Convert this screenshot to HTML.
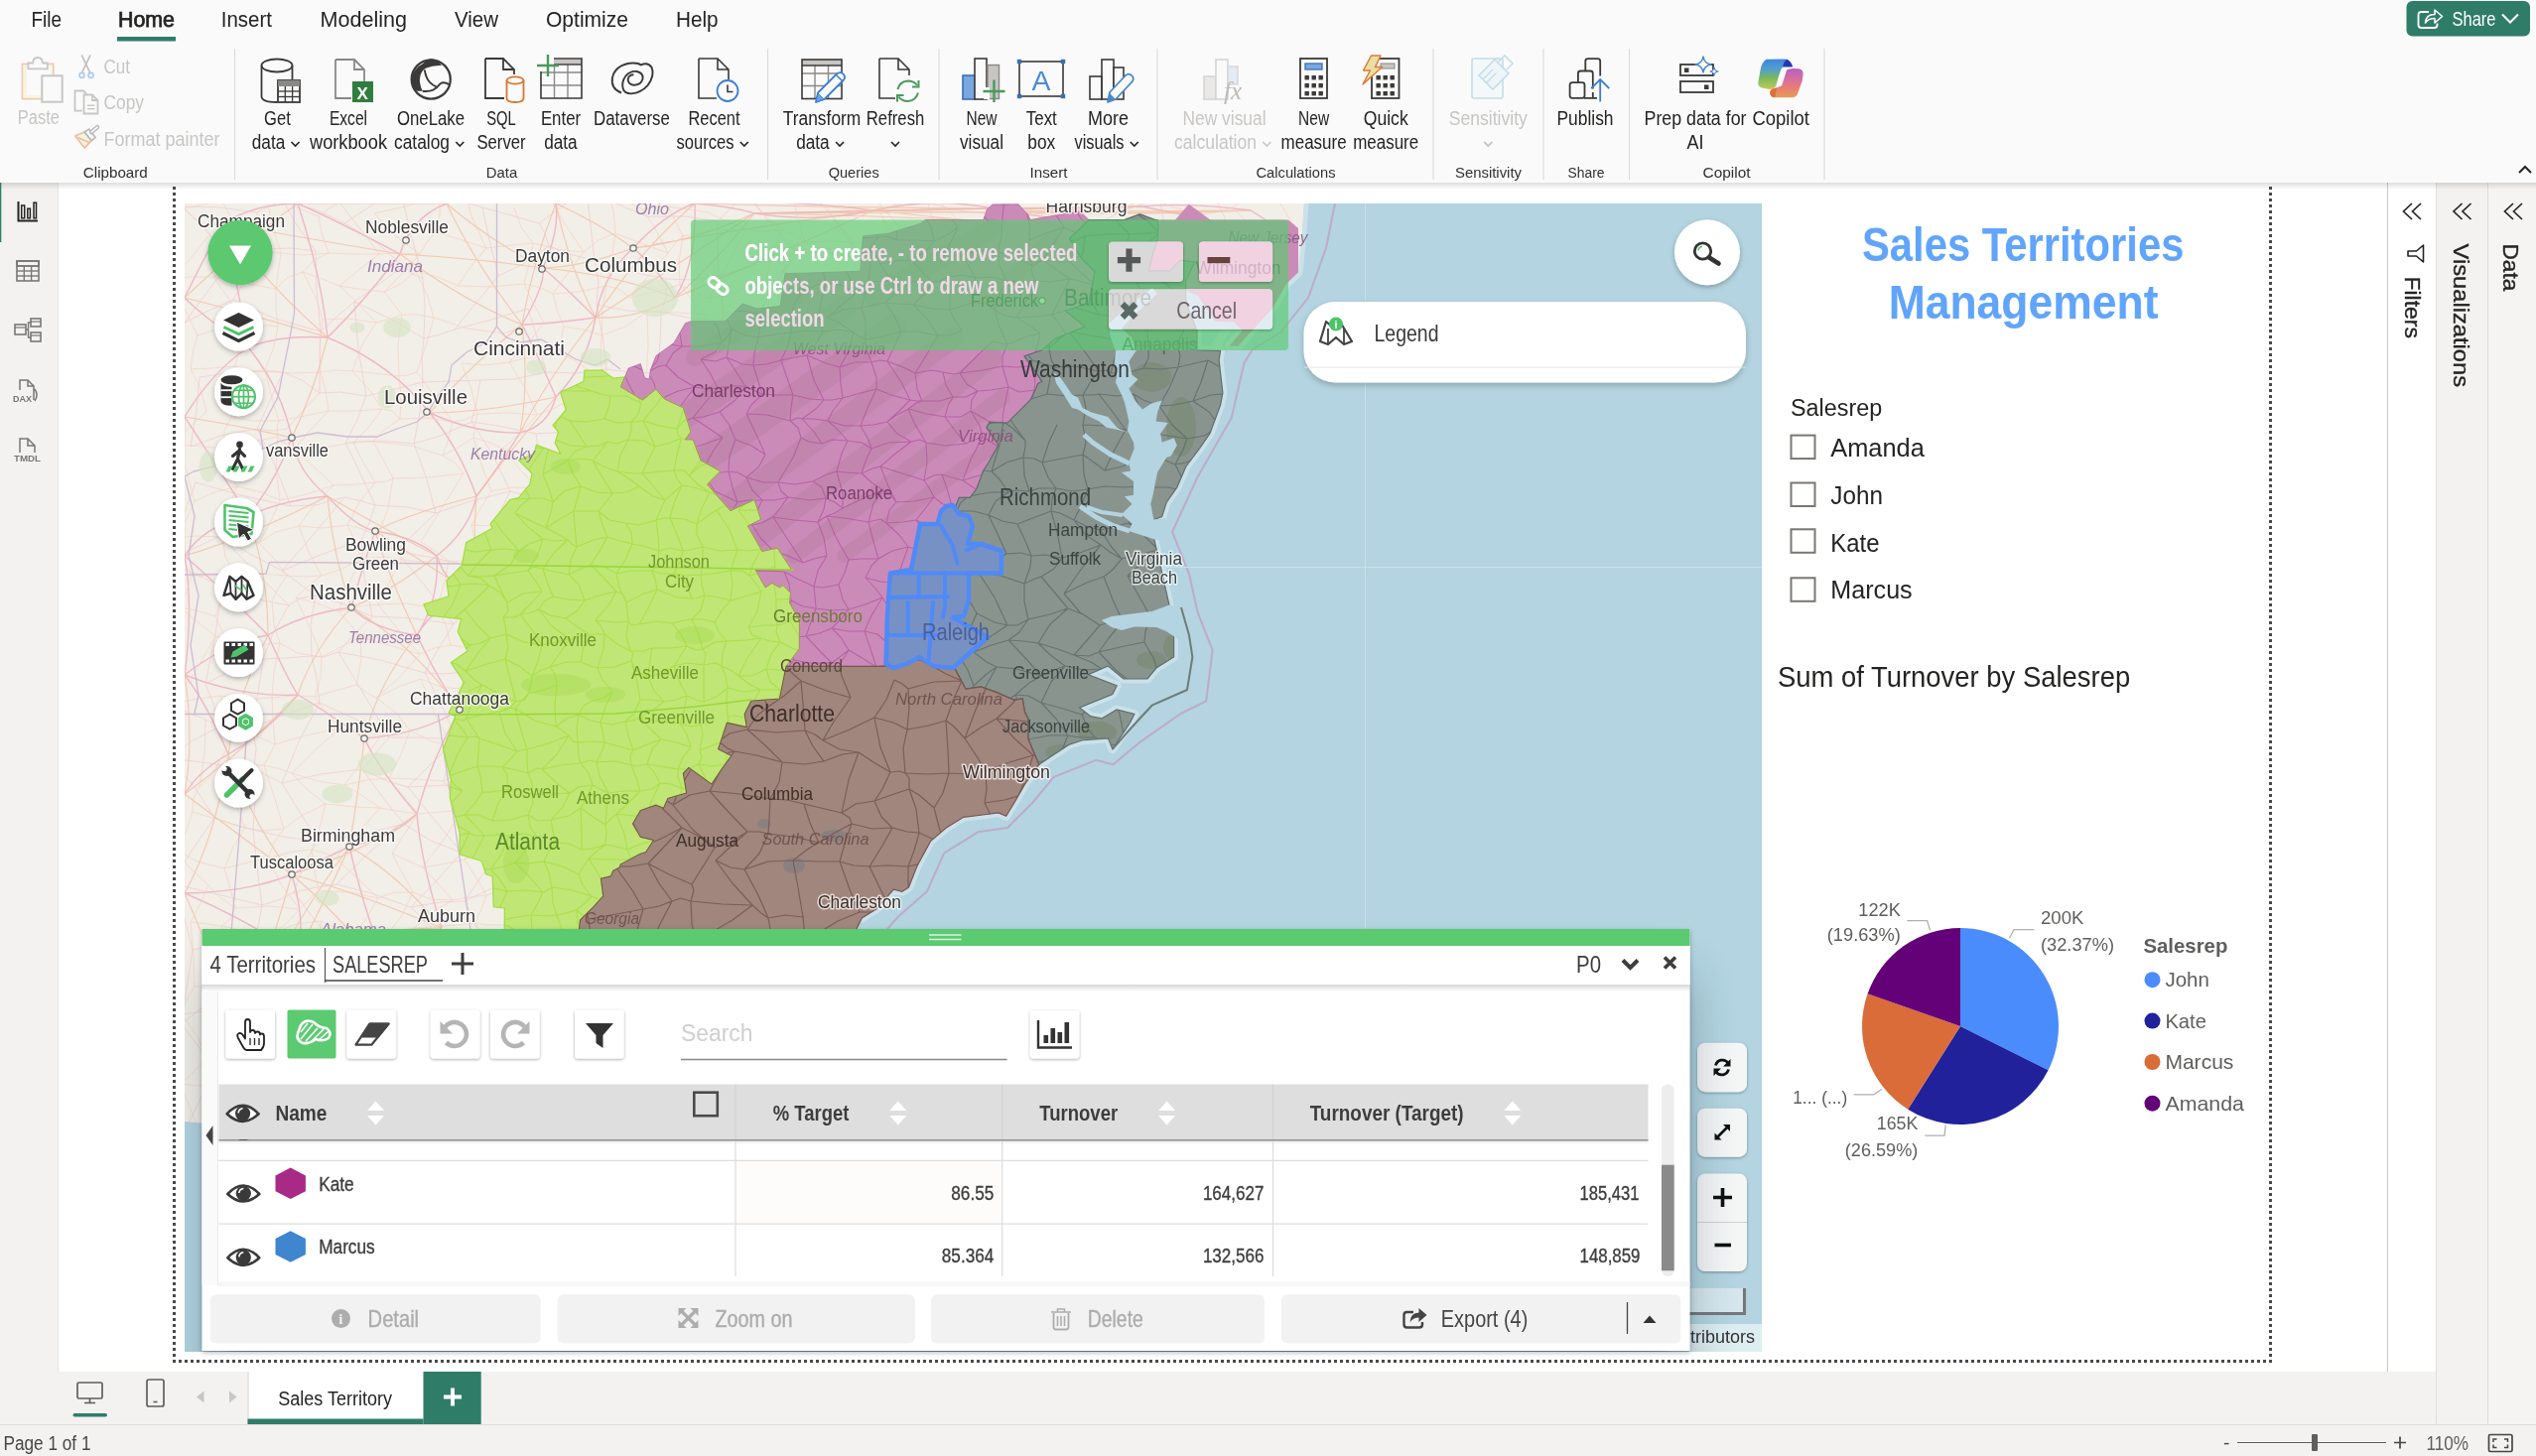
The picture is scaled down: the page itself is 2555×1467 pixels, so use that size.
<!DOCTYPE html>
<html lang="en"><head><meta charset="utf-8"><title>Sales Territory</title>
<style>
html,body{margin:0;padding:0;background:#fff;}
body{width:2555px;height:1467px;overflow:hidden;position:relative;font-family:"Liberation Sans", sans-serif;}
svg{position:absolute;left:0;top:0;display:block;will-change:transform;}
text{font-family:"Liberation Sans", sans-serif;white-space:pre;}
</style></head><body>
<svg width="2555" height="1467" viewBox="0 0 2555 1467">
<defs>
<filter id="sh" x="-30%" y="-30%" width="160%" height="160%"><feDropShadow dx="0" dy="2" stdDeviation="2.5" flood-color="#000" flood-opacity="0.28"/></filter>
<filter id="sh2" x="-30%" y="-30%" width="160%" height="160%"><feDropShadow dx="0" dy="1" stdDeviation="1.6" flood-color="#000" flood-opacity="0.35"/></filter>
<filter id="sh3" x="-10%" y="-30%" width="120%" height="180%"><feDropShadow dx="0" dy="3" stdDeviation="3" flood-color="#000" flood-opacity="0.22"/></filter>
<filter id="bigsh" x="-10%" y="-20%" width="120%" height="140%"><feGaussianBlur stdDeviation="26"/></filter>
<clipPath id="mapclip"><rect x="186" y="205" width="1589" height="1157"/></clipPath>
<clipPath id="toastclip"><rect x="696" y="221.5" width="602" height="131.5" rx="4"/></clipPath>
</defs>

<rect x="0.0" y="0.0" width="2555.0" height="1467.0" fill="#ffffff" />
<rect x="0.0" y="0.0" width="2555.0" height="184.0" fill="#fafafa" />
<linearGradient id="rsh" x1="0" y1="0" x2="0" y2="1"><stop offset="0" stop-color="#000" stop-opacity="0.13"/><stop offset="1" stop-color="#000" stop-opacity="0"/></linearGradient>
<rect x="0.0" y="184.0" width="58.0" height="1252.0" fill="#f3f2f1" />
<line x1="58.5" y1="184.0" x2="58.5" y2="1436.0" stroke="#e6e5e4" stroke-width="1" />
<rect x="58.0" y="1382.0" width="2497.0" height="54.0" fill="#f3f2f1" />
<rect x="0.0" y="1435.0" width="2555.0" height="32.0" fill="#f3f2f1" />
<line x1="0.0" y1="1435.5" x2="2555.0" y2="1435.5" stroke="#dddcdb" stroke-width="1" />
<rect x="2405.0" y="184.0" width="49.0" height="1198.0" fill="#ffffff" />
<line x1="2405.5" y1="184.0" x2="2405.5" y2="1382.0" stroke="#c8c6c4" stroke-width="1" />
<rect x="2454.0" y="184.0" width="52.0" height="1252.0" fill="#f3f2f1" />
<rect x="2506.0" y="184.0" width="49.0" height="1252.0" fill="#f5f4f3" />
<line x1="2454.5" y1="184.0" x2="2454.5" y2="1436.0" stroke="#e1dfdd" stroke-width="1" />
<line x1="2506.5" y1="184.0" x2="2506.5" y2="1436.0" stroke="#e1dfdd" stroke-width="1" />
<rect x="0.0" y="184.0" width="2555.0" height="7.0" fill="url(#rsh)" />
<rect x="0.0" y="184.0" width="1.3" height="60.0" fill="#2f7d68" />
<line x1="175.5" y1="188.0" x2="175.5" y2="1373.0" stroke="#4a4a4a" stroke-width="3" stroke-dasharray="3 3"/>
<line x1="2287.5" y1="188.0" x2="2287.5" y2="1373.0" stroke="#4a4a4a" stroke-width="3" stroke-dasharray="3 3"/>
<line x1="174.0" y1="1371.5" x2="2289.0" y2="1371.5" stroke="#4a4a4a" stroke-width="3" stroke-dasharray="3 3"/>
<g clip-path="url(#mapclip)">
<rect x="186.0" y="205.0" width="1589.0" height="1157.0" fill="#f2eee8" />
<path d="M225,225Q258,205 300,205M225,225Q210,251 186,300M225,225Q239,284 250,350M403,256Q414,219 450,205M403,256Q364,307 330,340M403,256Q341,223 300,205M547,270Q550,286 526,327M547,270Q564,232 560,205M547,270Q564,284 600,320M638,250Q663,271 680,300M638,250Q670,215 700,205M638,250Q607,277 600,320M526,327Q558,326 600,320M526,327Q542,358 560,400M433,416Q479,437 524,436M433,416Q463,452 480,500M433,416Q395,367 330,340M294,441Q299,475 330,500M294,441Q279,483 250,520M294,441Q283,390 250,350M524,436Q552,430 560,400M524,436Q501,473 480,500M378,535Q358,531 330,500M378,535Q418,541 440,560M378,535Q363,578 354,612M354,612Q375,634 420,640M354,612Q302,619 270,640M463,715Q443,688 420,640M463,715Q424,740 367,744M463,715Q435,765 420,820M367,744Q324,714 300,700M367,744Q386,782 420,820M352,853Q319,869 294,881M352,853Q399,842 420,820M294,881Q308,928 300,960M294,881Q250,899 186,900M445,935Q410,955 400,1000M445,935Q424,868 420,820M186,300Q207,321 250,350M186,300Q173,370 186,420M186,420Q214,374 250,350M186,420Q228,484 250,520M186,560Q206,529 250,520M186,560Q224,593 270,640M186,560Q195,611 186,680M186,680Q209,710 230,760M186,680Q229,647 270,640M186,680Q244,703 300,700M186,800Q201,776 230,760M186,800Q177,858 186,900M186,900Q238,922 300,960M300,205Q324,279 330,340M450,205Q501,192 560,205M700,205Q743,209 760,215M700,205Q702,266 680,300M330,340Q282,337 250,350M270,640Q288,681 300,700M230,760Q269,738 300,700M300,960Q357,979 400,1000M300,960Q261,1013 240,1050M400,1000Q371,935 352,853M560,400Q591,369 600,320M480,500Q473,534 440,560M420,640Q440,606 480,600M420,640Q443,604 440,560M330,500Q283,504 250,520M480,600Q450,591 440,560M760,215Q822,225 880,212M880,212Q941,198 1000,210M880,212Q788,200 700,205M1000,210Q1081,211 1150,208M1000,210Q875,213 760,215M1150,208Q1198,204 1260,212M1150,208Q1233,224 1300,240M1260,212Q1283,226 1300,240M1300,240Q1149,237 1000,210" fill="none" stroke="#e9a3b8" stroke-width="1.4" opacity="0.7"/>
<path d="M225,225Q265,283 330,340M225,225Q301,239 403,256M403,256Q468,304 526,327M403,256Q477,260 547,270M547,270Q587,269 638,250M547,270Q490,240 450,205M638,250Q604,225 560,205M526,327Q533,387 524,436M526,327Q536,268 560,205M433,416Q494,415 560,400M433,416Q470,371 526,327M294,441Q317,393 330,340M294,441Q242,429 186,420M524,436Q550,384 600,320M378,535Q416,516 480,500M378,535Q390,577 420,640M354,612Q394,596 440,560M354,612Q315,655 300,700M463,715Q468,668 480,600M463,715Q421,654 354,612M367,744Q362,792 352,853M367,744Q380,690 420,640M352,853Q326,910 300,960M352,853Q403,882 445,935M294,881Q237,838 186,800M294,881Q251,824 230,760M445,935Q368,935 300,960M445,935Q356,898 294,881M186,300Q246,243 300,205M186,300Q251,316 330,340M186,420Q185,490 186,560M186,560Q245,543 330,500M186,680Q196,745 186,800M186,800Q244,758 300,700M186,900Q217,844 230,760M186,900Q223,984 240,1050M300,205Q367,205 450,205M450,205Q475,260 526,327M560,205Q573,268 600,320M700,205Q643,201 560,205M700,205Q642,255 600,320M270,640Q270,579 250,520M230,760Q238,704 270,640M420,820Q368,858 294,881M400,1000Q360,938 294,881M400,1000Q317,1038 240,1050M240,1050Q273,956 294,881M240,1050Q286,942 352,853M560,400Q510,459 480,500M480,500Q476,551 480,600M600,320Q641,322 680,300M680,300Q718,268 760,215M680,300Q623,277 547,270M330,500Q335,558 354,612M330,500Q378,528 440,560M480,600Q425,566 378,535M760,215Q697,244 638,250M760,215Q680,268 600,320M880,212Q766,264 680,300M880,212Q750,230 638,250M1000,210Q1132,219 1260,212M1000,210Q839,209 700,205M1150,208Q1017,217 880,212M1150,208Q967,210 760,215M1260,212Q1070,217 880,212M1260,212Q1009,214 760,215M1300,240Q1096,237 880,212M1300,240Q1042,221 760,215" fill="none" stroke="#f2bc9c" stroke-width="1.1" opacity="0.75"/>
<clipPath id="landclip"><path d="M186.0,205.0 L1314.0,205.0 L1312.0,234.4 L1308.0,274.6 L1296.4,285.4 L1282.1,310.4 L1247.3,348.8 L1238.4,348.8 L1251.8,332.7 L1242.9,324.6 L1224.1,323.8 L1207.1,297.9 L1194.6,292.5 L1195.0,305.0 L1200.0,318.0 L1206.0,333.0 L1206.0,352.7 L1229.6,353.3 L1228.1,362.7 L1231.9,395.9 L1229.6,408.0 L1219.0,436.7 L1208.5,451.8 L1194.9,470.0 L1185.8,491.1 L1175.2,506.2 L1170.7,520.6 L1162.4,523.6 L1162.8,543.3 L1171.6,580.8 L1178.0,609.5 L1182.6,640.0 L1182.6,662.0 L1165.0,673.0 L1156.0,684.0 L1131.9,684.0 L1116.4,671.0 L1096.5,679.7 L1125.2,690.8 L1120.8,699.6 L1087.7,712.9 L1098.7,721.7 L1109.8,723.9 L1125.2,715.0 L1142.9,719.5 L1138.5,728.3 L1120.8,754.8 L1116.4,743.8 L1090.0,746.0 L1076.7,750.4 L1063.4,759.2 L1046.8,770.3 L1032.5,790.2 L1023.7,805.6 L1013.7,822.2 L1006.0,818.9 L990.0,821.0 L970.7,823.3 L953.0,834.3 L937.5,847.6 L924.3,871.9 L915.5,894.0 L908.8,898.4 L900.4,896.2 L882.7,916.0 L868.3,924.9 L862.8,936.3 L850.0,970.0 L700.0,1100.0 L560.0,1180.0 L400.0,1150.0 L186.0,1130.0 L186.0,1130.0Z"/></clipPath>
<path d="M184,208L222,209L259,214M184,208L208,233L234,261M234,261L248,256L265,251M234,261L209,294L186,325M186,325L210,313L235,302M201,380L244,374L285,375M201,380L198,413L192,450M192,450L225,438L259,432M197,486L243,499L293,510M197,486L182,527L168,567M168,567L194,553L222,540M168,567L194,577L224,591M224,591L256,603L291,610M224,591L217,639L207,689M207,689L234,675L265,664M207,689L216,712L222,732M222,732L237,734L254,733M222,732L194,746L171,764M171,764L211,769L256,775M171,764L196,793L216,824M216,824L236,831L255,836M216,824L194,856L172,890M172,890L215,900L264,912M172,890L186,925L194,957M194,957L226,950L256,948M194,957L188,996L183,1032M183,1032L204,1015L226,998M183,1032L202,1057L216,1081M216,1081L253,1073L286,1061M216,1081L200,1111L186,1140M186,1140L218,1138L247,1131M186,1140L201,1163L213,1181M213,1181L239,1192L259,1201M213,1181L208,1225L208,1271M259,214L273,207L285,202M259,214L261,232L265,251M265,251L294,250L318,253M265,251L250,277L235,302M235,302L277,321L323,334M285,375L304,383L322,396M285,375L271,406L259,432M259,432L275,434L289,432M259,432L277,469L293,510M293,510L318,509L347,501M222,540L252,558L284,575M222,540L256,575L291,610M291,610L302,603L318,600M291,610L276,636L265,664M265,664L288,663L314,661M265,664L260,698L254,733M254,733L285,721L322,708M254,733L258,754L256,775M256,775L270,782L284,789M256,775L257,807L255,836M255,836L290,844L320,847M255,836L259,874L264,912M264,912L283,906L296,899M264,912L260,933L256,948M256,948L301,954L351,958M256,948L243,973L226,998M226,998L265,1016L305,1033M226,998L254,1029L286,1061M286,1061L301,1058L317,1060M286,1061L267,1094L247,1131M247,1131L283,1137L320,1147M247,1131L255,1169L259,1201M259,1201L292,1189L320,1177M259,1201L242,1230L228,1255M285,202L318,211L347,225M285,202L299,227L318,253M318,253L319,292L323,334M323,334L337,321L357,304M323,334L322,364L322,396M322,396L343,395L369,399M322,396L305,414L289,432M347,501L361,504L378,509M347,501L318,536L284,575M284,575L323,559L364,544M284,575L304,590L318,600M318,600L347,609L375,621M318,600L313,629L314,661M314,661L326,662L341,657M314,661L319,683L322,708M322,708L359,725L392,743M322,708L301,747L284,789M284,789L323,780L365,775M284,789L303,820L320,847M320,847L365,841L407,830M320,847L306,872L296,899M296,899L319,894L339,891M296,899L321,932L351,958M351,958L369,949L387,940M351,958L329,994L305,1033M305,1033L327,1020L346,1011M305,1033L313,1045L317,1060M317,1060L355,1057L392,1059M317,1060L321,1101L320,1147M320,1147L338,1148L354,1150M320,1147L320,1160L320,1177M320,1177L366,1187L410,1198M320,1177L318,1223L313,1268M347,225L376,206L402,185M347,225L379,244L406,268M406,268L414,275L426,281M406,268L381,287L357,304M357,304L393,321L427,341M357,304L361,352L369,399M369,399L394,393L426,385M369,399L359,425L348,446M348,446L381,444L417,447M348,446L363,477L378,509M378,509L410,511L439,517M378,509L372,527L364,544M364,544L380,547L399,555M364,544L367,581L375,621M375,621L416,623L457,629M375,621L355,641L341,657M341,657L383,665L428,678M341,657L368,702L392,743M392,743L425,743L460,745M392,743L381,756L365,775M365,775L390,787L411,793M365,775L386,804L407,830M407,830L434,847L465,859M407,830L372,859L339,891M339,891L374,900L414,914M387,940L426,949L463,962M387,940L366,974L346,1011M346,1011L387,1011L424,1012M346,1011L372,1036L392,1059M392,1059L421,1070L451,1080M392,1059L372,1106L354,1150M354,1150L377,1147L399,1139M354,1150L381,1176L410,1198M410,1198L441,1201L469,1208M410,1198L387,1226L368,1253M402,185L442,195L486,209M402,185L413,232L426,281M426,281L428,309L427,341M427,341L440,338L458,332M427,341L425,360L426,385M426,385L454,384L484,383M426,385L423,415L417,447M417,447L444,439L475,425M417,447L430,483L439,517M439,517L474,505L514,495M439,517L417,538L399,555M399,555L442,563L481,572M399,555L428,590L457,629M457,629L474,610L494,589M457,629L442,653L428,678M428,678L446,679L467,677M428,678L446,713L460,745M460,745L474,728L492,712M460,745L435,769L411,793M411,793L451,791L494,792M411,793L436,824L465,859M465,859L484,860L502,860M465,859L442,885L414,914M414,914L444,909L468,908M414,914L440,941L463,962M463,962L476,960L492,956M463,962L443,986L424,1012M424,1012L456,1023L489,1035M424,1012L436,1044L451,1080M451,1080L486,1073L522,1070M451,1080L424,1107L399,1139M399,1139L439,1130L480,1125M399,1139L435,1174L469,1208M469,1208L476,1199L489,1191M469,1208L446,1225L428,1244M486,209L515,217L543,225M486,209L493,242L502,278M502,278L527,266L553,248M502,278L479,306L458,332M458,332L495,322L532,311M484,383L518,382L550,375M484,383L480,405L475,425M475,425L507,430L540,437M475,425L497,459L514,495M514,495L532,500L555,510M514,495L496,532L481,572M481,572L486,579L494,589M494,589L518,587L544,590M494,589L480,632L467,677M467,677L510,663L550,649M467,677L480,697L492,712M492,712L492,755L494,792M494,792L511,796L526,798M494,792L501,828L502,860M502,860L523,844L542,827M502,860L485,883L468,908M468,908L500,893L532,880M468,908L479,930L492,956M492,956L532,949L578,947M492,956L488,997L489,1035M489,1035L504,1018L518,997M489,1035L504,1055L522,1070M522,1070L543,1070L569,1073M522,1070L502,1097L480,1125M480,1125L508,1134L540,1140M480,1125L483,1159L489,1191M489,1191L535,1201L577,1211M489,1191L491,1228L491,1264M543,225L569,206L591,191M543,225L549,235L553,248M553,248L573,256L599,262M532,311L542,343L550,375M550,375L580,376L611,372M540,437L571,435L601,438M540,437L546,475L555,510M555,510L554,528L555,551M555,551L571,558L587,566M555,551L552,573L544,590M544,590L591,592L639,593M544,590L550,619L550,649M550,649L581,666L611,679M550,649L559,687L572,730M572,730L549,762L526,798M526,798L559,801L598,803M526,798L534,811L542,827M542,827L579,836L616,846M542,827L534,851L532,880M532,880L569,895L609,914M532,880L555,917L578,947M578,947L611,952L641,957M578,947L550,972L518,997M518,997L559,1001L599,1004M518,997L542,1037L569,1073M569,1073L603,1080L631,1089M569,1073L556,1104L540,1140M540,1140L567,1139L598,1143M540,1140L557,1177L577,1211M577,1211L593,1207L608,1209M577,1211L562,1221L542,1236M591,191L623,206L652,218M591,191L595,228L599,262M599,262L637,274L671,281M599,262L603,284L601,307M601,307L632,313L666,314M601,307L607,338L611,372M611,372L635,375L661,376M611,372L605,406L601,438M601,438L625,446L652,449M601,438L611,471L626,506M626,506L651,492L678,474M626,506L608,534L587,566M587,566L623,549L664,534M587,566L610,579L639,593M639,593L664,595L692,597M611,679L629,679L643,682M611,679L606,705L605,725M605,725L637,717L663,712M605,725L602,762L598,803M598,803L625,802L651,795M598,803L605,824L616,846M616,846L613,879L609,914M609,914L637,908L670,901M609,914L627,937L641,957M641,957L670,947L699,941M641,957L621,980L599,1004M599,1004L618,1010L638,1018M599,1004L615,1047L631,1089M631,1089L647,1088L670,1085M631,1089L615,1116L598,1143M598,1143L603,1179L608,1209M608,1209L650,1203L694,1194M652,218L690,218L723,223M671,281L696,282L724,278M671,281L671,300L666,314M666,314L697,321L729,322M666,314L665,347L661,376M661,376L702,371L740,366M661,376L659,411L652,449M652,449L682,440L710,437M652,449L667,461L678,474M678,474L712,476L742,474M678,474L671,506L664,534M664,534L694,543L729,554M664,534L675,564L692,597M692,597L714,608L733,624M692,597L667,641L643,682M643,682L679,673L711,669M663,712L705,712L745,708M663,712L655,754L651,795M651,795L677,787L710,781M651,795L673,822L694,851M694,851L727,855L757,862M694,851L683,876L670,901M670,901L681,903L698,900M670,901L683,919L699,941M699,941L670,979L638,1018M638,1018L679,1024L722,1035M638,1018L653,1054L670,1085M670,1085L703,1076L736,1067M656,1134L676,1135L694,1138M656,1134L674,1166L694,1194M694,1194L727,1185L756,1175M694,1194L671,1218L642,1244M723,223L738,208L753,193M723,223L723,249L724,278M724,278L766,266L803,255M724,278L727,299L729,322M729,322L742,327L760,326M729,322L734,343L740,366M740,366L761,378L778,389M740,366L722,404L710,437M710,437L729,437L749,437M710,437L727,455L742,474M742,474L766,475L784,482M742,474L735,513L729,554M729,554L747,553L767,550M729,554L733,592L733,624M733,624L724,647L711,669M711,669L742,659L767,654M711,669L728,689L745,708M745,708L767,719L782,733M745,708L725,744L710,781M710,781L738,782L772,786M710,781L734,823L757,862M757,862L786,856L810,848M757,862L725,881L698,900M698,900L742,897L782,889M698,900L706,927L721,956M721,956L763,962L806,973M721,956L720,995L722,1035M722,1035L753,1020L784,1009M722,1035L729,1050L736,1067M736,1067L760,1080L787,1094M736,1067L713,1102L694,1138M694,1138L724,1149L754,1155M694,1138L727,1154L756,1175M756,1175L737,1202L720,1228M753,193L786,190L813,187M753,193L776,226L803,255M803,255L837,255L868,260M803,255L779,288L760,326M760,326L801,316L837,305M760,326L766,357L778,389M778,389L812,386L849,387M778,389L762,413L749,437M749,437L778,433L803,424M749,437L767,462L784,482M784,482L821,499L861,513M784,482L775,516L767,550M767,550L805,543L845,536M767,550L776,581L790,607M790,607L822,615L853,622M790,607L777,628L767,654M767,654L795,665L824,677M767,654L776,693L782,733M782,733L810,723L839,708M782,733L778,762L772,786M772,786L790,775L807,765M772,786L792,818L810,848M810,848L833,846L855,844M810,848L793,866L782,889M782,889L803,889L827,885M782,889L796,930L806,973M806,973L823,957L839,946M784,1009L810,1023L839,1039M784,1009L787,1052L787,1094M787,1094L831,1073L872,1057M787,1094L771,1127L754,1155M754,1155L776,1157L805,1153M754,1155L783,1162L812,1175M812,1175L831,1190L851,1203M813,187L845,196L883,202M813,187L842,223L868,260M868,260L891,248L915,242M868,260L854,279L837,305M837,305L866,321L891,336M837,305L840,344L849,387M849,387L876,382L897,377M849,387L824,405L803,424M803,424L850,426L893,433M803,424L832,466L861,513M861,513L879,498L898,480M861,513L853,526L845,536M845,536L865,531L883,532M845,536L847,580L853,622M853,622L890,621L928,624M853,622L839,650L824,677M824,677L858,683L891,685M824,677L832,693L839,708M839,708L824,735L807,765M807,765L848,775L886,785M807,765L828,806L855,844M855,844L895,850L932,856M855,844L842,867L827,885M827,885L849,902L871,919M827,885L835,913L839,946M839,946L883,956L922,971M839,946L839,993L839,1039M839,1039L865,1028L896,1013M839,1039L857,1045L872,1057M872,1057L898,1073L928,1092M872,1057L839,1103L805,1153M805,1153L848,1151L891,1145M805,1153L829,1177L851,1203M851,1203L833,1227L816,1248M883,202L906,201L933,204M883,202L899,220L915,242M915,242L930,247L947,257M915,242L902,288L891,336M891,336L919,334L946,326M891,336L896,359L897,377M897,377L927,389L957,399M897,377L896,407L893,433M893,433L918,429L947,430M898,480L939,488L976,498M898,480L889,507L883,532M883,532L906,577L928,624M928,624L962,618L991,617M891,685L917,685L949,681M891,685L904,702L917,723M917,723L904,751L886,785M886,785L913,788L945,796M886,785L912,822L932,856M932,856L947,848L958,839M932,856L902,886L871,919M871,919L895,903L920,888M871,919L898,945L922,971M922,971L940,956L964,941M922,971L912,992L896,1013M896,1013L911,1023L929,1035M896,1013L915,1055L928,1092M928,1092L912,1121L891,1145M891,1145L926,1141L961,1136M891,1145L907,1166L923,1187M923,1187L907,1211L892,1230M933,204L965,212L1002,216M947,257L974,271L1007,282M947,257L947,292L946,326M946,326L966,320L983,320M946,326L953,365L957,399M957,399L984,388L1012,379M957,399L949,416L947,430M947,430L976,424L1003,418M947,430L963,464L976,498M976,498L1014,493L1047,492M976,498L957,523L941,548M941,548L969,551L999,557M941,548L965,583L991,617M991,617L1008,608L1021,602M991,617L969,648L949,681M949,681L978,678L1005,672M949,681L967,695L990,706M990,706L1002,721L1017,737M945,796L966,782L989,764M958,839L985,832L1016,823M958,839L938,865L920,888M920,888L950,900L983,912M920,888L942,916L964,941M964,941L993,958L1022,977M964,941L949,986L929,1035M929,1035L971,1019L1009,997M971,1075L1012,1083L1049,1095M971,1075L969,1104L961,1136M961,1136L971,1146L979,1151M961,1136L978,1166L991,1197M991,1197L1005,1192L1024,1190M1002,216L1028,219L1057,224M1002,216L1003,247L1007,282M1007,282L1051,272L1095,262M1007,282L997,301L983,320M983,320L996,347L1012,379M1012,379L1053,373L1090,362M1012,379L1006,397L1003,418M1003,418L1031,428L1061,435M1047,492L1060,485L1072,475M1047,492L1021,527L999,557M999,557L1012,579L1021,602M1021,602L1050,608L1082,618M1021,602L1011,634L1005,672M1005,672L1031,665L1054,659M1005,672L1011,702L1017,737M1017,737L1052,727L1089,723M1017,737L1004,749L989,764M989,764L1029,774L1068,786M989,764L1005,794L1016,823M1016,823L1062,843L1107,863M1016,823L1002,866L983,912M983,912L1005,942L1022,977M1022,977L1048,975L1068,976M1022,977L1017,985L1009,997M1009,997L1037,1013L1069,1023M1009,997L1026,1047L1049,1095M1049,1095L1064,1080L1079,1065M1049,1095L1014,1122L979,1151M979,1151L1022,1142L1064,1136M979,1151L1002,1170L1024,1190M1024,1190L1056,1193L1089,1197M1024,1190L1024,1213L1019,1238M1057,224L1077,227L1103,226M1057,224L1078,245L1095,262M1095,262L1130,271L1161,280M1095,262L1086,301L1077,335M1077,335L1085,317L1094,302M1077,335L1083,348L1090,362M1090,362L1110,371L1133,376M1090,362L1078,401L1061,435M1061,435L1092,429L1119,419M1061,435L1069,453L1072,475M1072,475L1107,474L1145,476M1072,475L1062,506L1057,536M1057,536L1078,549L1096,561M1057,536L1072,578L1082,618M1082,618L1115,615L1145,617M1054,659L1080,661L1108,668M1054,659L1073,694L1089,723M1089,723L1107,723L1130,720M1089,723L1081,757L1068,786M1068,786L1099,794L1125,800M1107,863L1116,844L1124,826M1107,863L1084,874L1066,889M1066,889L1095,899L1128,906M1066,889L1068,933L1068,976M1068,976L1110,959L1155,946M1068,976L1069,1002L1069,1023M1069,1023L1092,1017L1111,1006M1069,1023L1076,1044L1079,1065M1079,1065L1070,1099L1064,1136M1064,1136L1092,1142L1121,1155M1064,1136L1077,1166L1089,1197M1089,1197L1111,1193L1135,1193M1089,1197L1077,1215L1067,1235M1103,226L1133,212L1169,199M1103,226L1135,254L1161,280M1161,280L1172,278L1183,280M1161,280L1130,288L1094,302M1094,302L1125,304L1153,303M1094,302L1114,341L1133,376M1133,376L1167,377L1204,378M1119,419L1148,425L1180,428M1119,419L1130,448L1145,476M1145,476L1180,478L1213,476M1145,476L1122,519L1096,561M1096,561L1127,560L1159,560M1096,561L1120,592L1145,617M1145,617L1161,607L1183,602M1145,617L1128,642L1108,668M1108,668L1145,673L1182,678M1108,668L1119,695L1130,720M1130,720L1162,713L1191,711M1130,720L1125,757L1125,800M1125,800L1142,795L1166,795M1125,800L1124,811L1124,826M1124,826L1126,867L1128,906M1128,906L1157,903L1181,904M1128,906L1140,929L1155,946M1155,946L1187,962L1219,978M1155,946L1131,978L1111,1006M1111,1006L1150,1009L1190,1014M1111,1006L1133,1037L1157,1069M1157,1069L1185,1067L1214,1066M1157,1069L1138,1112L1121,1155M1121,1155L1142,1141L1164,1129M1121,1155L1131,1176L1135,1193M1135,1193L1179,1202L1220,1208M1135,1193L1131,1233L1125,1268M1169,199L1197,199L1224,199M1169,199L1174,241L1183,280M1183,280L1222,268L1254,258M1183,280L1165,291L1153,303M1153,303L1184,314L1217,324M1153,303L1178,343L1204,378M1204,378L1240,377L1272,381M1204,378L1194,405L1180,428M1180,428L1213,435L1245,440M1180,428L1198,453L1213,476M1213,476L1230,492L1245,506M1213,476L1189,516L1159,560M1159,560L1202,553L1247,543M1183,602L1211,607L1238,612M1183,602L1180,641L1182,678M1182,678L1208,673L1232,672M1182,678L1186,692L1191,711M1191,711L1235,723L1280,734M1166,795L1207,779L1243,766M1166,795L1178,809L1195,826M1195,826L1229,843L1261,856M1195,826L1187,864L1181,904M1181,904L1194,893L1212,883M1181,904L1198,940L1219,978M1219,978L1247,976L1269,977M1219,978L1203,994L1190,1014M1190,1014L1202,1017L1212,1023M1190,1014L1203,1037L1214,1066M1214,1066L1231,1074L1243,1086M1214,1066L1190,1097L1164,1129M1164,1129L1199,1125L1237,1122M1164,1129L1192,1170L1220,1208M1220,1208L1234,1208L1247,1203M1220,1208L1189,1226L1161,1243M1224,199L1256,197L1283,198M1224,199L1239,230L1254,258M1254,258L1297,262L1338,271M1254,258L1237,289L1217,324M1217,324L1254,322L1288,323M1217,324L1243,354L1272,381M1272,381L1301,382L1327,388M1272,381L1259,411L1245,440M1245,440L1273,436L1306,433M1245,506L1290,502L1331,502M1245,506L1243,526L1247,543M1247,543L1274,556L1304,566M1247,543L1241,577L1238,612M1238,612L1285,619L1332,628M1238,612L1233,641L1232,672M1232,672L1267,672L1308,675M1232,672L1254,700L1280,734M1280,734L1299,735L1318,736M1280,734L1264,751L1243,766M1243,766L1273,775L1301,782M1243,766L1252,810L1261,856M1261,856L1287,842L1313,827M1261,856L1238,871L1212,883M1212,883L1252,901L1299,923M1212,883L1242,930L1269,977M1269,977L1289,963L1312,944M1269,977L1242,1001L1212,1023M1212,1023L1243,1018L1275,1014M1212,1023L1230,1057L1243,1086M1243,1086L1278,1088L1308,1096M1243,1086L1243,1104L1237,1122M1237,1122L1251,1125L1269,1125M1237,1122L1245,1160L1247,1203M1247,1203L1237,1231L1231,1261M1283,198L1303,201L1327,203M1338,271L1360,276L1379,281M1338,271L1311,296L1288,323M1288,323L1308,311L1326,304M1288,323L1307,354L1327,388M1327,388L1345,374L1361,367M1327,388L1317,409L1306,433M1306,433L1322,439L1334,447M1331,502L1353,493L1379,483M1331,502L1319,536L1304,566M1304,566L1315,552L1332,543M1304,566L1315,596L1332,628M1332,628L1344,625L1361,622M1308,675L1321,675L1338,671M1308,675L1314,706L1318,736M1318,736L1310,758L1301,782M1301,782L1317,793L1335,802M1301,782L1307,807L1313,827M1313,827L1352,834L1393,836M1313,827L1303,873L1299,923M1299,923L1322,924L1348,921M1299,923L1308,935L1312,944M1312,944L1342,947L1374,947M1312,944L1291,979L1275,1014M1275,1014L1301,1023L1326,1037M1275,1014L1294,1054L1308,1096M1308,1096L1346,1083L1388,1070M1308,1096L1286,1110L1269,1125M1269,1125L1309,1130L1347,1134M1269,1125L1282,1162L1300,1198M1300,1198L1335,1202L1365,1213M1300,1198L1300,1218L1300,1235M1327,203L1356,205L1382,204M1327,203L1350,244L1379,281M1379,281L1401,276L1427,276M1379,281L1354,292L1326,304M1326,304L1367,317L1413,326M1326,304L1346,332L1361,367M1361,367L1388,363L1418,364M1361,367L1346,407L1334,447M1334,447L1363,437L1396,426M1334,447L1355,465L1379,483M1379,483L1414,489L1449,496M1379,483L1356,511L1332,543M1332,543L1368,561L1410,575M1332,543L1346,583L1361,622M1361,622L1348,648L1338,671M1338,671L1364,678L1389,681M1338,671L1362,697L1389,726M1389,726L1402,735L1411,741M1389,726L1360,763L1335,802M1335,802L1379,798L1419,799M1393,836L1406,834L1415,833M1393,836L1373,881L1348,921M1348,921L1383,905L1414,883M1348,921L1362,937L1374,947M1374,947L1403,953L1432,958M1374,947L1352,989L1326,1037M1326,1037L1374,1028L1424,1021M1326,1037L1355,1053L1388,1070M1388,1070L1421,1067L1449,1066M1388,1070L1369,1100L1347,1134M1347,1134L1380,1132L1417,1129M1347,1134L1353,1170L1365,1213M1365,1213L1407,1191L1451,1173" fill="none" stroke="#efbfc9" stroke-width="0.9" clip-path="url(#landclip)" opacity="0.6" stroke-linejoin="round"/>
<path d="M185,210L206,206L223,201M185,210L200,224L212,235M212,235L194,258L171,283M171,283L191,279L215,279M171,283L185,309L199,338M199,338L221,331L243,328M199,338L195,352L192,372M192,372L214,371L237,369M192,372L202,391L208,415M208,415L190,431L175,449M175,449L197,449L225,452M175,449L188,474L196,505M196,505L216,496L239,490M196,505L187,525L172,543M172,543L196,540L224,541M172,543L185,564L193,580M193,580L213,580L235,576M193,580L187,598L181,612M181,612L198,615L217,621M181,612L202,629L217,641M217,641L227,644L233,649M217,641L196,678L172,710M172,710L199,704L222,701M172,710L192,719L207,725M207,725L218,730L234,737M207,725L206,758L201,793M201,793L211,784L218,772M201,793L195,804L194,818M194,818L221,826L247,834M194,818L187,839L175,855M175,855L199,868L226,875M175,855L190,873L210,892M210,892L221,904L237,915M210,892L202,910L192,929M192,929L209,931L223,933M192,929L195,963L196,994M196,994L227,995L255,997M196,994L189,1006L183,1022M183,1022L198,1020L212,1018M183,1022L198,1043L209,1065M209,1065L233,1062L256,1061M209,1065L194,1081L182,1092M182,1092L199,1094L219,1092M182,1092L196,1128L214,1163M214,1163L223,1156L233,1152M214,1163L209,1181L201,1194M223,201L244,197L268,190M223,201L236,226L253,251M253,251L269,253L283,255M253,251L236,267L215,279M215,279L245,285L278,291M215,279L232,303L243,328M243,328L260,327L280,329M243,328L241,351L237,369M237,369L252,374L267,373M237,369L234,397L233,420M233,420L256,424L281,424M233,420L226,434L225,452M225,452L255,445L280,440M225,452L229,472L239,490M239,490L263,496L282,504M239,490L229,517L224,541M224,541L244,547L261,547M224,541L227,561L235,576M235,576L262,578L289,580M235,576L225,595L217,621M217,621L224,637L233,649M233,649L257,650L282,648M222,701L248,705L274,703M222,701L229,717L234,737M234,737L257,741L277,750M234,737L227,757L218,772M218,772L242,771L266,771M218,772L235,805L247,834M247,834L265,837L286,835M247,834L235,853L226,875M226,875L250,869L270,865M226,875L232,896L237,915M237,915L271,913L302,916M237,915L231,927L223,933M223,933L252,939L276,940M223,933L242,968L255,997M255,997L271,995L291,996M255,997L234,1007L212,1018M212,1018L245,1025L277,1027M256,1061L269,1064L284,1062M256,1061L237,1074L219,1092M219,1092L247,1103L275,1109M233,1152L252,1154L273,1155M268,190L294,207L321,218M268,190L273,223L283,255M283,255L304,257L331,255M283,255L280,276L278,291M278,291L289,280L305,274M278,291L278,311L280,329M280,329L276,349L267,373M267,373L293,376L323,375M267,373L273,398L281,424M281,424L307,419L331,414M281,424L279,431L280,440M280,440L287,447L297,452M280,440L278,473L282,504M282,504L309,498L336,489M282,504L274,523L261,547M261,547L278,536L301,530M261,547L278,565L289,580M289,580L307,581L324,580M289,580L279,595L274,606M274,606L276,629L282,648M282,648L300,658L324,662M282,648L276,677L274,703M274,703L296,701L317,702M274,703L275,725L277,750M277,750L308,741L343,734M277,750L271,762L266,771M266,771L283,775L294,779M266,771L276,802L286,835M286,835L305,821L328,810M286,835L276,849L270,865M270,865L295,858L314,856M270,865L283,891L302,916M302,916L312,906L321,897M302,916L289,930L276,940M276,940L298,931L323,928M276,940L282,970L291,996M291,996L306,987L325,977M291,996L284,1010L277,1027M277,1027L282,1047L284,1062M284,1062L305,1072L321,1079M284,1062L277,1084L275,1109M275,1109L294,1108L309,1113M275,1109L274,1129L273,1155M273,1155L295,1152L319,1147M273,1155L275,1178L281,1198M321,218L333,209L342,204M321,218L324,235L331,255M331,255L358,256L382,256M331,255L317,262L305,274M305,274L322,280L342,288M305,274L318,299L325,322M325,322L350,321L379,325M325,322L322,349L323,375M323,375L338,373L355,374M323,375L328,393L331,414M331,414L359,414L385,412M331,414L312,434L297,452M297,452L325,451L356,446M297,452L319,473L336,489M336,489L359,488L378,486M336,489L317,508L301,530M301,530L325,532L350,529M301,530L311,556L324,580M324,580L345,573L364,563M324,580L311,590L298,602M298,602L317,607L341,616M298,602L313,634L324,662M324,662L345,651L363,642M324,662L323,683L317,702M317,702L341,695L359,690M317,702L328,717L343,734M343,734L361,737L384,741M343,734L319,754L294,779M294,779L320,787L347,791M294,779L309,795L328,810M328,810L358,813L383,814M328,810L322,834L314,856M314,856L326,859L338,865M314,856L317,879L321,897M321,897L353,899L381,905M323,928L339,935L359,940M323,928L323,951L325,977M325,977L347,976L374,977M325,977L311,1002L300,1023M300,1023L323,1020L347,1021M300,1023L308,1049L321,1079M321,1079L344,1072L367,1063M321,1079L316,1094L309,1113M309,1113L335,1103L360,1097M309,1113L316,1131L319,1147M319,1147L339,1142L361,1140M319,1147L314,1172L312,1200M342,204L364,232L382,256M382,256L400,255L423,256M382,256L364,270L342,288M342,288L361,291L387,294M342,288L360,305L379,325M379,325L394,321L405,317M379,325L365,347L355,374M355,374L377,376L402,379M355,374L373,394L385,412M385,412L395,414L403,422M385,412L371,431L356,446M356,446L367,445L376,445M356,446L365,464L378,486M378,486L390,485L396,482M378,486L362,506L350,529M350,529L365,533L381,540M350,529L357,544L364,563M364,563L386,561L405,564M364,563L351,589L341,616M341,616L363,611L381,609M341,616L351,627L363,642M363,642L395,651L423,659M363,642L364,664L359,690M359,690L371,699L379,703M384,741L399,741L413,736M384,741L364,768L347,791M347,791L370,786L392,784M347,791L364,801L383,814M383,814L400,817L421,820M383,814L362,837L338,865M338,865L358,883L381,905M381,905L397,899L416,899M381,905L371,922L359,940M359,940L373,943L388,944M359,940L369,961L374,977M374,977L395,976L418,977M374,977L361,999L347,1021M347,1021L375,1022L404,1025M347,1021L355,1044L367,1063M367,1063L393,1068L423,1072M367,1063L361,1077L360,1097M360,1097L381,1107L405,1113M360,1097L363,1120L361,1140M361,1140L385,1145L409,1145M361,1140L361,1163L365,1190M377,215L413,207L443,193M377,215L399,238L423,256M423,256L430,244L439,234M423,256L404,277L387,294M387,294L404,286L419,273M387,294L397,307L405,317M405,317L422,317L437,320M405,317L401,348L402,379M402,379L411,378L420,375M402,379L404,399L403,422M403,422L430,421L456,425M403,422L386,434L376,445M376,445L414,449L446,459M376,445L386,463L396,482M396,482L431,481L467,477M396,482L391,512L381,540M381,540L393,550L405,564M405,564L426,566L452,565M405,564L393,585L381,609M381,609L409,608L440,613M381,609L400,633L423,659M423,659L438,653L454,650M423,659L403,682L379,703M379,703L404,691L424,684M379,703L399,718L413,736M413,736L435,747L456,752M413,736L404,760L392,784M392,784L420,785L447,787M392,784L405,800L421,820M421,820L446,818L466,816M421,820L407,841L395,860M395,860L413,868L426,874M395,860L406,881L416,899M416,899L434,906L456,907M416,899L404,924L388,944M388,944L401,939L417,935M388,944L402,958L418,977M418,977L433,985L452,991M404,1025L425,1030L442,1033M404,1025L413,1046L423,1072M423,1072L433,1069L448,1062M423,1072L414,1093L405,1113M405,1113L424,1120L443,1122M405,1113L405,1130L409,1145M409,1145L429,1139L452,1138M409,1145L401,1171L394,1197M443,193L453,196L469,197M443,193L443,215L439,234M439,234L463,241L490,250M419,273L441,279L461,288M419,273L431,299L437,320M437,320L471,331L508,336M437,320L430,345L420,375M420,375L439,401L456,425M456,425L468,423L481,417M456,425L452,442L446,459M446,459L461,451L477,441M446,459L459,467L467,477M467,477L445,512L424,546M424,546L437,554L452,565M452,565L469,566L488,569M452,565L447,590L440,613M440,613L462,613L489,610M440,613L449,629L454,650M454,650L475,653L494,655M424,684L444,692L463,694M424,684L438,720L456,752M456,752L472,739L484,732M456,752L452,768L447,787M447,787L459,781L469,774M447,787L456,799L466,816M466,816L485,813L507,814M466,816L449,843L426,874M426,874L444,871L468,866M426,874L440,889L456,907M456,907L472,904L490,902M456,907L436,919L417,935M417,935L449,933L478,930M417,935L436,962L452,991M452,991L444,1013L442,1033M442,1033L451,1035L465,1035M442,1033L443,1048L448,1062M448,1062L480,1069L509,1071M448,1062L443,1094L443,1122M443,1122L454,1114L463,1105M443,1122L448,1132L452,1138M452,1138L443,1165L436,1190M469,197L476,220L490,250M490,250L516,247L537,245M490,250L474,269L461,288M461,288L495,289L528,286M508,336L527,328L548,325M465,366L488,368L513,365M465,366L475,393L481,417M481,417L511,416L541,418M481,417L478,430L477,441M477,441L494,446L506,452M477,441L486,471L495,495M495,495L517,491L542,492M495,495L483,514L475,529M475,529L498,530L519,537M475,529L480,551L488,569M488,569L513,572L541,569M488,569L486,591L489,610M489,610L497,604L508,600M489,610L491,633L494,655M494,655L517,659L547,665M494,655L477,675L463,694M463,694L476,710L484,732M484,732L513,732L547,727M484,732L475,752L469,774M469,774L494,777L524,777M469,774L491,795L507,814M507,814L515,810L529,812M507,814L489,841L468,866M468,866L488,858L511,847M468,866L481,886L490,902M490,902L504,897L520,890M490,902L485,916L478,930M478,930L490,932L508,932M478,930L490,950L499,972M499,972L510,985L523,994M499,972L482,1004L465,1035M465,1035L490,1027L510,1025M465,1035L490,1055L509,1071M509,1071L489,1090L463,1105M463,1105L484,1104L503,1099M487,1159L519,1162L546,1161M487,1159L474,1172L465,1180M518,209L525,229L537,245M537,245L566,252L588,254M537,245L533,266L528,286M528,286L545,290L557,296M528,286L538,307L548,325M548,325L533,345L513,365M513,365L538,359L568,357M513,365L529,391L541,418M541,418L559,411L579,400M541,418L526,435L506,452M506,452L537,459L566,462M506,452L525,474L542,492M542,492L558,488L580,490M542,492L532,513L519,537M519,537L529,535L540,533M519,537L529,553L541,569M541,569L559,573L571,571M541,569L523,586L508,600M508,600L527,611L542,628M508,600L528,635L547,665M547,665L559,664L576,658M547,665L527,689L511,712M511,712L538,711L566,709M511,712L526,722L547,727M547,727L559,731L577,739M547,727L537,749L524,777M524,777L544,779L566,775M524,777L525,794L529,812M529,812L561,809L588,805M529,812L522,827L511,847M511,847L537,856L564,862M511,847L516,866L520,890M520,890L553,901L579,917M520,890L515,912L508,932M508,932L525,937L546,940M508,932L514,962L523,994M523,994L556,995L585,992M523,994L516,1009L510,1025M510,1025L536,1028L556,1034M510,1025L525,1050L538,1079M538,1079L560,1077L581,1078M538,1079L520,1090L503,1099M503,1099L534,1100L560,1103M503,1099L525,1129L546,1161M546,1161L560,1150L569,1135M546,1161L535,1173L527,1190M551,195L578,197L611,194M551,195L568,224L588,254M588,254L603,242L620,235M588,254L573,274L557,296M557,296L583,294L611,288M557,296L561,312L568,329M568,329L588,332L606,338M568,329L565,344L568,357M568,357L586,368L607,384M579,400L596,406L608,407M579,400L574,429L566,462M566,462L586,454L601,444M566,462L574,473L580,490M580,490L597,494L619,498M580,490L561,513L540,533M540,533L553,553L571,571M571,571L601,569L624,567M571,571L558,598L542,628M542,628L572,621L604,613M542,628L561,642L576,658M576,658L589,652L606,641M576,658L570,681L566,709M566,709L583,698L600,693M566,709L569,725L577,739M577,739L589,741L604,738M577,739L570,759L566,775M566,775L581,777L593,774M566,775L578,790L588,805M588,805L601,816L619,821M588,805L575,833L564,862M564,862L581,869L597,876M564,862L574,890L579,917M579,917L606,905L629,896M579,917L561,927L546,940M546,940L577,937L608,937M546,940L567,968L585,992M585,992L610,980L630,970M585,992L572,1015L556,1034M556,1034L575,1038L590,1038M556,1034L570,1057L581,1078M581,1078L601,1075L622,1072M581,1078L571,1093L560,1103M560,1103L575,1099L587,1095M569,1135L598,1137L631,1134M569,1135L553,1156L543,1175M611,194L629,201L647,211M611,194L618,211L620,235M620,235L643,244L673,255M620,235L616,263L611,288M611,288L623,291L635,300M611,288L607,313L606,338M606,338L630,329L652,314M606,338L605,359L607,384M607,384L629,385L651,381M608,407L637,411L662,409M608,407L602,428L601,444M601,444L617,442L628,442M601,444L613,469L619,498M619,498L630,486L644,479M619,498L612,522L604,543M604,543L618,543L636,545M604,543L613,556L624,567M624,567L646,572L671,574M624,567L615,592L604,613M604,613L625,612L642,614M604,613L603,628L606,641M606,641L635,653L666,662M606,641L602,669L600,693M604,738L596,753L593,774M593,774L611,778L627,778M593,774L608,797L619,821M619,821L637,818L656,809M619,821L608,851L597,876M597,876L612,866L628,858M597,876L612,885L629,896M629,896L636,899L647,906M629,896L619,915L608,937M608,937L622,950L632,958M608,937L622,953L630,970M630,970L608,1007L590,1038M590,1038L610,1030L635,1022M590,1038L604,1054L622,1072M622,1072L635,1078L648,1080M622,1072L606,1083L587,1095M587,1095L616,1105L650,1112M587,1095L611,1115L631,1134M631,1134L648,1135L662,1137M631,1134L610,1158L586,1187M647,211L659,209L673,208M647,211L660,230L673,255M673,255L682,243L688,238M673,255L655,276L635,300M635,300L661,294L685,287M652,314L683,315L711,317M652,314L653,348L651,381M651,381L660,383L665,383M651,381L654,393L662,409M662,409L681,411L702,416M662,409L647,428L628,442M628,442L652,444L680,440M628,442L638,464L644,479M644,479L680,486L713,492M644,479L638,513L636,545M636,545L662,532L691,522M636,545L655,557L671,574M671,574L682,577L691,576M671,574L657,594L642,614M642,614L659,619L670,626M666,662L676,655L691,643M666,662L660,687L652,708M652,708L657,698L667,690M652,708L659,727L663,741M663,741L688,743L712,750M663,741L645,762L627,778M627,778L652,777L683,777M627,778L644,795L656,809M656,809L672,819L684,830M656,809L644,835L628,858M647,906L673,908L696,913M647,906L637,930L632,958M632,958L648,945L668,929M632,958L649,969L663,985M663,985L685,974L711,969M663,985L646,1005L635,1022M635,1022L663,1016L685,1014M635,1022L644,1049L648,1080M648,1080L671,1069L692,1057M648,1080L651,1096L650,1112M650,1112L660,1118L676,1120M650,1112L657,1126L662,1137M662,1137L687,1144L709,1149M662,1137L650,1160L638,1179M673,208L694,211L713,214M673,208L681,224L688,238M688,238L717,232L752,231M688,238L684,264L685,287M685,287L701,295L714,301M685,287L698,303L711,317M711,317L719,318L729,315M711,317L688,349L665,383M665,383L687,397L702,416M702,416L716,415L732,417M702,416L692,427L680,440M680,440L691,448L707,456M680,440L696,469L713,492M713,492L722,496L729,495M691,522L707,534L727,545M691,522L688,547L691,576M691,576L713,584L738,589M691,576L681,602L670,626M670,626L681,632L691,643M691,643L721,659L752,672M691,643L680,667L667,690M667,690L688,690L707,690M667,690L690,721L712,750M712,750L730,751L746,750M712,750L700,761L683,777M683,777L697,780L711,787M683,777L685,801L684,830M684,830L712,816L739,805M684,830L677,839L666,852M666,852L684,851L706,846M666,852L682,883L696,913M696,913L715,913L731,915M696,913L684,922L668,929M668,929L695,939L725,954M668,929L689,951L711,969M711,969L734,972L752,981M711,969L698,989L685,1014M685,1014L702,1024L725,1030M685,1014L686,1036L692,1057M692,1057L720,1054L745,1053M676,1120L702,1109L731,1096M676,1120L692,1137L709,1149M709,1149L723,1151L738,1154M709,1149L685,1163L665,1179M713,214L730,222L752,231M752,231L768,233L788,232M752,231L734,264L714,301M714,301L742,294L772,281M714,301L724,311L729,315M729,315L756,319L777,322M729,315L722,348L712,381M712,381L737,370L767,359M712,381L722,402L732,417M732,417L752,406L769,396M732,417L722,435L707,456M707,456L730,457L748,455M707,456L718,475L729,495M729,495L763,484L796,477M729,495L725,520L727,545M738,589L759,576L775,569M738,589L729,607L716,629M716,629L733,620L748,613M716,629L731,652L752,672M752,672L761,655L773,642M752,672L730,681L707,690M707,690L727,699L749,710M707,690L726,719L746,750M746,750L766,749L787,753M746,750L729,768L711,787M711,787L724,797L739,805M739,805L757,803L772,808M739,805L725,827L706,846M706,846L741,856L775,867M706,846L720,881L731,915M731,915L731,932L725,954M725,954L744,952L769,944M725,954L736,967L752,981M752,981L759,976L768,975M752,981L742,1002L725,1030M725,1030L749,1030L775,1029M725,1030L735,1042L745,1053M745,1053L757,1054L768,1053M731,1096L748,1097L768,1102M731,1096L736,1124L738,1154M738,1154L761,1145L780,1137M738,1154L730,1179L727,1199M754,199L776,199L799,195M754,199L769,216L788,232M788,232L798,236L811,244M788,232L777,258L772,281M772,281L778,279L789,273M772,281L774,301L777,322M777,322L801,315L821,314M777,322L775,338L767,359M767,359L786,370L808,377M767,359L769,379L769,396M769,396L801,413L828,424M769,396L759,425L748,455M748,455L771,449L791,449M748,455L772,468L796,477M796,477L806,477L819,479M796,477L777,504L759,528M759,528L769,546L775,569M775,569L804,576L837,579M748,613L783,609L816,601M748,613L761,628L773,642M773,642L803,654L834,670M773,642L762,677L749,710M749,710L780,705L810,699M749,710L769,734L787,753M787,753L808,747L826,737M787,753L778,768L770,786M770,786L791,786L812,781M770,786L774,800L772,808M772,808L795,810L823,817M772,808L772,839L775,867M775,867L790,866L805,864M775,867L779,878L787,891M787,891L810,900L835,911M787,891L776,919L769,944M769,944L782,950L796,950M769,944L766,963L768,975M768,975L789,980L813,983M768,975L769,1003L775,1029M775,1029L769,1040L768,1053M768,1053L791,1054L808,1055M768,1053L771,1079L768,1102M768,1102L781,1106L791,1111M768,1102L772,1119L780,1137M780,1137L765,1165L750,1189M799,195L815,200L833,208M799,195L804,222L811,244M811,244L834,243L860,244M811,244L797,258L789,273M789,273L809,283L832,293M789,273L802,293L821,314M821,314L841,329L858,343M821,314L814,345L808,377M808,377L822,377L842,375M808,377L818,404L828,424M828,424L850,425L876,425M828,424L812,439L791,449M791,449L809,455L827,464M791,449L806,462L819,479M819,479L837,494L850,506M819,479L815,499L812,519M812,519L829,523L851,525M812,519L822,550L837,579M837,579L851,578L869,576M837,579L826,588L816,601M816,601L829,612L841,619M816,601L825,633L834,670M834,670L848,665L861,661M834,670L823,687L810,699M810,699L831,693L848,682M810,699L820,716L826,737M826,737L844,741L867,744M826,737L821,761L812,781M812,781L830,784L853,780M812,781L815,797L823,817M823,817L845,811L864,809M823,817L811,843L805,864M805,864L821,867L833,873M805,864L821,889L835,911M835,911L814,930L796,950M796,950L813,948L830,939M796,950L806,968L813,983M813,983L807,1008L802,1032M802,1032L823,1032L840,1034M802,1032L804,1042L808,1055M808,1055L835,1057L859,1056M808,1055L798,1083L791,1111M791,1111L809,1114L828,1121M791,1111L800,1133L811,1150M811,1150L829,1153L850,1153M811,1150L810,1168L813,1187M833,208L860,212L885,211M833,208L844,225L860,244M860,244L880,243L894,238M860,244L846,265L832,293M832,293L862,283L896,278M832,293L844,316L858,343M858,343L883,333L903,327M858,343L852,357L842,375M842,375L866,375L892,380M842,375L858,400L876,425M876,425L896,420L912,414M876,425L851,445L827,464M827,464L854,450L884,438M827,464L839,486L850,506M850,506L881,498L906,490M850,506L851,518L851,525M851,525L870,527L891,529M851,525L861,553L869,576M869,576L883,574L892,570M869,576L853,599L841,619M841,619L853,641L861,661M861,661L886,651L909,642M861,661L858,669L848,682M848,682L863,683L874,690M848,682L856,711L867,744M867,744L887,736L903,726M867,744L857,761L853,780M853,780L857,796L864,809M864,809L875,808L888,812M864,809L847,839L833,873M833,873L860,870L883,865M833,873L843,897L849,914M849,914L881,900L913,889M849,914L838,928L830,939M830,939L864,947L898,954M830,939L848,954L866,969M866,969L888,981L904,989M866,969L850,1001L840,1034M840,1034L849,1043L859,1056M859,1056L876,1067L888,1080M859,1056L843,1091L828,1121M828,1121L860,1116L895,1105M828,1121L840,1139L850,1153M850,1153L881,1152L907,1147M850,1153L845,1171L846,1182M885,211L907,205L932,195M885,211L892,225L894,238M894,238L919,242L947,250M894,238L897,259L896,278M896,278L916,287L935,291M896,278L897,304L903,327M903,327L919,334L934,338M892,380L905,375L920,371M892,380L902,399L912,414M912,414L931,417L954,425M912,414L899,424L884,438M884,438L896,441L912,450M906,490L922,495L939,503M906,490L897,509L891,529M891,529L909,539L921,546M891,529L892,548L892,570M892,570L923,569L954,571M892,570L892,593L893,615M893,615L914,616L932,621M893,615L901,631L909,642M909,642L920,647L933,650M874,690L894,701L913,707M874,690L890,705L903,726M903,726L919,731L941,732M903,726L897,748L897,774M897,774L913,784L931,794M888,812L908,818L933,826M888,812L886,836L883,865M883,865L899,866L916,870M883,865L899,874L913,889M913,889L931,898L952,910M913,889L903,919L898,954M898,954L900,970L904,989M904,989L932,981L955,972M904,989L888,1003L877,1014M877,1014L905,1028L926,1039M877,1014L884,1049L888,1080M888,1080L915,1071L937,1065M895,1105L915,1108L929,1112M895,1105L903,1127L907,1147M907,1147L923,1145L939,1145M907,1147L898,1160L889,1177M932,195L945,203L955,211M932,195L940,222L947,250M947,250L970,248L996,249M947,250L943,267L935,291M935,291L958,284L977,280M935,291L933,315L934,338M934,338L954,341L979,339M934,338L926,354L920,371M920,371L941,366L957,357M920,371L937,397L954,425M954,425L962,421L975,422M954,425L934,438L912,450M912,450L943,448L975,442M912,450L927,476L939,503M939,503L968,493L993,483M939,503L931,524L921,546M921,546L947,532L969,518M921,546L938,557L954,571M954,571L972,575L988,582M954,571L945,596L932,621M932,621L951,617L965,619M932,621L935,634L933,650M933,650L956,655L974,655M933,650L924,676L913,707M913,707L941,698L974,693M913,707L925,722L941,732M941,732L966,737L993,741M931,794L951,787L975,786M931,794L933,813L933,826M933,826L925,851L916,870M916,870L943,864L975,859M916,870L933,889L952,910M952,910L971,904L992,899M952,910L939,920L927,931M927,931L946,937L967,938M927,931L940,952L955,972M955,972L972,978L984,978M955,972L941,1003L926,1039M926,1039L933,1049L937,1065M937,1065L966,1068L989,1067M937,1065L931,1088L929,1112M929,1112L949,1105L964,1097M929,1112L933,1128L939,1145M939,1145L965,1144L990,1146M939,1145L936,1172L936,1196M955,211L975,233L996,249M996,249L1015,248L1035,242M996,249L986,265L977,280M977,280L985,288L995,302M977,280L979,310L979,339M979,339L1004,330L1030,322M979,339L969,350L957,357M957,357L978,362L993,371M957,357L967,389L975,422M975,422L995,422L1018,422M975,442L994,441L1013,444M993,483L1011,482L1024,479M993,483L979,502L969,518M969,518L985,528L997,535M969,518L976,548L988,582M988,582L1010,577L1038,572M988,582L974,602L965,619M965,619L994,613L1020,607M965,619L971,635L974,655M974,655L996,663L1014,667M974,655L972,675L974,693M974,693L989,691L1002,690M974,693L983,720L993,741M993,741L1012,740L1025,741M993,741L984,763L975,786M975,786L983,775L997,767M975,786L975,810L979,830M979,830L1005,826L1030,825M979,830L978,843L975,859M975,859L992,854L1008,850M975,859L984,877L992,899M992,899L1013,902L1038,900M992,899L977,918L967,938M967,938L987,947L1007,955M967,938L977,958L984,978M984,978L997,983L1015,984M984,978L984,1001L977,1029M977,1029L989,1031L1004,1029M977,1029L984,1045L989,1067M989,1067L1004,1060L1018,1058M989,1067L977,1085L964,1097M964,1097L979,1122L990,1146M990,1146L1007,1151L1020,1161M990,1146L972,1165L960,1189M994,210L1018,211L1044,215M994,210L1014,225L1035,242M1035,242L1054,250L1070,255M1035,242L1015,269L995,302M995,302L1027,286L1061,275M995,302L1013,310L1030,322M1030,322L1051,333L1076,341M1030,322L1009,345L993,371M993,371L1016,366L1044,364M993,371L1006,397L1018,422M1018,422L1013,434L1013,444M1013,444L1028,439L1038,436M1024,479L1039,487L1055,492M1024,479L1009,510L997,535M997,535L1023,541L1053,546M997,535L1018,555L1038,572M1038,572L1057,566L1073,562M1038,572L1030,591L1020,607M1020,607L1039,619L1060,627M1020,607L1016,639L1014,667M1014,667L1046,667L1077,668M1014,667L1007,677L1002,690M1002,690L1030,699L1057,703M1025,741L1048,735L1076,723M1025,741L1009,756L997,767M997,767L1029,768L1062,764M997,767L1012,797L1030,825M1030,825L1047,821L1065,822M1030,825L1021,836L1008,850M1008,850L1027,856L1047,856M1008,850L1022,874L1038,900M1038,900L1051,897L1068,896M1038,900L1020,930L1007,955M1007,955L1030,943L1052,928M1007,955L1014,970L1015,984M1015,984L1041,987L1063,989M1015,984L1007,1006L1004,1029M1004,1029L1025,1017L1046,1010M1004,1029L1009,1045L1018,1058M1018,1058L1043,1069L1066,1079M1018,1058L1011,1086L997,1109M997,1109L1020,1111L1048,1114M997,1109L1011,1133L1020,1161M1020,1161L1043,1163L1064,1163M1020,1161L1021,1180L1018,1196M1044,215L1068,217L1092,215M1044,215L1059,237L1070,255M1070,255L1089,257L1105,259M1070,255L1068,265L1061,275M1061,275L1080,288L1103,299M1061,275L1067,309L1076,341M1076,341L1098,332L1121,324M1076,341L1063,352L1044,364M1044,364L1065,375L1083,381M1044,364L1048,395L1053,422M1053,422L1087,418L1119,413M1053,422L1045,427L1038,436M1038,436L1065,436L1090,436M1038,436L1049,461L1055,492M1055,492L1082,485L1110,478M1055,492L1051,519L1053,546M1053,546L1065,556L1073,562M1073,562L1091,562L1112,563M1073,562L1067,593L1060,627M1060,627L1071,626L1083,623M1060,627L1066,645L1077,668M1077,668L1091,656L1111,645M1077,668L1067,684L1057,703M1057,703L1078,692L1103,682M1057,703L1066,714L1076,723M1076,723L1090,737L1106,745M1076,723L1070,744L1062,764M1062,764L1076,773L1091,784M1062,764L1062,792L1065,822M1065,822L1096,818L1121,807M1065,822L1054,839L1047,856M1047,856L1069,855L1088,853M1047,856L1059,878L1068,896M1068,896L1090,897L1112,901M1052,928L1070,938L1092,952M1052,928L1058,956L1063,989M1063,989L1085,985L1109,982M1063,989L1053,1002L1046,1010M1046,1010L1069,1014L1090,1015M1046,1010L1056,1045L1066,1079M1066,1079L1092,1073L1121,1063M1066,1079L1055,1097L1048,1114M1048,1114L1067,1114L1088,1118M1048,1114L1058,1141L1064,1163M1064,1163L1091,1164L1119,1163M1064,1163L1054,1183L1048,1199M1092,215L1107,216L1127,214M1092,215L1100,236L1105,259M1105,259L1130,246L1153,231M1105,259L1102,277L1103,299M1103,299L1116,297L1131,292M1103,299L1114,310L1121,324M1121,324L1131,333L1145,338M1121,324L1104,355L1083,381M1083,381L1112,382L1137,381M1083,381L1100,396L1119,413M1119,413L1132,414L1143,415M1119,413L1103,424L1090,436M1090,436L1111,442L1131,446M1090,436L1102,456L1110,478M1110,478L1126,479L1143,479M1110,478L1097,499L1089,524M1089,524L1115,524L1139,526M1089,524L1101,547L1112,563M1112,563L1129,562L1145,566M1112,563L1099,593L1083,623M1083,623L1095,635L1111,645M1111,645L1137,643L1161,643M1111,645L1107,663L1103,682M1103,682L1114,693L1124,707M1103,682L1104,716L1106,745M1106,745L1131,735L1159,724M1106,745L1099,762L1091,784M1091,784L1107,786L1127,794M1091,784L1105,797L1121,807M1121,807L1144,813L1164,814M1121,807L1106,833L1088,853M1088,853L1113,856L1137,856M1088,853L1103,878L1112,901M1112,901L1124,908L1136,914M1112,901L1101,928L1092,952M1092,952L1106,955L1117,958M1092,952L1098,966L1109,982M1109,982L1102,998L1090,1015M1090,1015L1111,1028L1128,1037M1090,1015L1107,1040L1121,1063M1121,1063L1139,1061L1157,1056M1121,1063L1102,1089L1088,1118M1088,1118L1098,1108L1114,1097M1088,1118L1106,1139L1119,1163M1119,1163L1137,1150L1153,1136M1119,1163L1106,1179L1094,1190M1127,214L1140,206L1156,199M1127,214L1139,222L1153,231M1153,231L1175,232L1195,237M1153,231L1142,263L1131,292M1131,292L1157,287L1179,280M1131,292L1137,313L1145,338M1145,338L1164,333L1186,325M1145,338L1143,361L1137,381M1137,381L1158,367L1181,355M1137,381L1140,398L1143,415M1143,415L1174,405L1200,397M1143,415L1135,428L1131,446M1131,446L1155,451L1185,453M1131,446L1137,461L1143,479M1143,479L1170,483L1198,492M1143,479L1141,504L1139,526M1139,526L1160,532L1175,539M1139,526L1144,546L1145,566M1145,566L1162,565L1179,564M1145,566L1138,590L1131,615M1131,615L1154,610L1183,606M1131,615L1143,630L1161,643M1161,643L1174,644L1182,642M1161,643L1140,675L1124,707M1124,707L1151,705L1177,706M1124,707L1143,713L1159,724M1159,724L1168,736L1176,749M1159,724L1141,762L1127,794M1127,794L1143,786L1158,779M1127,794L1145,807L1164,814M1164,814L1180,813L1191,812M1164,814L1153,834L1137,856M1137,856L1136,883L1136,914M1136,914L1167,903L1199,894M1136,914L1128,938L1117,958M1117,958L1138,960L1162,958M1117,958L1134,974L1148,995M1148,995L1166,984L1183,972M1148,995L1138,1019L1128,1037M1128,1037L1143,1044L1157,1056M1157,1056L1170,1063L1182,1067M1114,1097L1150,1096L1182,1101M1114,1097L1133,1117L1153,1136M1153,1136L1168,1135L1186,1133M1153,1136L1136,1163L1116,1185M1156,199L1183,209L1211,216M1195,237L1213,237L1230,239M1195,237L1185,260L1179,280M1179,280L1194,277L1208,276M1179,280L1180,301L1186,325M1186,325L1209,332L1231,334M1186,325L1183,341L1181,355M1181,355L1194,361L1201,372M1181,355L1191,379L1200,397M1200,397L1222,408L1247,416M1185,453L1194,456L1205,456M1185,453L1193,471L1198,492M1198,492L1210,487L1219,480M1198,492L1186,516L1175,539M1175,539L1200,540L1221,539M1175,539L1179,553L1179,564M1179,564L1206,567L1235,576M1183,606L1196,617L1206,626M1183,606L1180,623L1182,642M1182,642L1209,653L1232,666M1182,642L1180,671L1177,706M1177,706L1198,697L1218,692M1177,706L1179,728L1176,749M1176,749L1208,740L1241,733M1176,749L1165,767L1158,779M1158,779L1186,782L1215,790M1158,779L1176,795L1191,812M1191,812L1217,816L1246,824M1191,812L1181,837L1165,861M1165,861L1184,853L1202,850M1165,861L1182,879L1199,894M1199,894L1222,895L1242,896M1199,894L1180,928L1162,958M1162,958L1180,949L1200,945M1183,972L1206,984L1229,991M1183,1038L1194,1033L1201,1025M1183,1038L1180,1055L1182,1067M1182,1067L1216,1061L1246,1056M1182,1067L1184,1085L1182,1101M1182,1101L1193,1106L1208,1104M1182,1101L1183,1119L1186,1133M1186,1133L1201,1133L1220,1137M1186,1133L1175,1163L1158,1192M1211,216L1226,214L1241,209M1211,216L1222,229L1230,239M1230,239L1251,237L1269,240M1230,239L1217,259L1208,276M1208,276L1234,284L1263,295M1208,276L1218,306L1231,334M1231,334L1251,326L1271,321M1231,334L1218,353L1201,372M1201,372L1225,373L1252,374M1201,372L1222,394L1247,416M1247,416L1266,418L1281,415M1247,416L1229,434L1205,456M1205,456L1224,446L1236,440M1219,480L1255,487L1288,493M1219,480L1219,510L1221,539M1221,539L1235,529L1252,521M1221,539L1228,558L1235,576M1235,576L1256,578L1281,584M1235,576L1220,602L1206,626M1206,626L1224,617L1246,608M1206,626L1217,648L1232,666M1232,666L1246,661L1259,650M1232,666L1225,680L1218,692M1218,692L1233,696L1252,695M1218,692L1231,714L1241,733M1241,733L1246,727L1257,725M1241,733L1229,760L1215,790M1215,790L1232,787L1244,789M1215,790L1229,807L1246,824M1246,824L1267,825L1287,831M1246,824L1222,835L1202,850M1202,850L1227,856L1252,857M1202,850L1221,875L1242,896M1242,896L1262,903L1285,910M1242,896L1220,923L1200,945M1200,945L1227,946L1257,949M1200,945L1216,970L1229,991M1229,991L1258,989L1286,985M1229,991L1215,1011L1201,1025M1201,1025L1222,1031L1244,1032M1201,1025L1224,1042L1246,1056M1246,1056L1269,1057L1286,1057M1246,1056L1224,1077L1208,1104M1208,1104L1230,1111L1248,1115M1208,1104L1214,1118L1220,1137M1220,1137L1252,1134L1282,1134M1241,209L1259,198L1281,191M1241,209L1255,222L1269,240M1269,240L1292,242L1312,245M1269,240L1266,265L1263,295M1263,295L1274,292L1283,294M1263,295L1269,310L1271,321M1271,321L1285,331L1304,341M1271,321L1261,347L1252,374M1252,374L1279,368L1309,364M1252,374L1267,395L1281,415M1281,415L1288,405L1299,397M1281,415L1257,427L1236,440M1236,440L1265,443L1294,446M1236,440L1264,467L1288,493M1288,493L1306,491L1322,489M1288,493L1270,506L1252,521M1252,521L1269,519L1285,522M1252,521L1265,555L1281,584M1281,584L1304,581L1329,582M1281,584L1263,594L1246,608M1246,608L1275,606L1299,606M1246,608L1251,629L1259,650M1259,650L1284,658L1312,664M1259,650L1258,672L1252,695M1252,695L1273,691L1298,690M1252,695L1256,712L1257,725M1257,725L1282,737L1309,748M1257,725L1248,756L1244,789M1244,789L1259,786L1279,784M1244,789L1263,812L1287,831M1287,831L1306,827L1320,821M1287,831L1272,845L1252,857M1252,857L1274,866L1295,874M1252,857L1267,884L1285,910M1285,910L1299,911L1308,910M1285,910L1272,929L1257,949M1257,949L1279,953L1300,950M1257,949L1269,966L1286,985M1286,985L1293,990L1300,990M1286,985L1268,1010L1244,1032M1244,1032L1264,1026L1289,1013M1244,1032L1265,1044L1286,1057M1286,1057L1304,1060L1326,1059M1286,1057L1265,1086L1248,1115M1248,1115L1270,1110L1292,1101M1248,1115L1268,1126L1282,1134M1282,1134L1293,1136L1301,1141M1282,1134L1270,1156L1262,1181M1281,191L1311,191L1342,194M1281,191L1296,215L1312,245M1312,245L1332,248L1347,256M1283,294L1307,292L1335,294M1283,294L1293,319L1304,341M1304,341L1327,332L1353,326M1304,341L1303,353L1309,364M1309,364L1313,375L1319,380M1309,364L1302,381L1299,397M1299,397L1330,409L1367,417M1299,397L1299,423L1294,446M1294,446L1312,449L1325,455M1294,446L1306,470L1322,489M1322,489L1341,486L1360,485M1285,522L1305,533L1330,545M1285,522L1305,555L1329,582M1329,582L1340,577L1347,577M1329,582L1315,596L1299,606M1299,606L1307,606L1320,600M1299,606L1308,637L1312,664M1312,664L1326,659L1340,650M1312,664L1305,676L1298,690M1298,690L1322,696L1347,699M1298,690L1301,721L1309,748M1309,748L1330,735L1354,727M1309,748L1294,763L1279,784M1279,784L1308,774L1336,767M1279,784L1298,803L1320,821M1320,821L1305,845L1295,874M1295,874L1311,874L1326,870M1295,874L1302,892L1308,910M1308,910L1333,909L1356,906M1308,910L1307,930L1300,950M1300,950L1312,946L1327,940M1300,950L1299,970L1300,990M1300,990L1292,1000L1289,1013M1289,1013L1322,1019L1349,1030M1289,1013L1306,1036L1326,1059M1326,1059L1340,1061L1349,1070M1326,1059L1310,1083L1292,1101M1292,1101L1321,1109L1347,1117M1292,1101L1299,1123L1301,1141M1301,1141L1297,1169L1297,1193M1342,194L1363,204L1385,214M1342,194L1342,226L1347,256M1347,256L1378,253L1402,253M1347,256L1342,278L1335,294M1335,294L1350,293L1364,289M1335,294L1344,312L1353,326M1353,326L1367,320L1380,313M1353,326L1334,352L1319,380M1319,380L1349,367L1379,354M1319,380L1346,396L1367,417M1367,417L1380,408L1393,405M1367,417L1348,435L1325,455M1325,455L1353,453L1387,446M1325,455L1340,468L1360,485M1360,485L1375,494L1386,498M1360,485L1344,518L1330,545M1330,545L1349,548L1364,548M1330,545L1341,562L1347,577M1347,577L1378,584L1409,589M1347,577L1331,590L1320,600M1320,600L1348,602L1379,605M1320,600L1331,625L1340,650M1340,650L1365,655L1386,663M1340,650L1343,673L1347,699M1347,699L1358,702L1373,703M1347,699L1349,715L1354,727M1354,727L1371,732L1386,740M1354,727L1345,746L1336,767M1336,767L1361,772L1386,772M1336,767L1340,793L1341,815M1341,815L1375,809L1406,809M1341,815L1331,843L1326,870M1326,870L1354,859L1380,847M1326,870L1342,889L1356,906M1356,906L1372,896L1388,889M1356,906L1340,922L1327,940M1327,940L1345,943L1366,944M1327,940L1333,961L1342,977M1342,977L1371,987L1405,994M1349,1030L1367,1026L1388,1017M1349,1070L1382,1069L1409,1064M1349,1070L1350,1096L1347,1117M1347,1117L1366,1115L1380,1114M1347,1117L1349,1124L1355,1137M1355,1137L1371,1138L1388,1141" fill="none" stroke="#f5cdb6" stroke-width="0.8" clip-path="url(#landclip)" opacity="0.7" stroke-linejoin="round"/>
<path d="M296.0,205.0 L296.5,316.0 L291.0,345.0 L280.0,400.0 L262.0,434.0 L265.0,452.0" fill="none" stroke="#c9b3cf" stroke-width="1.3" opacity="0.85"/>
<path d="M500.5,205.0 L500.5,329.0" fill="none" stroke="#c9b3cf" stroke-width="1.3" opacity="0.85"/>
<path d="M625.0,372.0 L612.0,362.0 L600.0,368.0 L580.0,362.0 L560.0,350.0 L545.0,342.0 L525.0,345.0 L510.0,340.0 L500.5,329.0 L490.0,345.0 L470.0,355.0 L455.0,368.0 L452.0,385.0 L440.0,400.0 L432.0,415.0 L420.0,425.0 L400.0,432.0 L380.0,440.0 L350.0,440.0 L320.0,436.0 L300.0,440.0 L280.0,445.0 L265.0,452.0 L240.0,455.0 L215.0,470.0 L195.0,475.0 L186.0,480.0" fill="none" stroke="#c9b3cf" stroke-width="1.3" opacity="0.85"/>
<path d="M186.0,579.0 L268.0,578.0 L271.5,566.3 L464.6,568.0" fill="none" stroke="#c9b3cf" stroke-width="1.3" opacity="0.85"/>
<path d="M186.0,719.5 L455.0,719.5" fill="none" stroke="#c9b3cf" stroke-width="1.3" opacity="0.85"/>
<path d="M250.0,720.0 L242.0,830.0 L233.0,940.0" fill="none" stroke="#c9b3cf" stroke-width="1.3" opacity="0.85"/>
<path d="M441.5,720.0 L458.0,830.0 L474.5,940.0" fill="none" stroke="#c9b3cf" stroke-width="1.3" opacity="0.85"/>
<path d="M186.0,480.0 L196.0,520.0 L190.0,560.0 L200.0,600.0 L192.0,650.0 L200.0,700.0 L196.0,719.0" fill="none" stroke="#c9b3cf" stroke-width="1.3" opacity="0.85"/>
<ellipse cx="400" cy="330" rx="13.8" ry="10.0" fill="#d3e4c2" opacity="0.6"/>
<ellipse cx="390" cy="400" rx="9.2" ry="11.5" fill="#d3e4c2" opacity="0.6"/>
<ellipse cx="660" cy="300" rx="23.1" ry="19.2" fill="#d3e4c2" opacity="0.6"/>
<ellipse cx="600" cy="360" rx="15.4" ry="9.2" fill="#d3e4c2" opacity="0.6"/>
<ellipse cx="540" cy="370" rx="10.0" ry="7.7" fill="#d3e4c2" opacity="0.6"/>
<ellipse cx="300" cy="715" rx="16.2" ry="10.0" fill="#d3e4c2" opacity="0.6"/>
<ellipse cx="380" cy="770" rx="19.2" ry="11.5" fill="#d3e4c2" opacity="0.6"/>
<ellipse cx="340" cy="800" rx="15.4" ry="9.2" fill="#d3e4c2" opacity="0.6"/>
<ellipse cx="310" cy="960" rx="19.2" ry="19.2" fill="#d3e4c2" opacity="0.6"/>
<ellipse cx="210" cy="470" rx="9.2" ry="15.4" fill="#d3e4c2" opacity="0.6"/>
<ellipse cx="360" cy="330" rx="7.7" ry="5.4" fill="#d3e4c2" opacity="0.6"/>
<ellipse cx="230" cy="1010" rx="11.5" ry="15.4" fill="#d3e4c2" opacity="0.6"/>
<ellipse cx="330" cy="905" rx="11.5" ry="7.7" fill="#d3e4c2" opacity="0.6"/>
<path d="M1314.0,205.0 L1312.0,234.4 L1308.0,274.6 L1296.4,285.4 L1282.1,310.4 L1247.3,348.8 L1238.4,348.8 L1251.8,332.7 L1242.9,324.6 L1224.1,323.8 L1207.1,297.9 L1194.6,292.5 L1195.0,305.0 L1200.0,318.0 L1206.0,333.0 L1206.0,352.7 L1229.6,353.3 L1228.1,362.7 L1231.9,395.9 L1229.6,408.0 L1219.0,436.7 L1208.5,451.8 L1194.9,470.0 L1185.8,491.1 L1175.2,506.2 L1170.7,520.6 L1162.4,523.6 L1162.8,543.3 L1171.6,580.8 L1178.0,609.5 L1182.6,640.0 L1182.6,662.0 L1165.0,673.0 L1156.0,684.0 L1131.9,684.0 L1116.4,671.0 L1096.5,679.7 L1125.2,690.8 L1120.8,699.6 L1087.7,712.9 L1098.7,721.7 L1109.8,723.9 L1125.2,715.0 L1142.9,719.5 L1138.5,728.3 L1120.8,754.8 L1116.4,743.8 L1090.0,746.0 L1076.7,750.4 L1063.4,759.2 L1046.8,770.3 L1032.5,790.2 L1023.7,805.6 L1013.7,822.2 L1006.0,818.9 L990.0,821.0 L970.7,823.3 L953.0,834.3 L937.5,847.6 L924.3,871.9 L915.5,894.0 L908.8,898.4 L900.4,896.2 L882.7,916.0 L868.3,924.9 L862.8,936.3 L850.0,970.0 L700.0,1100.0 L560.0,1180.0 L400.0,1150.0 L186.0,1130.0 L186.0,1362.0 L1775.0,1362.0 L1775.0,205.0Z" fill="#b3d4e0" />
<clipPath id="seaclip"><path d="M1314.0,205.0 L1312.0,234.4 L1308.0,274.6 L1296.4,285.4 L1282.1,310.4 L1247.3,348.8 L1238.4,348.8 L1251.8,332.7 L1242.9,324.6 L1224.1,323.8 L1207.1,297.9 L1194.6,292.5 L1195.0,305.0 L1200.0,318.0 L1206.0,333.0 L1206.0,352.7 L1229.6,353.3 L1228.1,362.7 L1231.9,395.9 L1229.6,408.0 L1219.0,436.7 L1208.5,451.8 L1194.9,470.0 L1185.8,491.1 L1175.2,506.2 L1170.7,520.6 L1162.4,523.6 L1162.8,543.3 L1171.6,580.8 L1178.0,609.5 L1182.6,640.0 L1182.6,662.0 L1165.0,673.0 L1156.0,684.0 L1131.9,684.0 L1116.4,671.0 L1096.5,679.7 L1125.2,690.8 L1120.8,699.6 L1087.7,712.9 L1098.7,721.7 L1109.8,723.9 L1125.2,715.0 L1142.9,719.5 L1138.5,728.3 L1120.8,754.8 L1116.4,743.8 L1090.0,746.0 L1076.7,750.4 L1063.4,759.2 L1046.8,770.3 L1032.5,790.2 L1023.7,805.6 L1013.7,822.2 L1006.0,818.9 L990.0,821.0 L970.7,823.3 L953.0,834.3 L937.5,847.6 L924.3,871.9 L915.5,894.0 L908.8,898.4 L900.4,896.2 L882.7,916.0 L868.3,924.9 L862.8,936.3 L850.0,970.0 L700.0,1100.0 L560.0,1180.0 L400.0,1150.0 L186.0,1130.0 L186.0,1362.0 L1775.0,1362.0 L1775.0,205.0Z"/></clipPath>
<path d="M1314.0,205.0 L1312.0,234.4 L1308.0,274.6 L1296.4,285.4 L1282.1,310.4 L1247.3,348.8 L1238.4,348.8 L1251.8,332.7 L1242.9,324.6 L1224.1,323.8 L1207.1,297.9 L1194.6,292.5 L1195.0,305.0 L1200.0,318.0 L1206.0,333.0 L1206.0,352.7 L1229.6,353.3 L1228.1,362.7 L1231.9,395.9 L1229.6,408.0 L1219.0,436.7 L1208.5,451.8 L1194.9,470.0 L1185.8,491.1 L1175.2,506.2 L1170.7,520.6 L1162.4,523.6 L1162.8,543.3 L1171.6,580.8 L1178.0,609.5 L1182.6,640.0 L1182.6,662.0 L1165.0,673.0 L1156.0,684.0 L1131.9,684.0 L1116.4,671.0 L1096.5,679.7 L1125.2,690.8 L1120.8,699.6 L1087.7,712.9 L1098.7,721.7 L1109.8,723.9 L1125.2,715.0 L1142.9,719.5 L1138.5,728.3 L1120.8,754.8 L1116.4,743.8 L1090.0,746.0 L1076.7,750.4 L1063.4,759.2 L1046.8,770.3 L1032.5,790.2 L1023.7,805.6 L1013.7,822.2 L1006.0,818.9 L990.0,821.0 L970.7,823.3 L953.0,834.3 L937.5,847.6 L924.3,871.9 L915.5,894.0 L908.8,898.4 L900.4,896.2 L882.7,916.0 L868.3,924.9Z" fill="none" stroke="#cde2ea" stroke-width="9" clip-path="url(#seaclip)" stroke-linejoin="round" opacity="0.9"/>
<path d="M1345.0,205.0 L1336.0,250.0 L1318.0,300.0 L1290.0,335.0 L1262.0,352.0 L1253.5,365.6 L1240.7,420.9 L1206.6,480.5 L1181.1,535.9 L1198.1,578.5 L1206.6,616.8 L1221.6,655.2 L1215.2,706.3 L1189.6,719.0 L1147.0,748.9 L1121.5,770.2 L1104.4,765.9 L1061.8,782.9 L1040.5,808.5 L1015.0,834.0 L985.2,838.3 L951.1,859.6 L934.1,897.9 L905.0,923.5 L893.7,936.3" fill="none" stroke="#bfa3c4" stroke-width="2" opacity="0.85" stroke-linejoin="round"/>
<line x1="1375.5" y1="205.0" x2="1375.5" y2="1362.0" stroke="#c6e0ea" stroke-width="1" />
<line x1="1085.0" y1="571.5" x2="1775.0" y2="571.5" stroke="#c6e0ea" stroke-width="1" />
<clipPath id="cg"><path d="M589.0,373.2 L606.7,373.2 L617.7,381.0 L629.8,379.9 L625.4,389.8 L647.5,403.0 L660.8,392.0 L669.6,402.0 L688.4,410.8 L696.0,435.0 L690.6,442.8 L698.3,442.8 L706.0,463.8 L725.9,474.8 L712.6,488.0 L735.8,514.6 L760.1,503.5 L766.7,523.4 L753.5,530.0 L767.8,555.4 L783.3,552.1 L797.7,574.2 L761.2,574.2 L771.2,591.9 L777.8,587.4 L785.5,591.9 L788.8,589.6 L796.6,597.4 L795.5,607.3 L805.4,625.0 L805.4,653.7 L792.1,671.4 L788.8,687.5 L785.5,704.0 L756.8,706.2 L750.2,719.5 L752.4,732.7 L732.5,728.3 L723.7,754.8 L736.9,761.5 L725.9,776.9 L717.0,790.2 L693.9,773.6 L688.4,779.1 L691.7,799.0 L672.9,804.5 L668.5,814.4 L660.8,811.1 L645.3,816.7 L637.6,829.9 L645.3,843.2 L658.5,846.5 L650.8,858.6 L644.2,860.8 L625.4,870.8 L624.3,874.0 L617.7,877.4 L615.5,882.9 L605.5,885.1 L607.8,902.8 L597.8,913.8 L584.6,927.0 L583.5,936.3 L583.0,965.0 L508.0,965.0 L508.4,915.0 L497.3,913.8 L496.2,882.9 L489.6,880.7 L485.2,867.4 L463.1,860.8 L463.1,838.7 L453.2,803.4 L454.3,785.7 L446.6,754.8 L458.7,721.7 L452.1,718.4 L467.5,687.5 L454.3,667.6 L471.0,656.0 L461.3,636.7 L464.6,623.6 L431.8,620.3 L426.9,608.8 L452.0,600.7 L449.9,585.0 L465.3,569.8 L469.7,546.6 L496.2,532.2 L494.0,527.8 L513.9,503.5 L522.7,501.3 L533.8,488.0 L536.0,477.0 L522.7,463.8 L538.2,457.2 L540.4,448.3 L564.7,457.2 L559.2,446.1 L562.5,435.1 L557.0,428.5 L570.2,413.0 L564.7,395.3 L587.9,384.3Z"/></clipPath>
<clipPath id="cm"><path d="M625.4,389.8 L633.2,371.0 L645.3,366.6 L649.7,381.0 L654.1,382.0 L655.2,373.2 L661.0,358.5 L679.0,345.4 L690.4,325.7 L696.4,323.7 L730.5,323.7 L748.0,306.0 L763.3,311.0 L786.0,308.5 L791.0,275.7 L866.7,273.2 L869.3,237.9 L894.5,235.3 L927.3,225.2 L932.4,221.5 L990.7,221.6 L994.6,210.8 L1000.0,206.0 L1026.0,205.8 L1036.0,216.7 L1038.0,221.6 L1052.0,219.0 L1088.0,213.0 L1097.0,221.6 L1077.4,240.3 L1089.3,260.0 L1103.0,273.9 L1097.0,305.4 L1073.5,313.3 L1093.2,329.0 L1063.6,340.9 L1049.8,352.7 L1032.0,358.7 L1049.8,384.3 L1045.7,386.5 L1039.0,402.0 L1020.3,420.7 L1014.8,426.2 L997.2,425.1 L993.8,430.7 L1006.0,448.3 L997.2,463.8 L990.5,474.8 L983.9,492.5 L977.3,501.3 L966.2,501.3 L962.9,510.2 L953.0,510.0 L948.0,515.0 L944.5,528.0 L927.0,528.0 L918.0,574.0 L897.0,577.5 L894.0,620.0 L892.6,671.4 L792.1,671.4 L805.4,653.7 L805.4,625.0 L795.5,607.3 L796.6,597.4 L788.8,589.6 L785.5,591.9 L777.8,587.4 L771.2,591.9 L761.2,574.2 L797.7,574.2 L783.3,552.1 L767.8,555.4 L753.5,530.0 L766.7,523.4 L760.1,503.5 L735.8,514.6 L712.6,488.0 L725.9,474.8 L706.0,463.8 L698.3,442.8 L690.6,442.8 L696.0,435.0 L688.4,410.8 L669.6,402.0 L660.8,392.0 L647.5,403.0ZM1166.0,221.6 L1184.0,221.6 L1197.7,205.8 L1207.6,212.7 L1219.4,221.6 L1298.0,221.6 L1308.0,230.0 L1308.0,274.6 L1296.4,285.4 L1282.1,310.4 L1247.3,348.8 L1238.4,348.8 L1251.8,332.7 L1242.9,324.6 L1224.1,323.8 L1207.1,297.9 L1194.6,292.5 L1194.6,283.6 L1203.6,263.9 L1189.3,262.1 L1178.6,272.9 L1157.1,272.9 L1162.5,252.3 L1166.0,243.4 L1167.0,230.0Z"/></clipPath>
<clipPath id="cgr"><path d="M1097.0,221.6 L1132.6,221.6 L1148.4,215.7 L1164.0,221.6 L1166.0,221.6 L1167.0,230.0 L1166.0,243.4 L1162.5,252.3 L1157.1,272.9 L1178.6,272.9 L1189.3,262.1 L1203.6,263.9 L1194.6,283.6 L1194.6,292.5 L1195.0,305.0 L1200.0,318.0 L1206.0,333.0 L1206.0,352.7 L1229.6,353.3 L1228.1,362.7 L1231.9,395.9 L1229.6,408.0 L1219.0,436.7 L1208.5,451.8 L1194.9,470.0 L1185.8,491.1 L1175.2,506.2 L1170.7,520.6 L1162.4,523.6 L1162.8,543.3 L1171.6,580.8 L1178.0,609.5 L1182.6,640.0 L1182.6,662.0 L1165.0,673.0 L1156.0,684.0 L1131.9,684.0 L1116.4,671.0 L1096.5,679.7 L1125.2,690.8 L1120.8,699.6 L1087.7,712.9 L1098.7,721.7 L1109.8,723.9 L1125.2,715.0 L1142.9,719.5 L1138.5,728.3 L1120.8,754.8 L1116.4,743.8 L1090.0,746.0 L1076.7,750.4 L1063.4,759.2 L1046.8,770.3 L1040.2,754.8 L1035.8,743.8 L1035.8,723.9 L1032.5,717.3 L1030.3,704.0 L1021.5,705.1 L1003.8,697.4 L988.3,691.9 L972.9,694.1 L961.8,673.1 L995.0,642.0 L960.0,622.0 L971.0,621.0 L976.0,605.0 L976.0,577.5 L1009.0,577.5 L1009.0,555.0 L988.0,548.0 L975.0,548.0 L980.0,530.0 L976.0,520.0 L966.0,518.0 L962.9,510.2 L966.2,501.3 L977.3,501.3 L983.9,492.5 L990.5,474.8 L997.2,463.8 L1006.0,448.3 L993.8,430.7 L997.2,425.1 L1014.8,426.2 L1020.3,420.7 L1039.0,402.0 L1045.7,386.5 L1049.8,384.3 L1032.0,358.7 L1049.8,352.7 L1063.6,340.9 L1093.2,329.0 L1073.5,313.3 L1097.0,305.4 L1103.0,273.9 L1089.3,260.0 L1077.4,240.3Z"/></clipPath>
<clipPath id="cb"><path d="M792.1,671.4 L892.6,671.4 L900.0,673.0 L913.0,669.0 L926.5,662.0 L940.0,671.0 L960.0,673.0 L961.8,673.1 L972.9,694.1 L988.3,691.9 L1003.8,697.4 L1021.5,705.1 L1030.3,704.0 L1032.5,717.3 L1035.8,723.9 L1035.8,743.8 L1040.2,754.8 L1046.8,770.3 L1032.5,790.2 L1023.7,805.6 L1013.7,822.2 L1006.0,818.9 L990.0,821.0 L970.7,823.3 L953.0,834.3 L937.5,847.6 L924.3,871.9 L915.5,894.0 L908.8,898.4 L900.4,896.2 L882.7,916.0 L868.3,924.9 L862.8,936.3 L855.0,965.0 L583.0,965.0 L583.5,936.3 L584.6,927.0 L597.8,913.8 L607.8,902.8 L605.5,885.1 L615.5,882.9 L617.7,877.4 L624.3,874.0 L625.4,870.8 L644.2,860.8 L650.8,858.6 L658.5,846.5 L645.3,843.2 L637.6,829.9 L645.3,816.7 L660.8,811.1 L668.5,814.4 L672.9,804.5 L691.7,799.0 L688.4,779.1 L693.9,773.6 L717.0,790.2 L725.9,776.9 L736.9,761.5 L723.7,754.8 L732.5,728.3 L752.4,732.7 L750.2,719.5 L756.8,706.2 L785.5,704.0 L788.8,687.5Z"/></clipPath>
<path d="M589.0,373.2 L606.7,373.2 L617.7,381.0 L629.8,379.9 L625.4,389.8 L647.5,403.0 L660.8,392.0 L669.6,402.0 L688.4,410.8 L696.0,435.0 L690.6,442.8 L698.3,442.8 L706.0,463.8 L725.9,474.8 L712.6,488.0 L735.8,514.6 L760.1,503.5 L766.7,523.4 L753.5,530.0 L767.8,555.4 L783.3,552.1 L797.7,574.2 L761.2,574.2 L771.2,591.9 L777.8,587.4 L785.5,591.9 L788.8,589.6 L796.6,597.4 L795.5,607.3 L805.4,625.0 L805.4,653.7 L792.1,671.4 L788.8,687.5 L785.5,704.0 L756.8,706.2 L750.2,719.5 L752.4,732.7 L732.5,728.3 L723.7,754.8 L736.9,761.5 L725.9,776.9 L717.0,790.2 L693.9,773.6 L688.4,779.1 L691.7,799.0 L672.9,804.5 L668.5,814.4 L660.8,811.1 L645.3,816.7 L637.6,829.9 L645.3,843.2 L658.5,846.5 L650.8,858.6 L644.2,860.8 L625.4,870.8 L624.3,874.0 L617.7,877.4 L615.5,882.9 L605.5,885.1 L607.8,902.8 L597.8,913.8 L584.6,927.0 L583.5,936.3 L583.0,965.0 L508.0,965.0 L508.4,915.0 L497.3,913.8 L496.2,882.9 L489.6,880.7 L485.2,867.4 L463.1,860.8 L463.1,838.7 L453.2,803.4 L454.3,785.7 L446.6,754.8 L458.7,721.7 L452.1,718.4 L467.5,687.5 L454.3,667.6 L471.0,656.0 L461.3,636.7 L464.6,623.6 L431.8,620.3 L426.9,608.8 L452.0,600.7 L449.9,585.0 L465.3,569.8 L469.7,546.6 L496.2,532.2 L494.0,527.8 L513.9,503.5 L522.7,501.3 L533.8,488.0 L536.0,477.0 L522.7,463.8 L538.2,457.2 L540.4,448.3 L564.7,457.2 L559.2,446.1 L562.5,435.1 L557.0,428.5 L570.2,413.0 L564.7,395.3 L587.9,384.3Z" fill="#c0e676" />
<path d="M625.4,389.8 L633.2,371.0 L645.3,366.6 L649.7,381.0 L654.1,382.0 L655.2,373.2 L661.0,358.5 L679.0,345.4 L690.4,325.7 L696.4,323.7 L730.5,323.7 L748.0,306.0 L763.3,311.0 L786.0,308.5 L791.0,275.7 L866.7,273.2 L869.3,237.9 L894.5,235.3 L927.3,225.2 L932.4,221.5 L990.7,221.6 L994.6,210.8 L1000.0,206.0 L1026.0,205.8 L1036.0,216.7 L1038.0,221.6 L1052.0,219.0 L1088.0,213.0 L1097.0,221.6 L1077.4,240.3 L1089.3,260.0 L1103.0,273.9 L1097.0,305.4 L1073.5,313.3 L1093.2,329.0 L1063.6,340.9 L1049.8,352.7 L1032.0,358.7 L1049.8,384.3 L1045.7,386.5 L1039.0,402.0 L1020.3,420.7 L1014.8,426.2 L997.2,425.1 L993.8,430.7 L1006.0,448.3 L997.2,463.8 L990.5,474.8 L983.9,492.5 L977.3,501.3 L966.2,501.3 L962.9,510.2 L953.0,510.0 L948.0,515.0 L944.5,528.0 L927.0,528.0 L918.0,574.0 L897.0,577.5 L894.0,620.0 L892.6,671.4 L792.1,671.4 L805.4,653.7 L805.4,625.0 L795.5,607.3 L796.6,597.4 L788.8,589.6 L785.5,591.9 L777.8,587.4 L771.2,591.9 L761.2,574.2 L797.7,574.2 L783.3,552.1 L767.8,555.4 L753.5,530.0 L766.7,523.4 L760.1,503.5 L735.8,514.6 L712.6,488.0 L725.9,474.8 L706.0,463.8 L698.3,442.8 L690.6,442.8 L696.0,435.0 L688.4,410.8 L669.6,402.0 L660.8,392.0 L647.5,403.0Z" fill="#cb8bb9" />
<path d="M1166.0,221.6 L1184.0,221.6 L1197.7,205.8 L1207.6,212.7 L1219.4,221.6 L1298.0,221.6 L1308.0,230.0 L1308.0,274.6 L1296.4,285.4 L1282.1,310.4 L1247.3,348.8 L1238.4,348.8 L1251.8,332.7 L1242.9,324.6 L1224.1,323.8 L1207.1,297.9 L1194.6,292.5 L1194.6,283.6 L1203.6,263.9 L1189.3,262.1 L1178.6,272.9 L1157.1,272.9 L1162.5,252.3 L1166.0,243.4 L1167.0,230.0Z" fill="#cb8bb9" />
<path d="M1097.0,221.6 L1132.6,221.6 L1148.4,215.7 L1164.0,221.6 L1166.0,221.6 L1167.0,230.0 L1166.0,243.4 L1162.5,252.3 L1157.1,272.9 L1178.6,272.9 L1189.3,262.1 L1203.6,263.9 L1194.6,283.6 L1194.6,292.5 L1195.0,305.0 L1200.0,318.0 L1206.0,333.0 L1206.0,352.7 L1229.6,353.3 L1228.1,362.7 L1231.9,395.9 L1229.6,408.0 L1219.0,436.7 L1208.5,451.8 L1194.9,470.0 L1185.8,491.1 L1175.2,506.2 L1170.7,520.6 L1162.4,523.6 L1162.8,543.3 L1171.6,580.8 L1178.0,609.5 L1182.6,640.0 L1182.6,662.0 L1165.0,673.0 L1156.0,684.0 L1131.9,684.0 L1116.4,671.0 L1096.5,679.7 L1125.2,690.8 L1120.8,699.6 L1087.7,712.9 L1098.7,721.7 L1109.8,723.9 L1125.2,715.0 L1142.9,719.5 L1138.5,728.3 L1120.8,754.8 L1116.4,743.8 L1090.0,746.0 L1076.7,750.4 L1063.4,759.2 L1046.8,770.3 L1040.2,754.8 L1035.8,743.8 L1035.8,723.9 L1032.5,717.3 L1030.3,704.0 L1021.5,705.1 L1003.8,697.4 L988.3,691.9 L972.9,694.1 L961.8,673.1 L995.0,642.0 L960.0,622.0 L971.0,621.0 L976.0,605.0 L976.0,577.5 L1009.0,577.5 L1009.0,555.0 L988.0,548.0 L975.0,548.0 L980.0,530.0 L976.0,520.0 L966.0,518.0 L962.9,510.2 L966.2,501.3 L977.3,501.3 L983.9,492.5 L990.5,474.8 L997.2,463.8 L1006.0,448.3 L993.8,430.7 L997.2,425.1 L1014.8,426.2 L1020.3,420.7 L1039.0,402.0 L1045.7,386.5 L1049.8,384.3 L1032.0,358.7 L1049.8,352.7 L1063.6,340.9 L1093.2,329.0 L1073.5,313.3 L1097.0,305.4 L1103.0,273.9 L1089.3,260.0 L1077.4,240.3Z" fill="#8a948f" />
<path d="M792.1,671.4 L892.6,671.4 L900.0,673.0 L913.0,669.0 L926.5,662.0 L940.0,671.0 L960.0,673.0 L961.8,673.1 L972.9,694.1 L988.3,691.9 L1003.8,697.4 L1021.5,705.1 L1030.3,704.0 L1032.5,717.3 L1035.8,723.9 L1035.8,743.8 L1040.2,754.8 L1046.8,770.3 L1032.5,790.2 L1023.7,805.6 L1013.7,822.2 L1006.0,818.9 L990.0,821.0 L970.7,823.3 L953.0,834.3 L937.5,847.6 L924.3,871.9 L915.5,894.0 L908.8,898.4 L900.4,896.2 L882.7,916.0 L868.3,924.9 L862.8,936.3 L855.0,965.0 L583.0,965.0 L583.5,936.3 L584.6,927.0 L597.8,913.8 L607.8,902.8 L605.5,885.1 L615.5,882.9 L617.7,877.4 L624.3,874.0 L625.4,870.8 L644.2,860.8 L650.8,858.6 L658.5,846.5 L645.3,843.2 L637.6,829.9 L645.3,816.7 L660.8,811.1 L668.5,814.4 L672.9,804.5 L691.7,799.0 L688.4,779.1 L693.9,773.6 L717.0,790.2 L725.9,776.9 L736.9,761.5 L723.7,754.8 L732.5,728.3 L752.4,732.7 L750.2,719.5 L756.8,706.2 L785.5,704.0 L788.8,687.5Z" fill="#a0867d" />
<g clip-path="url(#cm)" opacity="0.4">
<line x1="700.0" y1="470.0" x2="900.0" y2="330.0" stroke="#b57f9e" stroke-width="26" stroke-linecap="round"/>
<line x1="720.0" y1="520.0" x2="960.0" y2="340.0" stroke="#b57f9e" stroke-width="22" stroke-linecap="round"/>
<line x1="760.0" y1="545.0" x2="1000.0" y2="360.0" stroke="#b57f9e" stroke-width="20" stroke-linecap="round"/>
<line x1="800.0" y1="560.0" x2="1010.0" y2="400.0" stroke="#b57f9e" stroke-width="16" stroke-linecap="round"/>
<line x1="690.0" y1="420.0" x2="850.0" y2="310.0" stroke="#b57f9e" stroke-width="24" stroke-linecap="round"/>
<line x1="700.0" y1="360.0" x2="800.0" y2="300.0" stroke="#b57f9e" stroke-width="18" stroke-linecap="round"/>
<line x1="850.0" y1="560.0" x2="1000.0" y2="450.0" stroke="#b57f9e" stroke-width="14" stroke-linecap="round"/>
<line x1="880.0" y1="300.0" x2="1000.0" y2="230.0" stroke="#b57f9e" stroke-width="20" stroke-linecap="round"/>
<line x1="1000.0" y1="300.0" x2="1060.0" y2="240.0" stroke="#b57f9e" stroke-width="16" stroke-linecap="round"/>
</g>
<ellipse cx="1150" cy="700" rx="22.0" ry="13.0" fill="#76866f" opacity="0.55" clip-path="url(#cgr)"/>
<ellipse cx="1105" cy="738" rx="20.0" ry="11.0" fill="#76866f" opacity="0.55" clip-path="url(#cgr)"/>
<ellipse cx="1185" cy="652" rx="13.0" ry="15.0" fill="#76866f" opacity="0.55" clip-path="url(#cgr)"/>
<ellipse cx="1068" cy="758" rx="15.0" ry="8.0" fill="#76866f" opacity="0.55" clip-path="url(#cgr)"/>
<ellipse cx="1160" cy="665" rx="15.0" ry="9.0" fill="#76866f" opacity="0.55" clip-path="url(#cgr)"/>
<ellipse cx="1190" cy="430" rx="15.0" ry="30.0" fill="#76866f" opacity="0.55" clip-path="url(#cgr)"/>
<ellipse cx="1160" cy="380" rx="20.0" ry="15.0" fill="#76866f" opacity="0.55" clip-path="url(#cgr)"/>
<ellipse cx="800" cy="872" rx="11.0" ry="8.0" fill="#6f7a82" opacity="0.45" clip-path="url(#cb)"/>
<ellipse cx="840" cy="842" rx="13.0" ry="6.0" fill="#6f7a82" opacity="0.45" clip-path="url(#cb)"/>
<ellipse cx="770" cy="830" rx="7.0" ry="5.0" fill="#6f7a82" opacity="0.45" clip-path="url(#cb)"/>
<ellipse cx="700" cy="760" rx="8.0" ry="5.0" fill="#6f7a82" opacity="0.45" clip-path="url(#cb)"/>
<ellipse cx="560" cy="690" rx="35.0" ry="11.0" fill="#a9db55" opacity="0.5" clip-path="url(#cg)"/>
<ellipse cx="610" cy="700" rx="20.0" ry="8.0" fill="#a9db55" opacity="0.5" clip-path="url(#cg)"/>
<ellipse cx="530" cy="560" rx="13.0" ry="7.0" fill="#a9db55" opacity="0.5" clip-path="url(#cg)"/>
<ellipse cx="700" cy="640" rx="20.0" ry="9.0" fill="#a9db55" opacity="0.5" clip-path="url(#cg)"/>
<ellipse cx="520" cy="870" rx="13.0" ry="20.0" fill="#a9db55" opacity="0.5" clip-path="url(#cg)"/>
<ellipse cx="570" cy="470" rx="15.0" ry="8.0" fill="#a9db55" opacity="0.5" clip-path="url(#cg)"/>
<path d="M420,380L438,380L459,380M444,394L456,399L465,400M444,394L436,411L427,422M427,422L435,419L443,418M442,454L431,458L419,464M419,464L430,468L446,474M419,464L432,482L446,497M446,497L459,500L468,502M446,497L438,506L432,514M432,514L441,520L450,522M432,514L437,531L438,552M438,552L454,551L465,553M438,552L430,569L422,582M422,582L434,588L447,589M447,589L454,591L464,589M447,589L432,604L418,624M418,624L435,638L448,646M448,646L461,648L474,650M448,646L437,657L422,672M422,672L437,669L450,667M422,672L424,683L430,693M430,693L450,700L464,707M430,693L426,707L426,723M426,723L443,722L457,724M426,723L429,733L434,743M434,743L453,741L471,743M434,743L429,758L422,772M422,772L436,778L452,782M422,772L430,783L435,789M435,789L451,792L466,797M435,789L432,805L433,824M433,824L441,825L448,824M433,824L439,832L442,842M442,842L458,843L473,839M442,842L436,858L436,880M436,880L447,877L457,879M436,880L435,890L432,895M432,895L453,899L472,903M432,895L431,909L431,927M431,927L446,926L458,924M431,927L437,938L448,947M448,947L456,945L466,947M448,947L438,959L433,976M433,976L441,979L443,980M433,976L435,987L436,1000M459,380L467,379L477,373M459,380L464,391L465,400M465,400L476,400L487,395M465,400L455,410L443,418M443,418L461,422L478,426M443,418L459,433L470,447M470,447L478,447L492,447M470,447L456,460L446,474M446,474L455,470L468,468M446,474L457,487L468,502M468,502L475,502L483,500M468,502L459,514L450,522M450,522L468,523L484,529M450,522L458,536L465,553M465,553L478,556L495,554M465,553L460,564L452,571M452,571L465,573L472,580M452,571L458,580L464,589M464,589L479,588L493,590M464,589L456,609L443,627M443,627L458,623L468,614M443,627L458,639L474,650M474,650L484,648L494,643M474,650L461,661L450,667M450,667L460,669L469,676M450,667L454,688L464,707M464,707L473,696L486,690M464,707L461,715L457,724M457,724L467,726L470,724M457,724L466,735L471,743M471,743L479,742L483,744M471,743L461,760L452,782M452,782L469,776L481,772M452,782L458,791L466,797M466,797L454,810L448,824M448,824L456,824L468,821M448,824L461,832L473,839M473,839L478,842L488,842M473,839L463,860L457,879M457,879L462,881L469,881M472,903L483,897L490,893M472,903L463,914L458,924M458,924L467,929L479,929M458,924L463,935L466,947M466,947L473,945L480,939M466,947L453,963L443,980M443,980L457,981L470,977M443,980L452,986L466,992M477,373L488,371L505,374M477,373L483,385L487,395M487,395L497,399L509,407M478,426L495,422L508,424M478,426L485,438L492,447M492,447L501,449L509,451M492,447L482,461L468,468M468,468L485,470L500,475M468,468L477,487L483,500M483,500L484,514L484,529M484,529L490,527L494,519M484,529L491,543L495,554M495,554L509,553L523,555M495,554L481,568L472,580M472,580L486,581L498,580M472,580L485,583L493,590M493,590L504,597L511,607M493,590L480,603L468,614M468,614L480,629L494,643M494,643L502,641L510,639M494,643L481,659L469,676M469,676L491,669L509,664M469,676L478,685L486,690M486,690L504,700L520,707M486,690L476,705L470,724M470,724L486,720L503,717M470,724L475,732L483,744M483,744L504,751L521,757M483,744L482,760L481,772M481,772L494,772L506,773M481,772L484,782L486,798M486,798L496,798L512,795M486,798L478,810L468,821M468,821L482,821L496,827M468,821L477,830L488,842M488,842L503,841L513,842M488,842L477,863L469,881M469,881L482,876L494,876M469,881L478,887L490,893M490,893L502,896L511,898M490,893L486,909L479,929M479,929L491,929L499,930M479,929L482,935L480,939M480,939L503,940L522,939M480,939L473,958L470,977M470,977L486,975L496,970M470,977L476,992L483,1002M505,374L516,369L524,368M505,374L505,389L509,407M509,407L525,406L543,405M509,407L507,416L508,424M508,424L524,422L535,420M508,424L511,439L509,451M509,451L527,449L547,452M509,451L502,463L500,475M500,475L511,477L527,482M500,475L506,490L511,501M511,501L520,503L534,502M511,501L502,510L494,519M494,519L507,537L523,555M523,555L533,548L547,543M523,555L514,569L498,580M498,580L517,577L532,575M498,580L503,591L511,607M511,607L527,598L546,596M511,607L512,616L507,622M507,622L518,622L524,619M507,622L509,630L510,639M510,639L528,647L546,650M510,639L512,652L509,664M509,664L523,671L536,681M509,664L515,688L520,707M520,707L529,705L532,699M520,707L511,715L503,717M503,717L512,713L519,714M503,717L509,739L521,757M521,757L526,756L531,755M521,757L514,765L506,773M506,773L521,776L532,779M506,773L511,781L512,795M512,795L523,796L536,800M512,795L502,809L496,827M496,827L514,826L532,821M513,842L528,840L541,843M513,842L505,861L494,876M494,876L509,873L519,869M494,876L503,885L511,898M511,898L531,897L547,899M511,898L503,916L499,930M499,930L515,925L535,922M499,930L512,933L522,939M522,939L531,948L535,954M522,939L508,957L496,970M496,970L512,967L533,964M496,970L511,984L524,1004M524,368L536,376L545,381M524,368L534,387L543,405M543,405L549,402L556,393M543,405L537,410L535,420M535,420L546,420L561,422M535,420L538,439L547,452M547,452L555,448L557,442M547,452L539,464L527,482M527,482L529,493L534,502M534,502L547,502L557,506M534,502L524,510L519,517M519,517L533,524L550,532M519,517L532,531L547,543M547,543L558,545L572,544M547,543L542,558L532,575M532,575L537,571L547,573M532,575L540,586L546,596M546,596L536,607L524,619M524,619L533,618L543,614M524,619L538,637L546,650M546,650L560,647L574,644M546,650L542,666L536,681M536,681L544,676L554,672M536,681L535,690L532,699M532,699L548,695L561,690M532,699L525,707L519,714M519,714L539,726L560,732M519,714L525,736L531,755M531,755L553,749L573,741M531,755L531,768L532,779M532,779L541,774L546,775M532,779L536,789L536,800M536,800L554,800L574,799M536,800L537,809L532,821M532,821L542,827L555,826M532,821L534,833L541,843M541,843L528,859L519,869M519,869L532,870L548,868M519,869L533,883L547,899M547,899L551,897L556,894M547,899L543,908L535,922M535,922L551,923L561,922M535,922L536,936L535,954M535,954L549,950L567,951M533,964L549,965L560,971M533,964L537,977L543,990M545,381L556,379L573,380M545,381L552,387L556,393M556,393L577,394L597,394M556,393L559,406L561,422M561,422L566,420L574,424M561,422L559,434L557,442M557,442L575,449L591,450M557,442L551,458L547,478M547,478L560,471L572,464M547,478L554,495L557,506M557,506L568,495L585,490M557,506L555,516L550,532M550,532L564,523L578,515M550,532L558,536L572,544M572,544L576,548L581,551M572,544L558,557L547,573M547,573L559,576L573,579M547,573L551,586L557,601M557,601L571,604L589,605M557,601L548,606L543,614M543,614L554,620L570,623M543,614L556,631L574,644M574,644L582,641L595,640M574,644L564,658L554,672M554,672L571,667L585,667M554,672L559,679L561,690M561,690L559,710L560,732M560,732L571,724L583,720M560,732L565,735L573,741M573,741L577,747L582,748M573,741L561,760L546,775M546,775L565,771L585,769M546,775L562,790L574,799M574,799L583,793L597,791M574,799L567,813L555,826M555,826L573,822L585,814M555,826L557,837L560,849M560,849L573,850L586,856M560,849L552,859L548,868M548,868L567,873L583,881M548,868L553,879L556,894M556,894L577,897L596,903M556,894L557,910L561,922M561,922L570,920L581,917M561,922L567,939L567,951M567,951L575,944L588,942M567,951L567,962L560,971M560,971L570,977L581,976M560,971L563,985L561,995M573,380L593,380L611,379M573,380L583,390L597,394M597,394L605,397L615,399M574,424L590,425L609,422M574,424L582,436L591,450M591,450L604,449L612,445M591,450L579,455L572,464M572,464L587,462L597,464M572,464L577,477L585,490M585,490L601,496L617,497M585,490L581,505L578,515M578,515L590,515L603,515M578,515L579,530L581,551M581,551L598,544L612,541M581,551L575,564L573,579M573,579L583,574L595,569M573,579L583,589L589,605M589,605L603,600L621,596M589,605L582,615L570,623M570,623L582,632L595,640M595,640L599,639L609,639M595,640L588,651L585,667M585,667L595,671L602,673M595,707L608,703L617,697M595,707L588,711L583,720M583,720L595,726L605,728M583,720L581,733L582,748M582,748L598,747L609,748M582,748L583,762L585,769M585,769L594,766L601,768M585,769L593,779L597,791M597,791L606,796L613,799M597,791L591,804L585,814M585,814L596,822L610,831M585,814L586,837L586,856M586,856L598,855L610,851M583,881L589,871L593,865M583,881L587,892L596,903M596,903L606,907L615,905M596,903L589,910L581,917M581,917L588,923L595,928M581,917L582,930L588,942M588,942L606,945L622,945M588,942L586,960L581,976M581,976L591,980L606,980M581,976L581,983L585,990M611,379L624,377L631,375M615,399L631,399L646,406M615,399L614,408L609,422M609,422L622,426L636,425M612,445L621,447L633,443M612,445L603,457L597,464M597,464L608,470L622,475M597,464L607,481L617,497M617,497L631,496L644,490M617,497L612,504L603,515M603,515L614,524L630,527M603,515L607,529L612,541M612,541L625,545L637,548M612,541L603,557L595,569M595,569L609,571L621,578M595,569L607,581L621,596M621,596L628,599L631,607M621,596L613,610L600,625M600,625L619,627L633,626M600,625L605,630L609,639M609,639L622,649L635,656M609,639L608,654L602,673M602,673L619,672L636,666M602,673L607,685L617,697M617,697L611,710L605,728M605,728L617,730L630,727M605,728L607,736L609,748M609,748L627,753L638,756M609,748L607,756L601,768M601,768L621,767L636,771M601,768L604,782L613,799M613,799L628,797L645,797M613,799L611,815L610,831M610,831L614,826L621,820M610,831L611,839L610,851M610,851L621,853L632,856M610,851L602,857L593,865M593,865L617,866L636,866M593,865L605,884L615,905M615,905L628,901L641,896M615,905L605,915L595,928M595,928L606,924L620,919M595,928L610,939L622,945M622,945L627,951L635,953M622,945L613,963L606,980M606,980L611,975L617,967M606,980L607,989L612,1002M631,375L644,376L654,375M631,375L638,393L646,406M646,406L643,417L636,425M636,425L639,425L648,424M636,425L636,433L633,443M633,443L649,444L660,450M633,443L625,459L622,475M622,475L637,477L647,477M622,475L633,482L644,490M644,490L658,500L670,504M630,527L644,529L661,524M630,527L636,536L637,548M637,548L648,550L664,555M637,548L630,564L621,578M621,578L637,575L657,575M621,578L624,592L631,607M631,607L649,598L662,594M631,607L632,614L633,626M633,626L636,630L644,629M633,626L631,641L635,656M635,656L648,656L657,653M635,656L638,658L636,666M636,666L641,676L653,682M636,666L642,687L645,705M645,705L655,705L669,707M645,705L639,719L630,727M630,727L638,726L645,723M630,727L633,741L638,756M638,756L652,750L666,745M638,756L635,761L636,771M636,771L641,772L652,770M636,771L641,784L645,797M645,797L657,795L665,789M645,797L632,810L621,820M621,820L638,822L651,822M621,820L629,840L632,856M632,856L644,851L661,846M632,856L634,861L636,866M636,866L649,870L657,877M636,866L638,879L641,896M641,896L651,897L664,901M641,896L628,905L620,919M620,919L637,918L650,918M620,919L628,934L635,953M635,953L646,951L655,944M635,953L626,960L617,967M617,967L636,974L654,980M617,967L627,976L638,989M654,375L672,373L686,372M654,375L660,386L671,393M671,393L684,392L696,396M671,393L662,407L648,424M648,424L665,429L682,432M648,424L653,434L660,450M660,450L672,447L686,442M660,450L652,466L647,477M647,477L666,475L679,474M647,477L657,488L670,504M670,504L678,497L687,489M670,504L665,515L661,524M661,524L669,522L675,522M661,524L663,539L664,555M664,555L675,552L688,555M664,555L663,567L657,575M657,575L666,578L679,578M657,575L660,583L662,594M662,594L683,602L697,603M662,594L653,613L644,629M644,629L661,626L677,628M657,653L676,653L692,651M657,653L655,665L653,682M653,682L669,678L679,671M653,682L659,696L669,707M669,707L681,705L692,701M669,707L657,716L645,723M645,723L666,727L685,729M645,723L653,732L666,745M666,745L681,748L696,753M666,745L657,755L652,770M652,770L665,772L683,775M652,770L659,778L665,789M665,789L676,790L687,794M665,789L656,808L651,822M651,822L666,825L681,830M651,822L655,836L661,846M661,846L677,841L690,842M661,846L661,861L657,877M657,877L669,874L683,873M657,877L664,891L664,901M664,901L679,894L689,890M664,901L656,908L650,918M650,918L664,926L677,928M650,918L650,932L655,944M655,944L673,942L688,945M655,944L656,963L654,980M654,980L664,991L671,998M686,372L693,374L706,371M686,372L693,382L696,396M696,396L708,401L718,400M696,396L688,415L682,432M682,432L687,426L696,418M682,432L683,438L686,442M686,442L706,442L722,444M686,442L682,459L679,474M679,474L689,474L694,479M679,474L682,482L687,489M687,489L699,491L715,496M687,489L679,507L675,522M675,522L690,523L702,528M675,522L683,541L688,555M688,555L695,554L708,551M688,555L685,566L679,578M679,578L691,580L706,579M679,578L691,587L697,603M697,603L701,603L710,600M677,628L689,625L697,624M677,628L686,639L692,651M692,651L701,655L708,654M692,651L686,660L679,671M679,671L692,668L709,670M679,671L684,686L692,701M692,701L703,706L709,707M692,701L689,717L685,729M685,729L696,732L706,730M685,729L692,740L696,753M696,753L688,763L683,775M683,775L693,775L704,770M683,775L683,783L687,794M687,794L698,797L713,803M687,794L684,815L681,830M681,830L695,823L707,817M681,830L684,833L690,842M690,842L705,843L717,842M690,842L685,858L683,873M683,873L699,872L711,872M683,873L683,880L689,890M689,890L707,896L722,903M689,890L686,908L677,928M677,928L689,922L704,919M677,928L683,939L688,945M688,945L701,942L715,941M688,945L681,956L680,964M680,964L682,985L690,1007M706,371L712,377L722,377M706,371L710,388L718,400M718,400L732,398L744,395M718,400L710,406L696,418M696,418L708,421L719,421M722,444L728,439L739,441M722,444L710,459L694,479M694,479L706,469L721,465M694,479L703,488L715,496M715,496L728,501L741,506M715,496L707,512L702,528M702,528L714,519L722,514M702,528L702,538L708,551M708,551L725,555L743,554M708,551L708,567L706,579M706,579L718,578L736,575M706,579L707,589L710,600M710,600L720,601L736,605M710,600L706,615L697,624M697,624L709,624L720,627M697,624L703,637L708,654M708,654L720,647L732,646M708,654L711,659L709,670M709,670L720,668L727,671M709,670L709,687L709,707M709,707L722,702L733,693M706,730L708,740L705,756M705,756L723,749L741,743M705,756L707,763L704,770M704,770L717,772L731,770M704,770L712,787L713,803M713,803L728,802L741,806M713,803L711,812L707,817M707,817L721,816L736,815M707,817L714,832L717,842M717,842L733,851L745,855M717,842L714,859L711,872M711,872L716,872L723,871M711,872L719,885L722,903M722,903L733,906L741,906M722,903L713,910L704,919M704,919L708,927L715,941M715,941L730,942L744,942M715,941L706,957L695,977M695,977L716,972L735,964M695,977L705,990L712,1003M722,377L735,375L743,371M722,377L735,383L744,395M744,395L748,395L757,397M744,395L732,409L719,421M719,421L741,425L758,431M739,441L749,442L756,440M739,441L730,452L721,465M721,465L730,483L741,506M741,506L751,499L760,491M741,506L733,508L722,514M722,514L735,534L743,554M743,554L756,555L767,553M743,554L740,563L736,575M736,575L748,575L755,580M736,575L738,588L736,605M736,605L754,600L767,596M736,605L728,614L720,627M720,627L724,636L732,646M732,646L752,645L767,643M732,646L728,659L727,671M727,671L736,675L744,681M727,671L731,681L733,693M733,693L748,697L766,695M733,693L732,705L733,722M733,722L741,721L754,724M733,722L735,730L741,743M741,743L754,743L765,740M741,743L733,756L731,770M731,770L738,771L749,772M731,770L738,790L741,806M741,806L736,812L736,815M736,815L742,820L750,826M736,815L742,834L745,855M745,855L755,851L768,853M723,871L733,891L741,906M741,906L753,905L760,907M741,906L735,916L725,930M725,930L738,929L745,931M725,930L737,937L744,942M744,942L757,950L771,955M744,942L739,953L735,964M735,964L736,962L743,965M735,964L732,985L733,1001M743,371L759,376L774,382M743,371L753,387L757,397M757,397L770,400L781,399M757,397L758,414L758,431M758,431L764,421L776,416M758,431L758,435L756,440M756,440L770,449L787,452M756,440L756,451L758,465M758,465L771,463L784,464M758,465L758,479L760,491M760,491L776,491L790,490M760,491L754,505L744,514M744,514L765,514L783,515M744,514L757,532L767,553M767,553L776,551L781,546M767,553L759,568L755,580M755,580L770,576L781,570M755,580L763,590L767,596M767,596L763,616L754,632M754,632L770,630L783,630M754,632L758,640L767,643M767,643L776,646L786,647M767,643L753,663L744,681M744,681L758,681L772,674M744,681L756,690L766,695M766,695L779,695L786,695M766,695L758,709L754,724M754,724L762,733L765,740M765,740L779,741L791,741M749,772L764,773L780,772M749,772L755,786L759,805M759,805L777,803L799,802M759,805L752,814L750,826M750,826L769,824L783,827M768,853L781,852L790,856M768,853L764,863L756,878M756,878L771,871L783,869M756,878L760,890L760,907M760,907L774,904L783,896M760,907L754,917L745,931M745,931L764,926L777,916M745,931L760,942L771,955M771,955L781,953L786,950M771,955L759,963L743,965M743,965L753,969L768,979M743,965L754,979L770,998M774,382L784,375L798,370M774,382L780,393L781,399M781,399L796,399L811,403M776,416L790,422L802,424M776,416L784,437L787,452M787,452L799,452L808,456M787,452L787,457L784,464M784,464L793,465L799,470M784,464L785,476L790,490M790,490L796,501L806,507M790,490L784,504L783,515M783,515L793,521L802,531M783,515L780,531L781,546M781,546L800,554L823,557M781,546L780,560L781,570M781,570L780,588L782,604M782,604L804,603L822,604M782,604L782,615L783,630M783,630L791,628L795,624M783,630L782,637L786,647M786,647L800,654L816,658M786,647L777,659L772,674M772,674L792,676L807,677M772,674L776,687L786,695M786,695L804,694L819,696M786,695L782,715L782,732M782,732L796,731L810,726M782,732L789,739L791,741M791,741L801,746L813,748M791,741L786,758L780,772M780,772L788,786L799,802M799,802L805,799L808,792M799,802L791,814L783,827M783,827L792,826L805,824M790,856L808,851L822,842M790,856L789,862L783,869M783,869L789,871L800,878M783,869L785,882L783,896M783,896L780,907L777,916M777,916L792,918L803,919M777,916L781,933L786,950M786,950L795,948L807,944M786,950L778,963L768,979M768,979L785,975L804,974M768,979L779,989L792,995M798,370L816,372L834,376M798,370L806,386L811,403M811,403L821,405L833,405M802,424L810,420L818,421M802,424L802,440L808,456M808,456L803,462L799,470M799,470L808,476L823,481M799,470L800,486L806,507M806,507L823,506L841,505M806,507L804,516L802,531M802,531L818,524L834,522M802,531L813,546L823,557M823,557L831,555L843,549M823,557L813,566L808,581M808,581L824,581L835,579M808,581L814,592L822,604M822,604L836,603L844,604M822,604L809,612L795,624M795,624L813,623L836,619M795,624L806,642L816,658M816,658L827,658L834,653M816,658L809,668L807,677M807,677L818,677L832,673M807,677L812,684L819,696M819,696L831,697L839,696M819,696L813,708L810,726M810,726L821,726L834,729M810,726L811,734L813,748M813,748L824,743L841,739M813,748L810,762L811,774M811,774L824,774L834,772M811,774L810,784L808,792M808,792L820,790L834,794M808,792L806,809L805,824M805,824L811,836L822,842M822,842L827,841L832,844M822,842L811,860L800,878M800,878L818,876L834,878M800,878L805,883L806,891M806,891L826,898L848,899M806,891L805,904L803,919M803,919L816,920L828,924M803,919L805,928L807,944M807,944L821,945L840,949M807,944L807,959L804,974M804,974L817,979L833,982M804,974L807,984L806,990M834,376L844,371L848,369M834,376L833,393L833,405M833,405L848,401L865,400M833,405L825,411L818,421M818,421L833,424L853,432M818,421L834,435L846,452M846,452L849,451L858,451M846,452L836,467L823,481M823,481L844,482L861,478M823,481L831,494L841,505M841,505L852,500L866,496M841,505L840,511L834,522M834,522L843,529L850,531M834,522L840,533L843,549M843,549L855,551L872,551M843,549L837,565L835,579M835,579L849,578L859,581M835,579L839,592L844,604M844,604L860,599L871,596M836,619L842,624L851,629M836,619L837,633L834,653M834,653L830,662L832,673M832,673L839,671L852,670M832,673L833,686L839,696M839,696L850,696L864,691M839,696L835,714L834,729M834,729L840,725L849,722M834,729L836,732L841,739M841,739L846,742L855,742M841,739L835,757L834,772M834,772L836,786L834,794M834,794L850,794L866,794M834,794L832,802L831,814M831,814L846,817L861,819M831,814L832,832L832,844M832,844L846,851L865,853M832,844L832,861L834,878M834,878L844,876L856,872M848,899L862,901L870,898M848,899L838,913L828,924M828,924L841,922L856,923M828,924L834,935L840,949M840,949L857,949L873,952M840,949L834,964L833,982M833,982L837,976L844,966M833,982L833,989L838,1001" fill="none" stroke="#a0de37" stroke-width="1.1" clip-path="url(#cg)" opacity="0.7" stroke-linejoin="round"/>
<path d="M635,215L632,219L630,224M630,224L649,235L663,243M630,224L629,245L632,265M632,265L646,256L662,253M632,265L640,275L642,283M642,283L655,287L671,291M642,283L635,298L628,316M628,316L641,318L652,314M628,316L635,322L641,334M641,334L655,344L666,350M641,334L633,351L624,366M624,366L639,369L652,375M624,366L633,386L643,405M643,405L653,404L663,403M635,423L647,422L661,421M635,423L638,434L638,444M638,444L627,456L616,466M616,466L639,474L657,476M616,466L628,484L638,499M638,499L648,501L660,499M638,499L628,519L623,538M623,538L639,530L656,523M639,558L656,558L674,552M639,558L629,567L620,574M620,574L643,578L661,580M620,574L627,586L635,603M635,603L653,612L675,615M635,603L631,627L626,648M626,648L641,642L652,638M626,648L635,653L642,658M642,658L655,660L669,667M642,658L635,678L633,698M633,698L638,691L649,686M633,698L641,715L644,727M658,212L671,205L682,197M658,212L661,225L663,243M663,243L683,240L699,237M663,243L662,246L662,253M662,253L675,252L688,253M662,253L669,270L671,291M671,291L686,286L698,278M671,291L662,301L652,314M652,314L668,312L683,309M652,314L658,332L666,350M666,350L675,347L687,349M666,350L662,364L652,375M652,375L664,369L671,368M652,375L659,386L663,403M663,403L683,394L700,390M663,403L661,414L661,421M661,421L669,424L673,430M661,421L664,437L667,457M667,457L664,469L657,476M657,476L666,472L670,473M657,476L658,485L660,499M660,499L673,505L686,506M660,499L656,513L656,523M656,523L663,529L671,539M656,523L665,536L674,552M674,552L678,558L683,562M674,552L666,567L661,580M661,580L667,580L670,579M661,580L666,600L675,615M675,615L685,607L699,604M675,615L664,629L652,638M669,667L679,664L691,655M669,667L657,677L649,686M649,686L666,686L689,685M649,686L660,708L666,728M682,197L697,207L709,211M682,197L691,216L699,237M699,237L706,236L712,229M699,237L696,248L688,253M688,253L694,254L697,259M688,253L693,268L698,278M698,278L709,287L725,292M698,278L692,292L683,309M683,309L696,312L715,319M683,309L684,330L687,349M687,349L706,349L727,345M687,349L678,356L671,368M671,368L683,380L700,390M700,390L711,392L723,391M700,390L685,410L673,430M673,430L683,427L698,421M673,430L680,442L691,453M691,453L711,447L728,441M691,453L681,462L670,473M670,473L688,471L708,474M670,473L677,489L686,506M686,506L705,499L720,495M686,506L678,521L671,539M671,539L696,535L716,525M671,539L675,548L683,562M683,562L701,558L722,555M683,562L676,571L670,579M670,579L681,579L697,585M670,579L684,590L699,604M699,604L705,601L713,602M699,604L685,623L673,642M673,642L684,636L697,631M673,642L684,650L691,655M691,655L692,669L689,685M689,685L698,694L707,702M689,685L684,697L683,716M709,211L721,207L728,205M709,211L712,220L712,229M712,229L728,230L742,235M712,229L706,246L697,259M697,259L714,278L725,292M725,292L741,285L751,282M725,292L722,303L715,319M715,319L725,318L732,314M715,319L723,329L727,345M727,345L734,338L737,331M727,345L720,355L706,362M706,362L721,364L732,360M706,362L716,377L723,391M723,391L736,389L751,389M723,391L711,405L698,421M698,421L709,420L725,415M698,421L712,430L728,441M728,441L718,455L708,474M708,474L720,477L734,475M708,474L715,487L720,495M720,495L731,500L743,506M720,495L717,511L716,525M716,525L723,530L727,538M716,525L717,542L722,555M722,555L741,561L756,561M722,555L706,569L697,585M697,585L706,593L713,602M713,602L705,617L697,631M697,631L711,633L732,638M697,631L706,651L712,668M712,668L723,659L740,656M712,668L706,685L707,702M707,702L725,693L740,689M707,702L719,716L729,729M728,205L744,205L763,201M728,205L736,220L742,235M742,235L761,231L784,230M742,235L737,251L736,266M736,266L741,267L751,264M736,266L746,274L751,282M751,282L757,283L766,283M751,282L740,296L732,314M732,314L748,313L767,317M732,314L732,321L737,331M737,331L748,337L764,340M737,331L735,344L732,360M732,360L748,367L759,368M732,360L740,372L751,389M751,389L761,394L768,397M751,389L741,403L725,415M725,415L734,427L741,443M741,443L757,449L771,458M741,443L735,459L734,475M734,475L743,476L752,481M734,475L738,491L743,506M743,506L753,504L768,504M743,506L733,522L727,538M727,538L742,531L758,529M727,538L739,548L756,561M756,561L769,561L779,555M756,561L742,575L732,584M732,584L740,578L753,576M732,584L741,594L749,602M749,602L742,618L732,638M732,638L750,645L763,647M732,638L737,648L740,656M740,656L758,657L778,655M740,656L742,672L740,689M740,689L749,694L764,697M740,689L740,706L747,727M763,201L776,203L784,205M763,201L774,218L784,230M784,230L766,244L751,264M751,264L768,263L788,259M751,264L756,271L766,283M766,283L790,290L810,293M767,317L783,321L796,321M767,317L766,327L764,340M764,340L780,337L797,335M764,340L760,356L759,368M759,368L772,367L787,363M759,368L764,384L768,397M768,397L783,398L799,398M768,397L757,408L752,417M752,417L773,418L796,424M752,417L763,440L771,458M771,458L764,471L752,481M752,481L769,486L784,486M752,481L758,494L768,504M768,504L780,504L794,501M768,504L761,518L758,529M758,529L767,527L779,521M758,529L767,543L779,555M779,555L794,560L809,567M779,555L765,566L753,576M753,576L769,575L790,576M753,576L757,596L765,618M765,618L784,610L797,605M765,618L764,633L763,647M778,655L788,660L800,665M778,655L771,678L764,697M764,697L771,697L779,693M764,697L769,709L778,719M784,205L796,203L806,206M784,205L795,218L807,228M807,228L820,229L832,228M807,228L800,244L788,259M788,259L803,258L823,259M788,259L802,277L810,293M810,293L823,287L832,285M810,293L801,304L796,321M796,321L810,321L825,320M796,321L797,327L797,335M797,335L813,333L829,334M797,335L794,348L787,363M787,363L801,360L813,358M787,363L792,378L799,398M799,398L816,402L830,403M799,398L797,411L796,424M796,424L804,421L808,422M796,424L804,431L807,441M807,441L815,445L828,447M807,441L799,461L784,486M784,486L801,488L819,485M784,486L787,495L794,501M794,501L816,504L832,502M794,501L786,512L779,521M779,521L800,524L824,526M779,521L794,544L809,567M809,567L820,563L833,560M790,576L803,583L820,591M790,576L795,588L797,605M797,605L809,611L822,613M797,605L796,625L791,642M791,642L802,642L812,641M791,642L798,652L800,665M800,665L816,668L838,668M800,665L787,681L779,693M779,693L796,708L810,724M806,206L826,211L844,212M806,206L818,216L832,228M832,228L841,232L845,242M832,228L826,245L823,259M823,259L836,262L846,262M823,259L828,269L832,285M832,285L847,287L863,295M832,285L827,305L825,320M825,320L827,326L829,334M829,334L845,332L860,335M829,334L823,345L813,358M813,358L832,366L846,370M813,358L820,383L830,403M830,403L838,403L849,401M830,403L822,412L808,422M808,422L819,422L834,424M808,422L820,435L828,447M828,447L838,443L854,444M819,485L833,478L843,475M819,485L828,491L832,502M832,502L841,506L849,512M832,502L830,513L824,526M824,526L828,523L833,520M824,526L830,542L833,560M833,560L824,575L820,591M820,591L830,592L845,589M820,591L821,601L822,613M822,613L837,615L855,614M822,613L818,624L812,641M812,641L826,638L838,633M812,641L827,657L838,668M838,668L846,662L855,655M838,668L822,681L804,691M804,691L819,692L833,697M804,691L815,709L832,727M844,212L862,208L874,204M844,212L843,224L845,242M845,242L864,240L885,239M845,242L847,254L846,262M846,262L861,258L876,252M846,262L855,278L863,295M863,295L866,291L875,284M863,295L846,309L833,320M833,320L849,312L868,310M833,320L845,325L860,335M860,335L864,338L872,342M860,335L855,354L846,370M846,370L861,365L878,365M846,370L847,387L849,401M849,401L867,396L883,392M849,401L839,414L834,424M834,424L851,429L867,429M834,424L844,433L854,444M854,444L868,446L878,452M854,444L848,457L843,475M843,475L852,476L868,477M843,475L849,497L849,512M849,512L872,501L890,494M849,512L841,517L833,520M833,520L851,522L875,526M833,520L843,543L855,564M855,564L867,563L885,563M855,564L851,577L845,589M845,589L849,604L855,614M855,614L872,609L889,602M855,614L848,623L838,633M838,633L854,636L871,636M838,633L847,642L855,655M855,655L867,662L883,672M855,655L843,675L833,697M833,697L852,695L875,694M833,697L838,710L848,724M874,204L886,201L895,200M874,204L878,220L885,239M885,239L893,238L904,242M885,239L878,247L876,252M876,252L882,258L887,266M876,252L877,267L875,284M875,284L894,283L906,284M875,284L871,297L868,310M868,310L881,307L892,305M868,310L872,324L872,342M872,342L890,339L908,334M872,342L873,353L878,365M878,365L886,363L894,364M878,365L883,380L883,392M883,392L898,398L917,403M883,392L874,411L867,429M867,429L880,428L894,425M867,429L875,443L878,452M878,452L895,446L918,445M878,452L873,462L868,477M868,477L879,472L887,470M868,477L878,486L890,494M890,494L897,498L903,506M890,494L880,507L875,526M875,526L887,523L893,527M875,526L879,542L885,563M885,563L899,555L915,551M885,563L878,570L872,582M872,582L887,586L902,587M872,582L882,593L889,602M889,602L896,613L907,617M889,602L877,622L871,636M871,636L884,639L892,646M871,636L877,654L883,672M883,672L901,668L918,665M883,672L879,681L875,694M875,694L886,698L899,701M875,694L875,702L878,713M895,200L909,207L930,215M895,200L902,219L904,242M904,242L925,242L941,243M887,266L903,263L918,262M887,266L894,277L906,284M906,284L925,284L939,284M906,284L900,297L892,305M892,305L905,306L920,307M892,305L902,320L908,334M908,334L924,334L945,338M908,334L901,349L894,364M894,364L910,370L922,376M894,364L908,385L917,403M917,403L924,404L929,404M917,403L907,413L894,425M894,425L902,419L915,412M894,425L904,437L918,445M918,445L927,443L933,446M918,445L901,458L887,470M887,470L909,477L931,484M887,470L895,490L903,506M903,506L921,505L941,501M903,506L896,514L893,527M893,527L909,526L923,524M893,527L906,539L915,551M915,551L929,556L943,555M915,551L908,571L902,587M902,587L912,586L918,587M902,587L905,602L907,617M907,617L916,615L929,607M907,617L901,631L892,646M892,646L910,636L931,629M892,646L906,654L918,665M918,665L923,659L929,659M918,665L911,684L899,701M899,701L906,696L917,690M899,701L908,715L914,724M930,215L935,210L944,200M930,215L938,229L941,243M941,243L954,237L965,229M941,243L932,254L918,262M918,262L927,271L939,284M939,284L947,283L954,279M939,284L933,295L920,307M920,307L939,311L957,312M920,307L934,321L945,338M945,338L957,338L969,333M945,338L935,355L922,376M922,376L939,373L950,375M922,376L924,392L929,404M929,404L947,404L960,400M929,404L923,406L915,412M915,412L934,417L952,420M915,412L921,426L933,446M933,446L952,449L973,447M933,446L934,466L931,484M931,484L941,479L949,478M931,484L937,493L941,501M941,501L950,508L959,510M941,501L930,515L923,524M923,524L935,530L951,532M923,524L933,539L943,555M943,555L951,561L964,567M943,555L931,572L918,587M918,587L940,588L959,591M918,587L921,597L929,607M929,607L947,610L962,609M929,607L930,619L931,629M931,629L938,630L950,628M931,629L930,647L929,659M929,659L942,666L955,675M929,659L922,676L917,690M917,690L928,695L942,701M917,690L924,706L931,716M944,200L956,199L968,202M944,200L956,216L965,229M965,229L955,250L947,265M954,279L970,277L983,280M954,279L957,298L957,312M957,312L967,309L980,305M957,312L961,321L969,333M950,375L961,377L967,376M950,375L953,388L960,400M960,400L973,400L985,394M960,400L955,409L952,420M952,420L968,420L978,414M952,420L963,435L973,447M973,447L980,444L990,440M949,478L959,481L970,484M949,478L954,492L959,510M959,510L979,507L997,503M959,510L957,519L951,532M951,532L967,536L980,538M951,532L955,546L964,567M964,567L973,559L983,557M964,567L959,579L959,591M959,591L962,583L969,576M959,591L959,601L962,609M962,609L973,605L982,605M962,609L959,620L950,628M950,628L960,630L967,632M950,628L951,650L955,675M955,675L947,690L942,701M942,701L962,698L984,700M942,701L957,714L967,727M968,202L988,200L1012,199M968,202L984,209L996,223M968,257L986,253L1006,254M968,257L976,268L983,280M983,280L999,279L1014,283M983,280L979,290L980,305M980,305L993,306L1002,312M1000,344L1010,346L1015,347M1000,344L985,358L967,376M967,376L990,373L1010,369M967,376L974,387L985,394M985,394L999,393L1016,390M985,394L979,403L978,414M978,414L992,422L1009,432M978,414L987,429L990,440M990,440L1004,449L1011,453M990,440L978,463L970,484M970,484L987,479L1007,479M970,484L986,495L997,503M997,503L1003,502L1007,504M997,503L988,523L980,538M980,538L990,533L997,524M983,557L1003,558L1019,560M983,557L974,566L969,576M969,576L986,581L1006,589M969,576L977,593L982,605M982,605L999,609L1021,610M982,605L974,618L967,632M967,632L981,639L994,643M967,632L976,652L987,667M987,667L1005,672L1024,672M987,667L986,686L984,700M984,700L997,691L1005,682M984,700L991,708L994,719M1012,199L1010,220L1009,239M1009,239L1006,249L1006,254M1006,254L1024,260L1040,268M1006,254L1007,267L1014,283M1014,283L1030,284L1043,283M1014,283L1006,298L1002,312M1002,312L1012,318L1024,320M1002,312L1007,330L1015,347M1015,347L1032,340L1048,336M1015,347L1010,359L1010,369M1010,369L1023,370L1039,369M1010,369L1013,380L1016,390M1016,390L1027,395L1042,393M1016,390L1011,414L1009,432M1009,432L1024,425L1035,421M1009,432L1012,443L1011,453M1011,453L1031,448L1047,441M1011,453L1011,468L1007,479M1007,479L1023,474L1035,471M1007,479L1008,490L1007,504M1007,504L1032,499L1052,497M1007,504L1005,514L997,524M997,524L1014,525L1027,531M997,524L1010,543L1019,560M1019,560L1027,557L1042,557M1019,560L1015,573L1006,589M1006,589L1024,585L1039,578M1006,589L1014,602L1021,610M1021,610L1032,615L1049,615M1021,610L1011,627L994,643M994,643L1014,642L1036,637M994,643L1009,655L1024,672M1024,672L1035,667L1043,662M1024,672L1015,677L1005,682M1005,682L1016,684L1030,687M1005,682L1009,699L1011,711M1033,207L1043,207L1051,205M1033,207L1037,226L1037,242M1037,242L1054,235L1072,229M1037,242L1036,253L1040,268M1040,268L1047,264L1051,262M1040,268L1039,273L1043,283M1043,283L1058,284L1078,281M1043,283L1036,300L1024,320M1024,320L1044,319L1060,317M1024,320L1036,327L1048,336M1048,336L1044,352L1039,369M1039,369L1048,368L1053,362M1039,369L1043,384L1042,393M1042,393L1059,389L1078,391M1042,393L1036,409L1035,421M1035,421L1039,424L1047,429M1035,421L1040,429L1047,441M1047,441L1054,443L1065,445M1047,441L1042,456L1035,471M1035,471L1042,473L1054,471M1035,471L1042,485L1052,497M1052,497L1039,513L1027,531M1027,531L1044,530L1056,528M1027,531L1033,543L1042,557M1042,557L1062,555L1078,547M1042,557L1039,570L1039,578M1039,578L1048,577L1059,576M1039,578L1044,599L1049,615M1049,615L1059,613L1064,613M1049,615L1043,623L1036,637M1036,637L1047,632L1055,629M1036,637L1038,651L1043,662M1043,662L1058,667L1073,673M1043,662L1034,674L1030,687M1030,687L1047,687L1060,692M1030,687L1033,703L1038,718M1051,205L1065,202L1077,202M1051,205L1063,215L1072,229M1072,229L1091,238L1107,242M1072,229L1061,246L1051,262M1051,262L1067,264L1078,264M1051,262L1062,270L1078,281M1078,281L1091,284L1106,289M1078,281L1069,299L1060,317M1060,317L1074,313L1089,314M1060,317L1069,329L1079,345M1079,345L1083,342L1092,335M1079,345L1068,353L1053,362M1053,362L1064,365L1075,371M1053,362L1063,377L1078,391M1078,391L1085,393L1090,397M1078,391L1062,413L1047,429M1047,429L1064,427L1082,420M1047,429L1059,438L1065,445M1065,445L1087,445L1108,447M1065,445L1057,457L1054,471M1054,471L1065,486L1075,500M1075,500L1082,498L1092,497M1075,500L1066,514L1056,528M1056,528L1069,534L1085,536M1056,528L1068,535L1078,547M1078,547L1081,555L1089,566M1078,547L1071,561L1059,576M1059,576L1071,575L1088,575M1059,576L1060,594L1064,613M1064,613L1081,609L1102,609M1064,613L1061,621L1055,629M1055,629L1069,630L1085,630M1055,629L1063,652L1073,673M1073,673L1088,669L1098,665M1073,673L1066,685L1060,692M1060,692L1075,693L1090,693M1060,692L1066,711L1077,727M1077,202L1093,201L1106,196M1077,202L1089,220L1107,242M1107,242L1118,233L1124,225M1107,242L1094,254L1078,264M1078,264L1094,279L1106,289M1106,289L1113,291L1126,289M1106,289L1099,304L1089,314M1089,314L1100,321L1114,323M1089,314L1092,327L1092,335M1092,335L1103,336L1117,342M1092,335L1083,356L1075,371M1075,371L1089,371L1103,371M1090,397L1107,390L1124,387M1090,397L1084,412L1082,420M1082,420L1093,420L1108,425M1082,420L1095,434L1108,447M1108,447L1117,450L1124,458M1108,447L1096,463L1084,473M1084,473L1094,471L1108,473M1084,473L1090,484L1092,497M1092,497L1115,500L1134,505M1092,497L1091,515L1085,536M1085,536L1087,551L1089,566M1089,566L1105,563L1122,566M1089,566L1086,571L1088,575M1088,575L1104,584L1114,590M1088,575L1097,591L1102,609M1102,609L1118,612L1133,611M1102,609L1094,622L1085,630M1085,630L1105,629L1121,628M1085,630L1090,646L1098,665M1098,665L1109,666L1122,672M1098,665L1092,682L1090,693M1090,693L1097,696L1101,695M1106,196L1127,197L1146,197M1106,196L1117,211L1124,225M1124,225L1114,239L1104,256M1104,256L1121,256L1137,258M1104,256L1114,275L1126,289M1126,289L1139,285L1158,280M1126,289L1117,306L1114,323M1114,323L1120,321L1129,316M1114,323L1114,332L1117,342M1117,342L1141,345L1161,348M1117,342L1112,357L1103,371M1103,371L1122,365L1142,364M1103,371L1112,380L1124,387M1124,387L1142,386L1160,385M1124,387L1115,404L1108,425M1108,425L1120,424L1133,428M1108,425L1116,440L1124,458M1124,458L1114,462L1108,473M1108,473L1127,467L1147,468M1108,473L1124,487L1134,505M1134,505L1144,497L1154,494M1134,505L1116,520L1103,536M1103,536L1116,529L1133,523M1103,536L1111,549L1122,566M1122,566L1135,563L1142,555M1122,566L1115,578L1114,590M1114,590L1125,588L1138,579M1114,590L1122,598L1133,611M1133,611L1144,605L1155,602M1133,611L1128,620L1121,628M1121,628L1127,635L1139,638M1121,628L1121,651L1122,672M1122,672L1113,684L1101,695M1101,695L1116,691L1131,690M1101,695L1119,707L1135,723" fill="none" stroke="#ad4f99" stroke-width="1.1" clip-path="url(#cm)" opacity="0.65" stroke-linejoin="round"/>
<path d="M954,217L979,214L1002,214M954,217L964,235L972,249M972,249L992,248L1009,242M972,249L968,256L963,267M963,267L976,273L991,275M963,267L964,290L964,317M964,317L984,312L1003,311M964,317L960,323L954,333M954,333L970,353L987,370M987,370L999,376L1011,381M987,370L976,384L968,401M968,401L985,409L999,413M968,401L975,412L979,424M979,424L994,427L1011,425M979,424L971,447L963,472M963,472L980,473L999,475M963,472L970,488L976,500M976,500L998,496L1016,496M976,500L968,506L964,515M964,515L981,515L996,519M964,515L972,539L982,559M982,559L999,559L1014,558M982,559L968,566L955,577M955,577L971,575L986,577M955,577L971,595L984,618M984,618L1002,627L1015,630M984,618L975,639L965,659M965,659L976,659L981,657M965,659L975,675L981,691M981,691L994,679L1004,672M981,691L970,705L958,719M958,719L972,717L986,718M958,719L963,736L974,753M974,753L994,743L1015,732M969,764L979,765L994,763M969,764L965,780L967,798M1002,214L1014,221L1031,227M1002,214L1005,230L1009,242M1009,242L1021,252L1038,258M1009,242L1003,260L991,275M991,275L1003,273L1018,268M1003,311L1021,306L1040,298M1003,311L996,327L993,349M993,349L1002,341L1015,338M993,349L1003,365L1011,381M1011,381L1026,371L1040,363M1011,381L1007,396L999,413M999,413L1008,413L1011,410M999,413L1004,419L1011,425M1011,425L1020,431L1033,444M1011,425L1007,448L999,475M999,475L1014,466L1031,461M999,475L1007,483L1016,496M1016,496L1024,494L1037,495M1016,496L1003,505L996,519M996,519L1010,525L1025,528M996,519L1005,538L1014,558M1014,558L1029,557L1039,560M1014,558L1000,566L986,577M986,577L1008,580L1032,588M986,577L1002,602L1015,630M1015,630L1025,630L1036,624M1015,630L997,642L981,657M981,657L999,650L1016,645M981,657L994,667L1004,672M1004,672L1024,674L1049,681M1004,672L993,692L986,718M986,718L1006,712L1023,700M986,718L1004,725L1015,732M1015,732L1028,741L1036,745M1015,732L1003,748L994,763M994,763L1001,784L1012,801M1031,227L1043,220L1056,215M1031,227L1037,241L1038,258M1038,258L1057,253L1073,243M1038,258L1030,262L1018,268M1018,268L1036,277L1058,283M1018,268L1027,281L1040,298M1040,298L1049,299L1057,298M1040,298L1027,316L1015,338M1015,338L1033,344L1057,351M1015,338L1029,348L1040,363M1040,363L1053,367L1063,370M1040,363L1028,386L1011,410M1011,410L1035,403L1055,397M1011,410L1020,426L1033,444M1033,444L1033,450L1031,461M1031,461L1042,462L1050,466M1031,461L1032,479L1037,495M1037,495L1047,492L1064,492M1025,528L1043,521L1059,515M1025,528L1033,545L1039,560M1039,560L1053,559L1070,562M1039,560L1038,571L1032,588M1032,588L1043,583L1049,581M1032,588L1032,606L1036,624M1036,624L1058,619L1076,613M1036,624L1027,637L1016,645M1016,645L1031,646L1046,648M1016,645L1034,664L1049,681M1049,681L1059,676L1073,671M1049,681L1037,688L1023,700M1023,700L1036,701L1049,708M1023,700L1031,722L1036,745M1036,745L1057,741L1076,741M1036,745L1026,760L1011,776M1011,776L1034,769L1061,766M1011,776L1028,787L1041,794M1056,215L1077,215L1093,215M1073,243L1082,243L1093,238M1073,243L1068,263L1058,283M1058,283L1071,280L1085,270M1058,283L1056,293L1057,298M1057,298L1080,309L1107,317M1057,298L1057,325L1057,351M1057,351L1068,341L1077,334M1057,351L1059,362L1063,370M1063,370L1083,369L1107,374M1063,370L1058,381L1055,397M1055,397L1075,399L1091,398M1065,428L1057,445L1050,466M1050,466L1070,462L1091,458M1050,466L1056,481L1064,492M1064,492L1080,495L1096,493M1064,492L1060,502L1059,515M1059,515L1068,517L1082,524M1059,515L1065,536L1070,562M1070,562L1088,557L1109,549M1070,562L1062,573L1049,581M1049,581L1060,594L1076,613M1076,613L1091,619L1108,630M1076,613L1058,629L1046,648M1046,648L1066,654L1082,660M1046,648L1057,659L1073,671M1073,671L1092,675L1110,674M1073,671L1059,687L1049,708M1049,708L1071,714L1090,720M1049,708L1063,723L1076,741M1076,741L1087,743L1103,743M1076,741L1071,753L1061,766M1061,766L1073,770L1079,770M1061,766L1063,787L1065,808M1093,215L1103,214L1117,211M1093,238L1115,236L1138,236M1093,238L1091,254L1085,270M1085,270L1095,294L1107,317M1107,317L1126,319L1140,318M1077,334L1098,338L1124,342M1077,334L1092,353L1107,374M1107,374L1115,373L1119,376M1107,374L1098,386L1091,398M1091,398L1102,398L1107,397M1091,398L1094,411L1091,428M1091,428L1115,429L1134,433M1091,428L1094,446L1091,458M1091,458L1101,465L1113,474M1091,458L1092,478L1096,493M1096,493L1113,490L1133,491M1096,493L1089,510L1082,524M1082,524L1096,531L1109,534M1082,524L1094,539L1109,549M1109,549L1118,556L1130,563M1109,549L1091,571L1072,598M1072,598L1095,587L1112,581M1072,598L1088,617L1108,630M1108,630L1121,626L1131,626M1108,630L1097,643L1082,660M1082,660L1097,661L1107,657M1082,660L1099,667L1110,674M1110,674L1123,680L1140,688M1090,720L1104,708L1123,700M1090,720L1096,734L1103,743M1103,743L1117,750L1134,751M1079,770L1085,785L1093,795M1117,211L1132,212L1144,215M1117,211L1127,225L1138,236M1138,236L1153,235L1168,235M1138,236L1131,259L1125,282M1125,282L1128,276L1136,269M1140,318L1145,311L1153,299M1140,318L1130,328L1124,342M1124,342L1138,348L1157,348M1124,342L1124,357L1119,376M1119,376L1138,375L1152,371M1107,397L1125,399L1142,397M1107,397L1121,415L1134,433M1134,433L1147,434L1158,436M1134,433L1123,453L1113,474M1113,474L1131,470L1148,460M1133,491L1146,490L1154,491M1109,534L1121,531L1137,527M1109,534L1119,550L1130,563M1130,563L1151,558L1167,554M1130,563L1121,574L1112,581M1112,581L1121,604L1131,626M1131,626L1144,626L1159,621M1131,626L1117,643L1107,657M1107,657L1133,651L1153,647M1107,657L1124,675L1140,688M1140,688L1157,687L1169,684M1140,688L1130,694L1123,700M1123,700L1133,705L1144,709M1123,700L1129,724L1134,751M1134,751L1147,750L1161,747M1134,751L1116,759L1104,768M1104,768L1121,774L1144,778M1104,768L1115,788L1125,805M1144,215L1163,220L1178,220M1144,215L1157,223L1168,235M1168,235L1174,240L1182,245M1168,235L1150,250L1136,269M1136,269L1156,275L1175,287M1136,269L1143,281L1153,299M1153,299L1176,301L1203,306M1153,299L1155,323L1157,348M1157,348L1173,347L1186,347M1157,348L1157,361L1152,371M1152,371L1169,372L1187,370M1142,397L1152,403L1168,409M1142,397L1152,419L1158,436M1158,436L1177,439L1196,442M1158,436L1151,448L1148,460M1148,460L1167,461L1184,468M1154,491L1177,491L1198,496M1154,491L1145,511L1137,527M1137,527L1151,530L1168,528M1137,527L1152,539L1167,554M1167,554L1176,549L1181,548M1167,554L1152,566L1136,580M1136,580L1162,581L1183,577M1136,580L1146,598L1159,621M1159,621L1170,613L1183,609M1159,621L1154,636L1153,647M1153,647L1163,665L1169,684M1169,684L1173,683L1181,689M1169,684L1156,698L1144,709M1144,709L1154,714L1168,720M1144,709L1151,727L1161,747M1161,747L1180,748L1197,751M1161,747L1151,763L1144,778M1144,778L1164,778L1188,776M1144,778L1153,789L1161,799M1178,220L1198,217L1214,216M1178,220L1181,233L1182,245M1182,245L1203,243L1229,237M1182,245L1179,266L1175,287M1175,287L1197,288L1214,288M1175,287L1191,299L1203,306M1203,306L1211,305L1213,305M1203,306L1196,325L1186,347M1186,347L1198,345L1210,347M1186,347L1189,358L1187,370M1187,370L1204,366L1217,363M1187,370L1178,391L1168,409M1168,409L1183,408L1202,404M1168,409L1181,428L1196,442M1196,442L1213,439L1229,430M1196,442L1192,453L1184,468M1184,468L1195,466L1205,461M1184,468L1191,482L1198,496M1198,496L1210,495L1220,493M1198,496L1180,512L1168,528M1168,528L1184,525L1198,526M1168,528L1172,537L1181,548M1181,548L1205,549L1235,555M1181,548L1180,563L1183,577M1183,577L1196,579L1214,580M1183,577L1185,593L1183,609M1183,609L1203,616L1228,625M1183,609L1187,623L1186,642M1186,642L1183,664L1181,689M1181,689L1175,704L1168,720M1168,720L1191,715L1217,703M1168,720L1184,738L1197,751M1197,751L1207,751L1214,749M1197,751L1192,766L1188,776M1188,776L1204,773L1218,774M1188,776L1192,785L1200,794M1214,216L1225,215L1232,210M1214,216L1223,226L1229,237M1229,237L1237,243L1247,249M1229,237L1221,260L1214,288M1214,288L1225,278L1235,271M1214,288L1214,299L1213,305M1213,305L1237,311L1259,319M1213,305L1212,327L1210,347M1210,347L1220,344L1234,345M1217,363L1235,373L1252,379M1217,363L1210,385L1202,404M1202,404L1220,398L1241,396M1202,404L1218,415L1229,430M1229,430L1236,428L1248,421M1229,430L1217,449L1205,461M1205,461L1220,462L1239,461M1205,461L1211,478L1220,493M1220,493L1231,492L1247,491M1220,493L1212,507L1198,526M1198,526L1216,531L1235,532M1198,526L1217,539L1235,555M1235,555L1240,563L1246,568M1235,555L1223,567L1214,580M1214,580L1225,585L1239,590M1214,580L1221,601L1228,625M1228,625L1238,625L1254,627M1228,625L1220,636L1212,650M1212,650L1230,652L1247,651M1212,650L1218,667L1223,684M1223,684L1236,687L1254,686M1223,684L1218,696L1217,703M1217,703L1233,706L1247,709M1217,703L1219,724L1214,749M1214,749L1240,749L1260,754M1214,749L1216,760L1218,774M1218,774L1228,768L1238,767M1218,774L1217,793L1222,810M1232,210L1255,216L1274,227M1232,210L1238,229L1247,249M1247,249L1269,242L1294,241M1247,249L1239,263L1235,271M1235,271L1251,270L1263,272M1235,271L1248,296L1259,319M1259,319L1269,317L1278,314M1259,319L1248,332L1234,345M1234,345L1241,363L1252,379M1252,379L1266,380L1280,379M1252,379L1246,387L1241,396M1241,396L1250,397L1266,400M1241,396L1243,409L1248,421M1248,421L1269,423L1291,423M1248,421L1246,441L1239,461M1239,461L1248,464L1260,472M1239,461L1243,477L1247,491M1247,491L1262,489L1281,491M1247,491L1241,510L1235,532M1235,532L1254,530L1272,530M1235,532L1238,552L1246,568M1246,568L1259,562L1274,553M1246,568L1241,578L1239,590M1239,590L1254,590L1268,587M1239,590L1244,610L1254,627M1254,627L1265,624L1279,621M1254,627L1248,638L1247,651M1247,651L1265,652L1281,647M1247,651L1253,670L1254,686M1254,686L1273,677L1287,672M1254,686L1253,695L1247,709M1247,709L1259,711L1265,716M1247,709L1256,731L1260,754M1260,754L1266,755L1276,752M1260,754L1248,760L1238,767M1238,767L1257,763L1280,764" fill="none" stroke="#5f6e6c" stroke-width="1.2" clip-path="url(#cgr)" opacity="0.85" stroke-linejoin="round"/>
<path d="M576,651L603,664L625,672M576,651L588,669L598,689M598,689L621,686L647,687M598,689L587,712L571,731M571,731L595,734L622,739M612,778L627,771L637,761M612,778L604,787L590,798M590,798L602,794L618,795M590,798L595,815L602,836M602,836L628,843L649,852M602,836L589,853L574,867M574,867L600,872L620,873M574,867L584,898L593,926M593,926L621,921L648,916M593,926L595,942L592,958M592,958L609,961L629,960M592,958L600,969L609,978M609,978L622,980L637,984M609,978L591,1004L578,1025M625,672L638,662L646,657M625,672L638,681L647,687M647,687L665,686L682,686M647,687L633,715L622,739M622,739L632,753L637,761M637,761L654,768L667,771M637,761L625,779L618,795M618,795L635,799L654,802M618,795L634,821L649,852M649,852L666,845L687,834M649,852L633,865L620,873M620,873L635,873L653,870M620,873L637,897L648,916M648,916L664,913L677,908M648,916L642,937L629,960M629,960L642,958L651,957M629,960L634,970L637,984M637,984L650,987L668,988M637,984L631,1000L622,1020M646,657L664,668L682,686M682,686L700,694L716,701M682,686L663,709L643,737M643,737L661,733L684,729M643,737L656,756L667,771M667,771L683,771L700,769M667,771L660,789L654,802M654,802L669,805L678,811M654,802L672,819L687,834M687,834L701,841L720,854M687,834L672,850L653,870M653,870L674,881L697,891M653,870L664,890L677,908M677,908L686,905L696,908M677,908L663,935L651,957M651,957L679,955L704,958M668,988L685,991L707,998M679,655L703,654L721,654M679,655L697,678L716,701M716,701L699,717L684,729M684,729L707,737L724,747M684,729L693,752L700,769M700,769L722,761L740,757M700,769L686,792L678,811M678,811L695,801L715,797M678,811L698,836L720,854M720,854L735,849L753,838M720,854L707,875L697,891M697,891L699,897L696,908M696,908L728,911L758,912M696,908L697,931L704,958M704,958L711,948L719,938M704,958L704,979L707,998M707,998L721,985L733,977M707,998L699,1013L694,1031M721,654L734,658L750,662M721,654L732,672L743,688M743,688L733,720L724,747M724,747L735,739L753,735M724,747L733,754L740,757M740,757L762,761L788,768M740,757L727,775L715,797M715,797L745,800L776,805M715,797L731,815L753,838M753,838L765,838L774,840M753,838L736,853L721,867M721,867L736,874L750,876M721,867L738,890L758,912M758,912L767,920L774,925M758,912L738,927L719,938M719,938L743,942L772,950M719,938L726,956L733,977M733,977L749,977L768,979M733,977L733,997L732,1012M750,662L761,687L774,712M774,712L790,701L807,686M774,712L763,721L753,735M753,735L782,738L811,736M753,735L772,752L788,768M788,768L811,770L830,767M788,768L785,788L776,805M776,805L793,806L810,810M776,805L775,825L774,840M774,840L799,843L825,849M774,840L765,860L750,876M750,876L774,868L799,867M750,876L764,902L774,925M774,925L791,922L809,924M774,925L776,936L772,950M772,950L794,958L810,962M772,950L773,967L768,979M768,979L759,995L756,1014M792,672L817,665L844,663M792,672L800,680L807,686M807,686L833,696L857,703M807,686L809,709L811,736M811,736L821,740L829,746M811,736L819,752L830,767M830,767L849,760L865,758M810,810L831,815L848,819M810,810L816,829L825,849M825,849L841,839L858,830M825,849L813,856L799,867M799,867L823,868L846,868M799,867L804,894L809,924M809,924L811,946L810,962M810,962L815,950L823,941M810,962L810,975L813,990M813,990L835,988L857,988M813,990L811,1007L807,1026M844,663L855,655L863,648M844,663L848,681L857,703M857,703L840,727L829,746M829,746L856,735L881,723M829,746L846,755L865,758M865,758L880,768L897,778M865,758L855,786L848,819M848,819L862,810L881,807M848,819L856,824L858,830M858,830L879,835L899,834M858,830L851,850L846,868M846,868L860,872L876,873M846,868L856,896L866,919M866,919L884,919L900,921M866,919L844,928L823,941M823,941L845,944L870,951M823,941L841,966L857,988M857,988L865,982L876,973M857,988L849,1013L842,1034M863,648L893,659L917,665M901,685L909,689L915,694M901,685L893,705L881,723M881,723L900,728L914,735M881,723L887,753L897,778M897,778L906,777L912,779M897,778L889,795L881,807M881,807L898,801L916,795M881,807L888,823L899,834M899,834L914,838L926,839M899,834L889,852L876,873M876,873L894,872L915,873M876,873L888,898L900,921M900,921L887,939L870,951M870,951L896,944L920,939M870,951L875,964L876,973M876,973L897,982L914,989M876,973L876,996L874,1022M917,665L927,665L941,672M915,694L941,687L969,686M915,694L916,712L914,735M914,735L936,731L953,726M914,735L910,754L912,779M912,779L935,780L956,779M912,779L916,784L916,795M916,795L926,801L941,814M916,795L923,815L926,839M926,839L939,845L952,852M926,839L921,857L915,873M915,873L924,871L934,868M915,873L915,891L918,914M918,914L938,913L961,910M918,914L918,925L920,939M920,939L932,949L944,961M920,939L919,965L914,989M914,989L943,982L967,972M914,989L917,1005L918,1022M941,672L962,667L979,668M941,672L953,679L969,686M969,686L983,688L997,686M969,686L961,704L953,726M953,726L961,732L972,744M953,726L955,755L956,779M956,779L977,780L993,777M956,779L950,799L941,814M941,814L946,833L952,852M952,852L978,847L1002,845M952,852L943,858L934,868M934,868L952,879L974,889M934,868L948,888L961,910M961,910L980,916L996,925M961,910L953,934L944,961M944,961L956,960L974,960M944,961L953,967L967,972M967,972L985,982L1005,989M967,972L955,1001L938,1023M979,668L1002,662L1022,658M979,668L986,679L997,686M997,686L1017,685L1037,688M997,686L983,715L972,744M972,744L988,733L1004,724M972,744L984,762L993,777M993,777L1017,768L1041,761M993,777L994,795L992,809M992,809L1012,806L1026,802M992,809L1000,825L1002,845M1002,845L1019,842L1035,838M1002,845L986,867L974,889M974,889L995,876L1018,867M974,889L986,907L996,925M996,925L1013,927L1030,926M996,925L984,942L974,960M974,960L987,958L1006,954M974,960L992,973L1005,989M1005,989L1014,985L1028,981M1005,989L993,1002L977,1012M1022,658L1040,666L1063,671M1022,658L1029,672L1037,688M1037,688L1058,697L1077,706M1037,688L1020,709L1004,724M1004,724L1035,727L1063,725M1004,724L1022,744L1041,761M1041,761L1058,763L1071,770M1041,761L1034,783L1026,802M1026,802L1041,812L1053,818M1026,802L1032,819L1035,838M1035,838L1058,843L1076,855M1035,838L1027,855L1018,867M1018,867L1027,872L1041,882M1018,867L1026,898L1030,926M1030,926L1055,925L1074,921M1030,926L1019,939L1006,954M1006,954L1032,959L1054,959M1006,954L1014,966L1028,981M1028,981L1045,986L1064,998M1028,981L1015,993L1002,1009M1063,671L1081,667L1098,668M1063,671L1069,691L1077,706M1077,706L1088,700L1100,691M1077,706L1070,718L1063,725M1063,725L1075,731L1082,737M1063,725L1066,746L1071,770M1071,770L1095,776L1119,781M1071,770L1064,795L1053,818M1053,818L1070,812L1084,803M1053,818L1064,837L1076,855M1076,855L1094,844L1114,836M1076,855L1058,871L1041,882M1041,882L1061,874L1085,865M1041,882L1060,904L1074,921M1074,921L1085,919L1096,915M1074,921L1065,939L1054,959M1054,959L1076,958L1092,953M1054,959L1061,977L1064,998M1064,998L1054,1011L1048,1025" fill="none" stroke="#775650" stroke-width="1.2" clip-path="url(#cb)" opacity="0.85" stroke-linejoin="round"/>
<path d="M589.0,373.2 L606.7,373.2 L617.7,381.0 L629.8,379.9 L625.4,389.8 L647.5,403.0 L660.8,392.0 L669.6,402.0 L688.4,410.8 L696.0,435.0 L690.6,442.8 L698.3,442.8 L706.0,463.8 L725.9,474.8 L712.6,488.0 L735.8,514.6 L760.1,503.5 L766.7,523.4 L753.5,530.0 L767.8,555.4 L783.3,552.1 L797.7,574.2 L761.2,574.2 L771.2,591.9 L777.8,587.4 L785.5,591.9 L788.8,589.6 L796.6,597.4 L795.5,607.3 L805.4,625.0 L805.4,653.7 L792.1,671.4 L788.8,687.5 L785.5,704.0 L756.8,706.2 L750.2,719.5 L752.4,732.7 L732.5,728.3 L723.7,754.8 L736.9,761.5 L725.9,776.9 L717.0,790.2 L693.9,773.6 L688.4,779.1 L691.7,799.0 L672.9,804.5 L668.5,814.4 L660.8,811.1 L645.3,816.7 L637.6,829.9 L645.3,843.2 L658.5,846.5 L650.8,858.6 L644.2,860.8 L625.4,870.8 L624.3,874.0 L617.7,877.4 L615.5,882.9 L605.5,885.1 L607.8,902.8 L597.8,913.8 L584.6,927.0 L583.5,936.3 L583.0,965.0 L508.0,965.0 L508.4,915.0 L497.3,913.8 L496.2,882.9 L489.6,880.7 L485.2,867.4 L463.1,860.8 L463.1,838.7 L453.2,803.4 L454.3,785.7 L446.6,754.8 L458.7,721.7 L452.1,718.4 L467.5,687.5 L454.3,667.6 L471.0,656.0 L461.3,636.7 L464.6,623.6 L431.8,620.3 L426.9,608.8 L452.0,600.7 L449.9,585.0 L465.3,569.8 L469.7,546.6 L496.2,532.2 L494.0,527.8 L513.9,503.5 L522.7,501.3 L533.8,488.0 L536.0,477.0 L522.7,463.8 L538.2,457.2 L540.4,448.3 L564.7,457.2 L559.2,446.1 L562.5,435.1 L557.0,428.5 L570.2,413.0 L564.7,395.3 L587.9,384.3Z" fill="none" stroke="#a0de37" stroke-width="1.2" />
<path d="M625.4,389.8 L633.2,371.0 L645.3,366.6 L649.7,381.0 L654.1,382.0 L655.2,373.2 L661.0,358.5 L679.0,345.4 L690.4,325.7 L696.4,323.7 L730.5,323.7 L748.0,306.0 L763.3,311.0 L786.0,308.5 L791.0,275.7 L866.7,273.2 L869.3,237.9 L894.5,235.3 L927.3,225.2 L932.4,221.5 L990.7,221.6 L994.6,210.8 L1000.0,206.0 L1026.0,205.8 L1036.0,216.7 L1038.0,221.6 L1052.0,219.0 L1088.0,213.0 L1097.0,221.6 L1077.4,240.3 L1089.3,260.0 L1103.0,273.9 L1097.0,305.4 L1073.5,313.3 L1093.2,329.0 L1063.6,340.9 L1049.8,352.7 L1032.0,358.7 L1049.8,384.3 L1045.7,386.5 L1039.0,402.0 L1020.3,420.7 L1014.8,426.2 L997.2,425.1 L993.8,430.7 L1006.0,448.3 L997.2,463.8 L990.5,474.8 L983.9,492.5 L977.3,501.3 L966.2,501.3 L962.9,510.2 L953.0,510.0 L948.0,515.0 L944.5,528.0 L927.0,528.0 L918.0,574.0 L897.0,577.5 L894.0,620.0 L892.6,671.4 L792.1,671.4 L805.4,653.7 L805.4,625.0 L795.5,607.3 L796.6,597.4 L788.8,589.6 L785.5,591.9 L777.8,587.4 L771.2,591.9 L761.2,574.2 L797.7,574.2 L783.3,552.1 L767.8,555.4 L753.5,530.0 L766.7,523.4 L760.1,503.5 L735.8,514.6 L712.6,488.0 L725.9,474.8 L706.0,463.8 L698.3,442.8 L690.6,442.8 L696.0,435.0 L688.4,410.8 L669.6,402.0 L660.8,392.0 L647.5,403.0Z" fill="none" stroke="#ad4f99" stroke-width="1.0" opacity="0.6"/>
<path d="M1097.0,221.6 L1132.6,221.6 L1148.4,215.7 L1164.0,221.6 L1166.0,221.6 L1167.0,230.0 L1166.0,243.4 L1162.5,252.3 L1157.1,272.9 L1178.6,272.9 L1189.3,262.1 L1203.6,263.9 L1194.6,283.6 L1194.6,292.5 L1195.0,305.0 L1200.0,318.0 L1206.0,333.0 L1206.0,352.7 L1229.6,353.3 L1228.1,362.7 L1231.9,395.9 L1229.6,408.0 L1219.0,436.7 L1208.5,451.8 L1194.9,470.0 L1185.8,491.1 L1175.2,506.2 L1170.7,520.6 L1162.4,523.6 L1162.8,543.3 L1171.6,580.8 L1178.0,609.5 L1182.6,640.0 L1182.6,662.0 L1165.0,673.0 L1156.0,684.0 L1131.9,684.0 L1116.4,671.0 L1096.5,679.7 L1125.2,690.8 L1120.8,699.6 L1087.7,712.9 L1098.7,721.7 L1109.8,723.9 L1125.2,715.0 L1142.9,719.5 L1138.5,728.3 L1120.8,754.8 L1116.4,743.8 L1090.0,746.0 L1076.7,750.4 L1063.4,759.2 L1046.8,770.3 L1040.2,754.8 L1035.8,743.8 L1035.8,723.9 L1032.5,717.3 L1030.3,704.0 L1021.5,705.1 L1003.8,697.4 L988.3,691.9 L972.9,694.1 L961.8,673.1 L995.0,642.0 L960.0,622.0 L971.0,621.0 L976.0,605.0 L976.0,577.5 L1009.0,577.5 L1009.0,555.0 L988.0,548.0 L975.0,548.0 L980.0,530.0 L976.0,520.0 L966.0,518.0 L962.9,510.2 L966.2,501.3 L977.3,501.3 L983.9,492.5 L990.5,474.8 L997.2,463.8 L1006.0,448.3 L993.8,430.7 L997.2,425.1 L1014.8,426.2 L1020.3,420.7 L1039.0,402.0 L1045.7,386.5 L1049.8,384.3 L1032.0,358.7 L1049.8,352.7 L1063.6,340.9 L1093.2,329.0 L1073.5,313.3 L1097.0,305.4 L1103.0,273.9 L1089.3,260.0 L1077.4,240.3Z" fill="none" stroke="#5f6e6c" stroke-width="1.2" />
<path d="M792.1,671.4 L892.6,671.4 L900.0,673.0 L913.0,669.0 L926.5,662.0 L940.0,671.0 L960.0,673.0 L961.8,673.1 L972.9,694.1 L988.3,691.9 L1003.8,697.4 L1021.5,705.1 L1030.3,704.0 L1032.5,717.3 L1035.8,723.9 L1035.8,743.8 L1040.2,754.8 L1046.8,770.3 L1032.5,790.2 L1023.7,805.6 L1013.7,822.2 L1006.0,818.9 L990.0,821.0 L970.7,823.3 L953.0,834.3 L937.5,847.6 L924.3,871.9 L915.5,894.0 L908.8,898.4 L900.4,896.2 L882.7,916.0 L868.3,924.9 L862.8,936.3 L855.0,965.0 L583.0,965.0 L583.5,936.3 L584.6,927.0 L597.8,913.8 L607.8,902.8 L605.5,885.1 L615.5,882.9 L617.7,877.4 L624.3,874.0 L625.4,870.8 L644.2,860.8 L650.8,858.6 L658.5,846.5 L645.3,843.2 L637.6,829.9 L645.3,816.7 L660.8,811.1 L668.5,814.4 L672.9,804.5 L691.7,799.0 L688.4,779.1 L693.9,773.6 L717.0,790.2 L725.9,776.9 L736.9,761.5 L723.7,754.8 L732.5,728.3 L752.4,732.7 L750.2,719.5 L756.8,706.2 L785.5,704.0 L788.8,687.5Z" fill="none" stroke="#775650" stroke-width="1.2" />
<path d="M465.0,569.0 L700.0,572.0 L800.0,574.0" fill="none" stroke="#9ad63a" stroke-width="1.6" />
<path d="M455.0,720.0 L620.0,719.0 L700.0,712.0 L757.0,705.0" fill="none" stroke="#9ad63a" stroke-width="1.4" />
<path d="M1123.8,353.3 L1123.1,365.7 L1125.3,379.3 L1123.8,385.3 L1129.9,397.4 L1132.9,405.0 L1137.4,424.6 L1135.9,433.7 L1142.0,445.8 L1142.7,451.8 L1137.4,465.4 L1138.9,474.5 L1129.9,476.0 L1142.0,485.1 L1142.0,498.7 L1132.9,500.2 L1140.5,507.7 L1129.9,518.3 L1140.5,527.4 L1137.4,535.0 L1151.0,539.5 L1162.8,543.3 L1176.0,546.0 L1176.0,522.0 L1162.4,523.6 L1159.3,507.7 L1161.6,498.7 L1166.1,476.0 L1175.2,460.9 L1179.7,459.4 L1185.8,448.8 L1182.8,441.3 L1170.7,445.8 L1169.2,436.7 L1176.7,426.1 L1164.6,424.6 L1166.1,415.6 L1170.7,403.5 L1160.1,406.5 L1151.0,412.5 L1143.5,403.5 L1137.4,391.4 L1146.5,382.3 L1140.5,377.8 L1137.4,364.2 L1143.5,355.1 L1145.0,353.3 L1140.0,340.0 L1130.0,331.0 L1142.0,318.0 L1166.0,296.0 L1161.0,290.0 L1136.0,309.0 L1117.0,326.0 L1119.0,340.0Z" fill="#b3d4e0" />
<path d="M1109.8,625.0 L1120.0,621.0 L1160.6,616.0 L1178.0,609.5 L1190.0,612.0 L1190.0,645.0 L1184.9,642.7 L1175.0,636.0 L1165.0,632.0 L1143.0,631.6 L1130.0,635.0 L1120.0,632.0Z" fill="#b3d4e0" />
<path d="M1062.0,376.0 L1068.0,380.0 L1075.0,390.0 L1080.0,397.4 L1086.0,400.5 L1090.6,411.0 L1099.6,415.6 L1116.3,420.1 L1125.3,430.7 L1137.4,436.7 L1129.9,433.7 L1114.8,430.7 L1107.2,424.6 L1095.1,418.6 L1086.0,412.5 L1080.0,411.0 L1072.0,398.0 L1064.0,386.0Z" fill="#b3d4e0" />
<path d="M1092.0,438.0 L1101.0,446.0 L1119.0,458.0 L1138.0,467.0" fill="none" stroke="#b3d4e0" stroke-width="5" stroke-linejoin="round"/>
<path d="M1095.0,511.0 L1110.0,516.0 L1131.0,519.0" fill="none" stroke="#b3d4e0" stroke-width="4" />
<path d="M1088.0,510.0 L1104.0,521.0 L1120.0,529.0 L1138.0,535.0" fill="none" stroke="#b3d4e0" stroke-width="5" stroke-linejoin="round"/>
<path d="M1190.0,612.0 L1198.0,640.0 L1201.4,662.0 L1196.0,695.0 L1160.6,710.7 L1140.0,733.0 L1120.8,754.8" fill="none" stroke="#6f7c78" stroke-width="2" stroke-linejoin="round"/>
<path d="M953.0,510.0 L960.0,509.0 L966.0,518.0 L976.0,520.0 L980.0,530.0 L975.0,548.0 L988.0,548.0 L1009.0,555.0 L1009.0,577.5 L976.0,577.5 L976.0,605.0 L971.0,621.0 L960.0,622.0 L995.0,642.0 L960.0,673.0 L940.0,671.0 L926.5,662.0 L913.0,669.0 L900.0,673.0 L892.6,669.0 L894.0,620.0 L897.0,577.5 L918.0,574.0 L927.0,528.0 L944.5,528.0 L948.0,515.0Z" fill="#7891c4" />
<path d="M953.0,510.0 L960.0,509.0 L966.0,518.0 L976.0,520.0 L980.0,530.0 L975.0,548.0 L988.0,548.0 L1009.0,555.0 L1009.0,577.5 L976.0,577.5 L976.0,605.0 L971.0,621.0 L960.0,622.0 L995.0,642.0 L960.0,673.0 L940.0,671.0 L926.5,662.0 L913.0,669.0 L900.0,673.0 L892.6,669.0 L894.0,620.0 L897.0,577.5 L918.0,574.0 L927.0,528.0 L944.5,528.0 L948.0,515.0Z" fill="none" stroke="#4f8af7" stroke-width="4.5" stroke-linejoin="round"/>
<path d="M897.0,577.5 L976.0,577.5" fill="none" stroke="#4f8af7" stroke-width="4" stroke-linecap="round" stroke-linejoin="round"/>
<path d="M895.0,602.0 L955.0,601.0" fill="none" stroke="#4f8af7" stroke-width="4" stroke-linecap="round" stroke-linejoin="round"/>
<path d="M925.7,577.0 L925.7,602.0" fill="none" stroke="#4f8af7" stroke-width="4" stroke-linecap="round" stroke-linejoin="round"/>
<path d="M952.0,577.0 L952.0,610.0 L950.0,622.0" fill="none" stroke="#4f8af7" stroke-width="4" stroke-linecap="round" stroke-linejoin="round"/>
<path d="M914.7,607.0 L914.7,640.0" fill="none" stroke="#4f8af7" stroke-width="4" stroke-linecap="round" stroke-linejoin="round"/>
<path d="M940.0,607.0 L935.7,665.0" fill="none" stroke="#4f8af7" stroke-width="4" stroke-linecap="round" stroke-linejoin="round"/>
<path d="M893.7,640.0 L944.5,640.0" fill="none" stroke="#4f8af7" stroke-width="4" stroke-linecap="round" stroke-linejoin="round"/>
<path d="M948.0,530.0 L960.0,550.0 L964.4,567.6" fill="none" stroke="#4f8af7" stroke-width="4" stroke-linecap="round" stroke-linejoin="round"/>
<path d="M973.8,554.3 L990.0,547.7" fill="none" stroke="#4f8af7" stroke-width="4" stroke-linecap="round" stroke-linejoin="round"/>
<text font-size="18" fill="#3a3a3a" textLength="88.0" lengthAdjust="spacingAndGlyphs" x="199.0" y="229.0" stroke="#fff" stroke-width="3" stroke-opacity="0.7" paint-order="stroke" stroke-linejoin="round">Champaign</text>
<text font-size="18" fill="#3a3a3a" textLength="84.0" lengthAdjust="spacingAndGlyphs" x="368.0" y="235.0" stroke="#fff" stroke-width="3" stroke-opacity="0.7" paint-order="stroke" stroke-linejoin="round">Noblesville</text>
<circle cx="409" cy="242" r="3.2" fill="#f5f2ee" stroke="#666" stroke-width="1.2"/>
<text font-size="18" fill="#3a3a3a" textLength="55.0" lengthAdjust="spacingAndGlyphs" x="519.0" y="264.0" stroke="#fff" stroke-width="3" stroke-opacity="0.7" paint-order="stroke" stroke-linejoin="round">Dayton</text>
<circle cx="546" cy="271" r="3.2" fill="#f5f2ee" stroke="#666" stroke-width="1.2"/>
<text font-size="21" fill="#3a3a3a" textLength="93.0" lengthAdjust="spacingAndGlyphs" x="589.0" y="274.0" stroke="#fff" stroke-width="3" stroke-opacity="0.7" paint-order="stroke" stroke-linejoin="round">Columbus</text>
<circle cx="638" cy="250" r="3.2" fill="#f5f2ee" stroke="#666" stroke-width="1.2"/>
<text font-size="21" fill="#3a3a3a" textLength="92.0" lengthAdjust="spacingAndGlyphs" x="477.0" y="358.0" stroke="#fff" stroke-width="3" stroke-opacity="0.7" paint-order="stroke" stroke-linejoin="round">Cincinnati</text>
<circle cx="523" cy="334" r="3.2" fill="#f5f2ee" stroke="#666" stroke-width="1.2"/>
<text font-size="21" fill="#3a3a3a" textLength="84.0" lengthAdjust="spacingAndGlyphs" x="387.0" y="407.0" stroke="#fff" stroke-width="3" stroke-opacity="0.7" paint-order="stroke" stroke-linejoin="round">Louisville</text>
<circle cx="430" cy="415" r="3.2" fill="#f5f2ee" stroke="#666" stroke-width="1.2"/>
<text font-size="18" fill="#3a3a3a" textLength="63.0" lengthAdjust="spacingAndGlyphs" x="268.0" y="460.0" stroke="#fff" stroke-width="3" stroke-opacity="0.7" paint-order="stroke" stroke-linejoin="round">vansville</text>
<circle cx="294" cy="441" r="3.2" fill="#f5f2ee" stroke="#666" stroke-width="1.2"/>
<text font-size="18" fill="#3a3a3a" textLength="61.0" lengthAdjust="spacingAndGlyphs" x="348.0" y="555.0" stroke="#fff" stroke-width="3" stroke-opacity="0.7" paint-order="stroke" stroke-linejoin="round">Bowling</text>
<circle cx="378" cy="535" r="3.2" fill="#f5f2ee" stroke="#666" stroke-width="1.2"/>
<text font-size="18" fill="#3a3a3a" textLength="47.0" lengthAdjust="spacingAndGlyphs" x="355.0" y="574.0" stroke="#fff" stroke-width="3" stroke-opacity="0.7" paint-order="stroke" stroke-linejoin="round">Green</text>
<text font-size="22" fill="#3a3a3a" textLength="83.0" lengthAdjust="spacingAndGlyphs" x="312.0" y="604.0" stroke="#fff" stroke-width="3" stroke-opacity="0.7" paint-order="stroke" stroke-linejoin="round">Nashville</text>
<circle cx="354" cy="612" r="3.2" fill="#f5f2ee" stroke="#666" stroke-width="1.2"/>
<text font-size="18" fill="#3a3a3a" textLength="100.0" lengthAdjust="spacingAndGlyphs" x="413.0" y="710.0" stroke="#fff" stroke-width="3" stroke-opacity="0.7" paint-order="stroke" stroke-linejoin="round">Chattanooga</text>
<circle cx="463" cy="715" r="3.2" fill="#f5f2ee" stroke="#666" stroke-width="1.2"/>
<text font-size="18" fill="#3a3a3a" textLength="75.0" lengthAdjust="spacingAndGlyphs" x="330.0" y="738.0" stroke="#fff" stroke-width="3" stroke-opacity="0.7" paint-order="stroke" stroke-linejoin="round">Huntsville</text>
<circle cx="367" cy="744" r="3.2" fill="#f5f2ee" stroke="#666" stroke-width="1.2"/>
<text font-size="18" fill="#3a3a3a" textLength="95.0" lengthAdjust="spacingAndGlyphs" x="303.0" y="848.0" stroke="#fff" stroke-width="3" stroke-opacity="0.7" paint-order="stroke" stroke-linejoin="round">Birmingham</text>
<circle cx="352" cy="853" r="3.2" fill="#f5f2ee" stroke="#666" stroke-width="1.2"/>
<text font-size="18" fill="#3a3a3a" textLength="84.0" lengthAdjust="spacingAndGlyphs" x="252.0" y="875.0" stroke="#fff" stroke-width="3" stroke-opacity="0.7" paint-order="stroke" stroke-linejoin="round">Tuscaloosa</text>
<circle cx="294" cy="881" r="3.2" fill="#f5f2ee" stroke="#666" stroke-width="1.2"/>
<text font-size="18" fill="#3a3a3a" textLength="58.0" lengthAdjust="spacingAndGlyphs" x="421.0" y="929.0" stroke="#fff" stroke-width="3" stroke-opacity="0.7" paint-order="stroke" stroke-linejoin="round">Auburn</text>
<text font-size="17" fill="#8d6c9f" font-style="italic" textLength="56.0" lengthAdjust="spacingAndGlyphs" x="370.0" y="274.0" opacity="0.85">Indiana</text>
<text font-size="17" fill="#8d6c9f" font-style="italic" textLength="34.0" lengthAdjust="spacingAndGlyphs" x="640.0" y="216.0" opacity="0.85">Ohio</text>
<text font-size="17" fill="#8d6c9f" font-style="italic" textLength="65.0" lengthAdjust="spacingAndGlyphs" x="474.0" y="463.0" opacity="0.85">Kentucky</text>
<text font-size="17" fill="#8d6c9f" font-style="italic" textLength="73.0" lengthAdjust="spacingAndGlyphs" x="351.0" y="648.0" opacity="0.85">Tennessee</text>
<text font-size="17" fill="#8d6c9f" font-style="italic" textLength="66.0" lengthAdjust="spacingAndGlyphs" x="323.0" y="942.0" opacity="0.85">Alabama</text>
<text font-size="18" fill="#3a3a3a" textLength="82.0" lengthAdjust="spacingAndGlyphs" x="1053.5" y="214.0" stroke="#fff" stroke-width="3" stroke-opacity="0.7" paint-order="stroke" stroke-linejoin="round">Harrisburg</text>
<text font-size="17" fill="#8a4a7a" font-style="italic" textLength="93.0" lengthAdjust="spacingAndGlyphs" x="799.0" y="356.5" opacity="0.85">West Virginia</text>
<text font-size="18" fill="#4a4a4a" textLength="68.0" lengthAdjust="spacingAndGlyphs" x="978.0" y="308.6" >Frederick</text>
<circle cx="1050" cy="303" r="3.2" fill="#f5f2ee" stroke="#666" stroke-width="1.2"/>
<text font-size="23" fill="#4a4a4a" textLength="88.0" lengthAdjust="spacingAndGlyphs" x="1072.0" y="307.5" >Baltimore</text>
<text font-size="18" fill="#4f6a58" textLength="76.0" lengthAdjust="spacingAndGlyphs" x="1130.4" y="352.5" >Annapolis</text>
<text font-size="18" fill="#5a4a55" textLength="86.0" lengthAdjust="spacingAndGlyphs" x="1204.5" y="276.4" >Wilmington</text>
<text font-size="17" fill="#7a5a80" font-style="italic" textLength="80.0" lengthAdjust="spacingAndGlyphs" x="1237.5" y="244.7" opacity="0.85">New Jersey</text>
<text font-size="18" fill="#7a3d6c" textLength="84.0" lengthAdjust="spacingAndGlyphs" x="697.0" y="400.0" >Charleston</text>
<text font-size="18" fill="#7a3d6c" textLength="67.0" lengthAdjust="spacingAndGlyphs" x="832.0" y="503.0" >Roanoke</text>
<text font-size="18" fill="#6f9a2a" textLength="62.0" lengthAdjust="spacingAndGlyphs" x="653.0" y="572.0" >Johnson</text>
<text font-size="18" fill="#6f9a2a" textLength="29.0" lengthAdjust="spacingAndGlyphs" x="670.0" y="592.0" >City</text>
<text font-size="18" fill="#6f7a3a" textLength="90.0" lengthAdjust="spacingAndGlyphs" x="779.0" y="627.0" >Greensboro</text>
<text font-size="18" fill="#6f9a2a" textLength="68.0" lengthAdjust="spacingAndGlyphs" x="533.0" y="651.0" >Knoxville</text>
<text font-size="18" fill="#6f9a2a" textLength="68.0" lengthAdjust="spacingAndGlyphs" x="636.0" y="684.0" >Asheville</text>
<text font-size="18" fill="#5c4a3a" textLength="63.0" lengthAdjust="spacingAndGlyphs" x="786.0" y="677.0" >Concord</text>
<text font-size="23" fill="#3f2f2b" textLength="86.0" lengthAdjust="spacingAndGlyphs" x="755.0" y="727.0" >Charlotte</text>
<text font-size="18" fill="#6f9a2a" textLength="77.0" lengthAdjust="spacingAndGlyphs" x="643.0" y="729.0" >Greenville</text>
<text font-size="18" fill="#6f9a2a" textLength="58.0" lengthAdjust="spacingAndGlyphs" x="505.0" y="804.0" >Roswell</text>
<text font-size="18" fill="#6f9a2a" textLength="53.0" lengthAdjust="spacingAndGlyphs" x="581.0" y="810.0" >Athens</text>
<text font-size="23" fill="#5a8a2a" textLength="65.0" lengthAdjust="spacingAndGlyphs" x="499.0" y="856.0" >Atlanta</text>
<text font-size="18" fill="#3f2f2b" textLength="72.0" lengthAdjust="spacingAndGlyphs" x="747.0" y="806.0" >Columbia</text>
<text font-size="18" fill="#3f2f2b" textLength="63.0" lengthAdjust="spacingAndGlyphs" x="681.0" y="853.0" >Augusta</text>
<text font-size="18" fill="#3f2f2b" textLength="84.0" lengthAdjust="spacingAndGlyphs" x="824.0" y="915.0" stroke="#fff" stroke-width="3" stroke-opacity="0.7" paint-order="stroke" stroke-linejoin="round">Charleston</text>
<text font-size="18" fill="#3f2f2b" textLength="88.0" lengthAdjust="spacingAndGlyphs" x="970.0" y="784.0" stroke="#fff" stroke-width="3" stroke-opacity="0.7" paint-order="stroke" stroke-linejoin="round">Wilmington</text>
<text font-size="18" fill="#3a4442" textLength="88.0" lengthAdjust="spacingAndGlyphs" x="1010.0" y="738.0" >Jacksonville</text>
<text font-size="18" fill="#3a4442" textLength="77.0" lengthAdjust="spacingAndGlyphs" x="1020.0" y="684.0" >Greenville</text>
<text font-size="23" fill="#4a5f9a" textLength="68.0" lengthAdjust="spacingAndGlyphs" x="929.0" y="645.0" >Raleigh</text>
<text font-size="23" fill="#3a4442" textLength="92.0" lengthAdjust="spacingAndGlyphs" x="1007.0" y="509.0" >Richmond</text>
<text font-size="18" fill="#3a4442" textLength="70.0" lengthAdjust="spacingAndGlyphs" x="1056.0" y="540.0" >Hampton</text>
<text font-size="18" fill="#3a4442" textLength="52.0" lengthAdjust="spacingAndGlyphs" x="1057.0" y="569.0" >Suffolk</text>
<text font-size="18" fill="#3a4442" textLength="57.0" lengthAdjust="spacingAndGlyphs" x="1134.0" y="569.0" stroke="#fff" stroke-width="3" stroke-opacity="0.7" paint-order="stroke" stroke-linejoin="round">Virginia</text>
<text font-size="18" fill="#3a4442" textLength="46.0" lengthAdjust="spacingAndGlyphs" x="1140.0" y="588.0" stroke="#fff" stroke-width="3" stroke-opacity="0.7" paint-order="stroke" stroke-linejoin="round">Beach</text>
<text font-size="23" fill="#3a3a3a" textLength="110.0" lengthAdjust="spacingAndGlyphs" x="1028.0" y="380.0" >Washington</text>
<text font-size="17" fill="#8a4a7a" font-style="italic" textLength="56.0" lengthAdjust="spacingAndGlyphs" x="965.0" y="445.0" opacity="0.85">Virginia</text>
<text font-size="17" fill="#6a4a4a" font-style="italic" textLength="108.0" lengthAdjust="spacingAndGlyphs" x="902.0" y="710.0" opacity="0.85">North Carolina</text>
<text font-size="17" fill="#6a4a4a" font-style="italic" textLength="108.0" lengthAdjust="spacingAndGlyphs" x="767.5" y="851.0" opacity="0.85">South Carolina</text>
<text font-size="17" fill="#6a4a4a" font-style="italic" textLength="55.0" lengthAdjust="spacingAndGlyphs" x="589.0" y="931.0" opacity="0.85">Georgia</text>
</g>
<rect x="696.0" y="221.5" width="602.0" height="131.5" fill="#5bcb71" rx="4" opacity="0.66"/>
<g transform="translate(723.5,288) rotate(38)"><rect x="-11" y="-4.300" width="12" height="8.6" rx="4.3" stroke="#fff" stroke-width="3" fill="none"/><rect x="-1" y="-4.300" width="12" height="8.6" rx="4.3" stroke="#fff" stroke-width="3" fill="none"/></g>
<text font-size="23.6" fill="#f3d8e8" font-weight="bold" textLength="335.0" lengthAdjust="spacingAndGlyphs" x="750.5" y="263.0" >Click + to create, - to remove selected</text>
<text font-size="23.6" fill="#f3d8e8" font-weight="bold" textLength="296.0" lengthAdjust="spacingAndGlyphs" x="750.5" y="296.2" >objects, or use Ctrl to draw a new</text>
<text font-size="23.6" fill="#f3d8e8" font-weight="bold" textLength="80.0" lengthAdjust="spacingAndGlyphs" x="750.5" y="328.5" >selection</text>
<clipPath id="wclip"><rect x="745" y="240" width="121" height="33"/><rect x="745" y="273" width="45" height="33"/></clipPath>
<g clip-path="url(#wclip)">
<text font-size="23.6" fill="#ffffff" font-weight="bold" textLength="335.0" lengthAdjust="spacingAndGlyphs" x="750.5" y="263.0" >Click + to create, - to remove selected</text>
<text font-size="23.6" fill="#ffffff" font-weight="bold" textLength="296.0" lengthAdjust="spacingAndGlyphs" x="750.5" y="296.2" >objects, or use Ctrl to draw a new</text>
</g>
<clipPath id="btnclip"><rect x="1117" y="243.4" width="75" height="40.6" rx="4"/><rect x="1208" y="243.4" width="74.1" height="40.6" rx="4"/><rect x="1117" y="291.2" width="165.1" height="40.6" rx="4"/></clipPath>
<rect x="1117.0" y="243.4" width="75.0" height="40.6" fill="#d8d9d8" rx="4" filter="url(#sh2)"/>
<rect x="1208.0" y="243.4" width="74.1" height="40.6" fill="#d8d9d8" rx="4" filter="url(#sh2)"/>
<rect x="1117.0" y="291.2" width="165.1" height="40.6" fill="#d8d9d8" rx="4" filter="url(#sh2)"/>
<g clip-path="url(#btnclip)">
<path d="M1166.0,221.6 L1184.0,221.6 L1197.7,205.8 L1207.6,212.7 L1219.4,221.6 L1298.0,221.6 L1308.0,230.0 L1308.0,274.6 L1296.4,285.4 L1282.1,310.4 L1247.3,348.8 L1238.4,348.8 L1251.8,332.7 L1242.9,324.6 L1224.1,323.8 L1207.1,297.9 L1194.6,292.5 L1194.6,283.6 L1203.6,263.9 L1189.3,262.1 L1178.6,272.9 L1157.1,272.9 L1162.5,252.3 L1166.0,243.4 L1167.0,230.0Z" fill="#f0d2e0" />
<path d="M1314.0,205.0 L1312.0,234.4 L1308.0,274.6 L1296.4,285.4 L1282.1,310.4 L1247.3,348.8 L1238.4,348.8 L1251.8,332.7 L1242.9,324.6 L1224.1,323.8 L1207.1,297.9 L1194.6,292.5 L1195.0,305.0 L1200.0,318.0 L1206.0,333.0 L1206.0,352.7 L1229.6,353.3 L1228.1,362.7 L1231.9,395.9 L1229.6,408.0 L1219.0,436.7 L1208.5,451.8 L1194.9,470.0 L1185.8,491.1 L1175.2,506.2 L1170.7,520.6 L1162.4,523.6 L1162.8,543.3 L1171.6,580.8 L1178.0,609.5 L1182.6,640.0 L1182.6,662.0 L1165.0,673.0 L1156.0,684.0 L1131.9,684.0 L1116.4,671.0 L1096.5,679.7 L1125.2,690.8 L1120.8,699.6 L1087.7,712.9 L1098.7,721.7 L1109.8,723.9 L1125.2,715.0 L1142.9,719.5 L1138.5,728.3 L1120.8,754.8 L1116.4,743.8 L1090.0,746.0 L1076.7,750.4 L1063.4,759.2 L1046.8,770.3 L1032.5,790.2 L1023.7,805.6 L1013.7,822.2 L1006.0,818.9 L990.0,821.0 L970.7,823.3 L953.0,834.3 L937.5,847.6 L924.3,871.9 L915.5,894.0 L908.8,898.4 L900.4,896.2 L882.7,916.0 L868.3,924.9 L862.8,936.3 L850.0,970.0 L700.0,1100.0 L560.0,1180.0 L400.0,1150.0 L186.0,1130.0 L186.0,1362.0 L1775.0,1362.0 L1775.0,205.0Z" fill="#e1ecf2" />
<path d="M1123.8,353.3 L1123.1,365.7 L1125.3,379.3 L1123.8,385.3 L1129.9,397.4 L1132.9,405.0 L1137.4,424.6 L1135.9,433.7 L1142.0,445.8 L1142.7,451.8 L1137.4,465.4 L1138.9,474.5 L1129.9,476.0 L1142.0,485.1 L1142.0,498.7 L1132.9,500.2 L1140.5,507.7 L1129.9,518.3 L1140.5,527.4 L1137.4,535.0 L1151.0,539.5 L1162.8,543.3 L1176.0,546.0 L1176.0,522.0 L1162.4,523.6 L1159.3,507.7 L1161.6,498.7 L1166.1,476.0 L1175.2,460.9 L1179.7,459.4 L1185.8,448.8 L1182.8,441.3 L1170.7,445.8 L1169.2,436.7 L1176.7,426.1 L1164.6,424.6 L1166.1,415.6 L1170.7,403.5 L1160.1,406.5 L1151.0,412.5 L1143.5,403.5 L1137.4,391.4 L1146.5,382.3 L1140.5,377.8 L1137.4,364.2 L1143.5,355.1 L1145.0,353.3 L1140.0,340.0 L1130.0,331.0 L1142.0,318.0 L1166.0,296.0 L1161.0,290.0 L1136.0,309.0 L1117.0,326.0 L1119.0,340.0Z" fill="#e1ecf2" />
<path d="M1097.0,221.6 L1132.6,221.6 L1148.4,215.7 L1164.0,221.6 L1166.0,221.6 L1167.0,230.0 L1166.0,243.4 L1162.5,252.3 L1157.1,272.9 L1178.6,272.9 L1189.3,262.1 L1203.6,263.9 L1194.6,283.6 L1194.6,292.5 L1195.0,305.0 L1200.0,318.0 L1206.0,333.0 L1206.0,352.7 L1229.6,353.3 L1228.1,362.7 L1231.9,395.9 L1229.6,408.0 L1219.0,436.7 L1208.5,451.8 L1194.9,470.0 L1185.8,491.1 L1175.2,506.2 L1170.7,520.6 L1162.4,523.6 L1162.8,543.3 L1171.6,580.8 L1178.0,609.5 L1182.6,640.0 L1182.6,662.0 L1165.0,673.0 L1156.0,684.0 L1131.9,684.0 L1116.4,671.0 L1096.5,679.7 L1125.2,690.8 L1120.8,699.6 L1087.7,712.9 L1098.7,721.7 L1109.8,723.9 L1125.2,715.0 L1142.9,719.5 L1138.5,728.3 L1120.8,754.8 L1116.4,743.8 L1090.0,746.0 L1076.7,750.4 L1063.4,759.2 L1046.8,770.3 L1040.2,754.8 L1035.8,743.8 L1035.8,723.9 L1032.5,717.3 L1030.3,704.0 L1021.5,705.1 L1003.8,697.4 L988.3,691.9 L972.9,694.1 L961.8,673.1 L995.0,642.0 L960.0,622.0 L971.0,621.0 L976.0,605.0 L976.0,577.5 L1009.0,577.5 L1009.0,555.0 L988.0,548.0 L975.0,548.0 L980.0,530.0 L976.0,520.0 L966.0,518.0 L962.9,510.2 L966.2,501.3 L977.3,501.3 L983.9,492.5 L990.5,474.8 L997.2,463.8 L1006.0,448.3 L993.8,430.7 L997.2,425.1 L1014.8,426.2 L1020.3,420.7 L1039.0,402.0 L1045.7,386.5 L1049.8,384.3 L1032.0,358.7 L1049.8,352.7 L1063.6,340.9 L1093.2,329.0 L1073.5,313.3 L1097.0,305.4 L1103.0,273.9 L1089.3,260.0 L1077.4,240.3Z" fill="none" stroke="#c9cccb" stroke-width="1" />
<text font-size="18" fill="#d2b2c6" textLength="86.0" lengthAdjust="spacingAndGlyphs" x="1204.5" y="276.4" >Wilmington</text>
<text font-size="23" fill="#c3c6c4" textLength="88.0" lengthAdjust="spacingAndGlyphs" x="1072.0" y="307.5" >Baltimore</text>
</g>
<path d="M1137.5,250.500 V273.700 M1125.900,262.1 H1149.1" fill="none" stroke="#555a58" stroke-width="6.2" />
<path d="M1216.5,262.1 H1239.300" fill="none" stroke="#69413f" stroke-width="6.2" />
<path d="M1130.800,306.3 L1144.200,319.7 M1144.200,306.3 L1130.800,319.7" fill="none" stroke="#5a6964" stroke-width="6.2" />
<text font-size="24" fill="#6e666b" textLength="60.7" lengthAdjust="spacingAndGlyphs" x="1185.3" y="320.6" >Cancel</text>
<circle cx="242" cy="254.500" r="32.7" fill="#5bc870" filter="url(#sh)"/>
<path d="M231.0,247.5 L253.0,247.5 L242.0,266.5Z" fill="#fff" />
<circle cx="240.5" cy="329" r="24.5" fill="#fff" filter="url(#sh)"/>
<circle cx="240.5" cy="394.7" r="24.5" fill="#fff" filter="url(#sh)"/>
<circle cx="240.5" cy="460.4" r="24.5" fill="#fff" filter="url(#sh)"/>
<circle cx="240.5" cy="526" r="24.5" fill="#fff" filter="url(#sh)"/>
<circle cx="240.5" cy="591.8" r="24.5" fill="#fff" filter="url(#sh)"/>
<circle cx="240.5" cy="657.5" r="24.5" fill="#fff" filter="url(#sh)"/>
<circle cx="240.5" cy="723.2" r="24.5" fill="#fff" filter="url(#sh)"/>
<circle cx="240.5" cy="789" r="24.5" fill="#fff" filter="url(#sh)"/>
<path d="M240.5,315.0 L256.0,322.5 L240.5,330.0 L225.0,322.5Z" fill="#333" />
<path d="M225.5,329.5 L240.5,336.5 L255.5,329.5" fill="none" stroke="#4fc36a" stroke-width="3" />
<path d="M224.5,335.5 L240.5,343.5 L256.5,335.5" fill="none" stroke="#333" stroke-width="3.2" />
<ellipse cx="233.5" cy="382.7" rx="11" ry="4.5" fill="#333"/>
<path d="M222.5,385.7 V403.7 Q222.5,408.7 233.5,408.7 V389.7 Q224.5,389.7 222.5,385.7Z" fill="#333" />
<line x1="222.5" y1="393.2" x2="234.5" y2="393.2" stroke="#fff" stroke-width="1.8" />
<line x1="222.5" y1="400.2" x2="234.5" y2="400.2" stroke="#fff" stroke-width="1.8" />
<circle cx="245.5" cy="399.7" r="11.5" fill="#fff" stroke="#4fc36a" stroke-width="2"/>
<ellipse cx="245.5" cy="399.7" rx="5" ry="11.5" fill="none" stroke="#4fc36a" stroke-width="1.7"/>
<line x1="234.0" y1="399.7" x2="257.0" y2="399.7" stroke="#4fc36a" stroke-width="1.7" />
<line x1="245.5" y1="388.2" x2="245.5" y2="411.2" stroke="#4fc36a" stroke-width="1.7" />
<path d="M236.5,393.2 H254.5 M236.5,406.2 H254.5" fill="none" stroke="#4fc36a" stroke-width="1.5" />
<circle cx="241.5" cy="447.9" r="3.3" fill="#333"/>
<path d="M241.5,452.4 L239.5,462.4 L244.5,472.4 M239.5,462.4 L234.5,472.4 M240.5,454.4 L234.5,459.4 M241.5,454.4 L246.5,459.4" fill="none" stroke="#333" stroke-width="3.2" stroke-linecap="round" stroke-linejoin="round"/>
<path d="M227.5,475.4 l3,-6 h4 l-3,6Z" fill="#4fc36a" />
<path d="M234.5,475.4 l3,-6 h4 l-3,6Z" fill="#4fc36a" />
<path d="M242.5,475.4 l3,-6 h4 l-3,6Z" fill="#4fc36a" />
<path d="M249.5,475.4 l3,-6 h4 l-3,6Z" fill="#4fc36a" />
<path d="M226.5,509 L248.5,512 L255.5,516 L253.5,538 L234.5,541 L226.5,534Z" fill="#fff" stroke="#4fc36a" stroke-width="2.6" stroke-linejoin="round"/>
<line x1="230.5" y1="515.0" x2="250.5" y2="517.0" stroke="#4fc36a" stroke-width="1.8" />
<line x1="230.5" y1="519.5" x2="250.5" y2="521.5" stroke="#4fc36a" stroke-width="1.8" />
<line x1="230.5" y1="524.0" x2="250.5" y2="526.0" stroke="#4fc36a" stroke-width="1.8" />
<line x1="230.5" y1="528.5" x2="250.5" y2="530.5" stroke="#4fc36a" stroke-width="1.8" />
<line x1="230.5" y1="533.0" x2="250.5" y2="535.0" stroke="#4fc36a" stroke-width="1.8" />
<path d="M238.5,526 L256.5,534 L249.5,536 L253.5,543 L249.5,545 L245.5,538 L240.5,543Z" fill="#333" stroke="#fff" stroke-width="1" />
<path d="M225.5,599.8 L231.5,580.8 L237.5,585.8 L243.5,580.8 L249.5,585.8 L255.5,599.8 L248.5,603.8 L243.5,597.8 L237.5,603.8 L232.5,597.8Z" fill="#fff" stroke="#333" stroke-width="2.4" stroke-linejoin="round"/>
<path d="M231.5,580.8 L232.5,597.8 M237.5,585.8 V603.8 M243.5,580.8 V597.8 M249.5,585.8 L248.5,603.8" fill="none" stroke="#333" stroke-width="1.8" />
<path d="M236.5,589.8 L243.5,594.8 M244.5,588.8 L248.5,594.8" fill="none" stroke="#4fc36a" stroke-width="1.6" />
<rect x="225.5" y="646.5" width="31.0" height="23.0" fill="#333" rx="1" />
<rect x="227.5" y="648.0" width="3.5" height="3.0" fill="#fff" />
<rect x="227.5" y="664.5" width="3.5" height="3.0" fill="#fff" />
<rect x="233.5" y="648.0" width="3.5" height="3.0" fill="#fff" />
<rect x="233.5" y="664.5" width="3.5" height="3.0" fill="#fff" />
<rect x="239.5" y="648.0" width="3.5" height="3.0" fill="#fff" />
<rect x="239.5" y="664.5" width="3.5" height="3.0" fill="#fff" />
<rect x="245.5" y="648.0" width="3.5" height="3.0" fill="#fff" />
<rect x="245.5" y="664.5" width="3.5" height="3.0" fill="#fff" />
<rect x="251.5" y="648.0" width="3.5" height="3.0" fill="#fff" />
<rect x="251.5" y="664.5" width="3.5" height="3.0" fill="#fff" />
<path d="M232.5,662.5 L234.5,656.5 L246.5,649.5 L250.5,654.5 L238.5,661.5Z" fill="#4fc36a" />
<path d="M239.5,704.7 L246.0,708.5 L246.0,716.0 L239.5,719.7 L233.0,716.0 L233.0,708.5Z" fill="none" stroke="#333" stroke-width="2" />
<path d="M231.5,719.7 L238.0,723.5 L238.0,731.0 L231.5,734.7 L225.0,731.0 L225.0,723.5Z" fill="none" stroke="#333" stroke-width="2" />
<path d="M247.5,718.7 L254.9,723.0 L254.9,731.5 L247.5,735.7 L240.1,731.5 L240.1,723.0Z" fill="#4fc36a" />
<path d="M247.5,723.2 L251.0,725.2 L251.0,729.2 L247.5,731.2 L244.0,729.2 L244.0,725.2Z" fill="#fff" />
<path d="M247.5,724.2 L250.1,725.7 L250.1,728.7 L247.5,730.2 L244.9,728.7 L244.9,725.7Z" fill="#4fc36a" />
<path d="M228.5,801 L244.5,785" fill="none" stroke="#4fc36a" stroke-width="5.5" stroke-linecap="round"/>
<path d="M242.5,787 L253.5,776" fill="none" stroke="#333" stroke-width="4" stroke-linecap="round"/>
<path d="M228.5,777 L250.5,799" fill="none" stroke="#333" stroke-width="4.5" stroke-linecap="round"/>
<circle cx="228.5" cy="777" r="5" fill="#333"/><circle cx="226.0" cy="774.5" r="2.6" fill="#fff"/>
<circle cx="251.5" cy="800" r="5" fill="#333"/><circle cx="254.0" cy="802.5" r="2.6" fill="#fff"/>
<circle cx="1720" cy="254.200" r="33" fill="#fff" filter="url(#sh)"/>
<circle cx="1715.500" cy="253" r="8.2" fill="none" stroke="#333" stroke-width="2.8"/>
<path d="M1722,259.500 L1731.500,265.500" fill="none" stroke="#333" stroke-width="4.6" stroke-linecap="round"/>
<path d="M1711,252.500 Q1711.500,249 1715,248.300" fill="none" stroke="#4fc36a" stroke-width="1.5" />
<rect x="1313.5" y="304.0" width="445.5" height="81.5" fill="#fff" rx="32" filter="url(#sh3)"/>
<line x1="1314.0" y1="370.0" x2="1759.0" y2="370.0" stroke="#e4e4e4" stroke-width="1.2" />
<text font-size="24" fill="#3a3a3a" textLength="65.0" lengthAdjust="spacingAndGlyphs" x="1384.5" y="344.0" >Legend</text>
<path d="M1330,344 L1336,324 L1343,330 L1350,324 L1362,344 L1354,347 L1346,340 L1338,347Z" fill="#fff" stroke="#444" stroke-width="2.2" stroke-linejoin="round"/>
<path d="M1338,347 V331 M1354,347 V331" fill="none" stroke="#444" stroke-width="1.8" />
<circle cx="1346" cy="326.500" r="7" fill="#4fc36a"/>
<text font-size="10.5" fill="#fff" font-weight="bold" x="1344.6" y="330.5" >i</text>
<rect x="1710.0" y="1050.7" width="50.0" height="49.5" fill="#f4f5f5" rx="8" filter="url(#sh2)"/>
<rect x="1710.0" y="1116.7" width="50.0" height="49.0" fill="#f4f5f5" rx="8" filter="url(#sh2)"/>
<rect x="1710.0" y="1182.4" width="50.0" height="98.6" fill="#f4f5f5" rx="8" filter="url(#sh2)"/>
<line x1="1710.0" y1="1231.5" x2="1760.0" y2="1231.5" stroke="#d0d0d0" stroke-width="1" />
<path d="M1728.500,1073.500 A7,7 0 0 1 1741,1071 M1741.500,1077.500 A7,7 0 0 1 1729,1080" fill="none" stroke="#111" stroke-width="2.8" />
<path d="M1743.5,1067.0 L1743.5,1074.5 L1736.0,1074.5Z" fill="#111" />
<path d="M1726.5,1084.0 L1726.5,1076.5 L1734.0,1076.5Z" fill="#111" />
<path d="M1730,1146 L1740.500,1135.500" fill="none" stroke="#111" stroke-width="2.6" />
<path d="M1736.0,1133.0 L1743.0,1133.0 L1743.0,1140.0Z" fill="#111" />
<path d="M1727.5,1141.5 L1727.5,1148.5 L1734.5,1148.5Z" fill="#111" />
<path d="M1735.500,1197 V1216 M1726,1206.500 H1745" fill="none" stroke="#111" stroke-width="3.6" />
<path d="M1727.500,1254.5 H1744" fill="none" stroke="#111" stroke-width="3.6" />
<rect x="1702.0" y="1298.0" width="57.0" height="27.0" fill="#dce9ee" opacity="0.85"/>
<path d="M1757.5,1298 V1323.500 H1702" fill="none" stroke="#777" stroke-width="3" />
<rect x="1702.0" y="1334.0" width="73.0" height="28.0" fill="#e2eff3" opacity="0.9"/>
<text font-size="18" fill="#333" textLength="65.0" lengthAdjust="spacingAndGlyphs" x="1703.0" y="1353.3" >tributors</text>
<g clip-path="url(#mapclip)"><rect x="215" y="985" width="1480" height="420" fill="#1c3a48" opacity="0.45" filter="url(#bigsh)"/></g>
<rect x="203.5" y="936.0" width="1499.0" height="425.0" fill="#ffffff" filter="url(#sh)"/>
<rect x="203.5" y="936.0" width="1499.0" height="17.0" fill="#5bca70" />
<line x1="936.0" y1="942.0" x2="968.5" y2="942.0" stroke="#d9f3de" stroke-width="1.5" />
<line x1="936.0" y1="946.5" x2="968.5" y2="946.5" stroke="#d9f3de" stroke-width="1.5" />
<rect x="203.5" y="953.0" width="1499.0" height="39.0" fill="#fff" />
<linearGradient id="hsh" x1="0" y1="0" x2="0" y2="1"><stop offset="0" stop-color="#000" stop-opacity="0.16"/><stop offset="1" stop-color="#000" stop-opacity="0"/></linearGradient>
<rect x="203.5" y="992.0" width="1499.0" height="7.0" fill="url(#hsh)" />
<text font-size="24" fill="#3d3d3d" textLength="106.5" lengthAdjust="spacingAndGlyphs" x="211.5" y="980.0" >4 Territories</text>
<line x1="327.5" y1="955.0" x2="327.5" y2="990.0" stroke="#555" stroke-width="1.2" />
<text font-size="24" fill="#3d3d3d" textLength="96.0" lengthAdjust="spacingAndGlyphs" x="335.0" y="980.0" >SALESREP</text>
<line x1="327.0" y1="988.0" x2="446.0" y2="988.0" stroke="#444" stroke-width="1.4" />
<path d="M466,960 V982 M455,971 H477" fill="none" stroke="#3d3d3d" stroke-width="3" />
<text font-size="24" fill="#3d3d3d" textLength="25.0" lengthAdjust="spacingAndGlyphs" x="1588.0" y="980.0" >P0</text>
<path d="M1635,967.500 L1642.500,975 L1650,967.5" fill="none" stroke="#3d3d3d" stroke-width="4" />
<path d="M1677,964.5 L1688,975.5 M1688,964.5 L1677,975.5" fill="none" stroke="#3d3d3d" stroke-width="3.6" />
<rect x="203.5" y="999.0" width="16.0" height="296.0" fill="#fafafa" />
<line x1="219.5" y1="999.0" x2="219.5" y2="1295.0" stroke="#e9e9e9" stroke-width="1" />
<path d="M207.5,1144.0 L214.5,1134.0 L214.5,1154.0Z" fill="#444" />
<rect x="227.3" y="1017.5" width="49.7" height="49.0" fill="#fff" rx="3" filter="url(#sh2)"/>
<rect x="349.4" y="1017.5" width="49.7" height="49.0" fill="#fff" rx="3" filter="url(#sh2)"/>
<rect x="433.8" y="1017.5" width="49.7" height="49.0" fill="#fff" rx="3" filter="url(#sh2)"/>
<rect x="494.0" y="1017.5" width="49.7" height="49.0" fill="#fff" rx="3" filter="url(#sh2)"/>
<rect x="579.0" y="1017.5" width="49.7" height="49.0" fill="#fff" rx="3" filter="url(#sh2)"/>
<rect x="289.5" y="1017.5" width="49.0" height="49.0" fill="#5bca70" rx="2" />
<rect x="1037.8" y="1018.0" width="49.6" height="48.5" fill="#fff" rx="3" filter="url(#sh2)"/>
<path d="M245,1055 L240,1046 Q238,1042 241,1041 Q243.500,1040.500 245.500,1044 L247,1046.500 V1030 Q247,1027 249.500,1027 Q252,1027 252,1030 V1040 Q252,1038 254.5,1038 Q257,1038 257,1041 Q257,1039.500 259.500,1039.5 Q262,1039.500 262,1042.500 Q262,1041.5 264,1041.500 Q266,1041.500 266,1044.500 V1051 Q266,1055 263,1058 H248 Q246,1057 245,1055Z" fill="#fff" stroke="#222" stroke-width="1.8" stroke-linejoin="round"/>
<path d="M252,1046 V1053 M256.5,1046 V1053 M261,1046 V1053" fill="none" stroke="#222" stroke-width="1.3" />
<path d="M303,1033 Q308,1026 316,1030 Q322,1036 329,1036 Q335,1040 331,1046 Q325,1050 318,1047 Q312,1052 305,1051 Q298,1048 300,1041Z" fill="none" stroke="#fff" stroke-width="2.6" stroke-linejoin="round"/>
<line x1="303.0" y1="1040.0" x2="310.0" y2="1031.0" stroke="#fff" stroke-width="1.6" />
<line x1="303.0" y1="1047.0" x2="315.0" y2="1032.0" stroke="#fff" stroke-width="1.6" />
<line x1="308.0" y1="1049.0" x2="320.0" y2="1036.0" stroke="#fff" stroke-width="1.6" />
<line x1="314.0" y1="1049.0" x2="326.0" y2="1037.0" stroke="#fff" stroke-width="1.6" />
<line x1="321.0" y1="1048.0" x2="331.0" y2="1039.0" stroke="#fff" stroke-width="1.6" />
<path d="M372.5,1031.5 L391.5,1031.5 L374.3,1052.7 L358.5,1052.7Z" fill="#fff" stroke="#444" stroke-width="2.2" stroke-linejoin="round"/>
<path d="M372.5,1031.5 L391.5,1031.5 L381.0,1044.4 L364.6,1044.4Z" fill="#444" stroke="#444" stroke-width="2.2" stroke-linejoin="round"/>
<path d="M447.500,1036 A12,12 0 1 1 449.500,1050.500" fill="none" stroke="#b5b5b5" stroke-width="4.6" />
<path d="M443.5,1029.0 L443.5,1041.5 L456.0,1041.5Z" fill="#b5b5b5" />
<path d="M529.500,1036 A12,12 0 1 0 527.500,1050.500" fill="none" stroke="#b5b5b5" stroke-width="4.6" />
<path d="M533.5,1029.0 L533.5,1041.5 L521.0,1041.5Z" fill="#b5b5b5" />
<path d="M590.0,1031.0 L618.0,1031.0 L607.5,1043.0 L607.5,1056.0 L600.5,1051.0 L600.5,1043.0Z" fill="#333" />
<text font-size="23" fill="#cfcfcf" textLength="72.5" lengthAdjust="spacingAndGlyphs" x="686.0" y="1048.6" >Search</text>
<line x1="686.0" y1="1067.5" x2="1014.7" y2="1067.5" stroke="#888" stroke-width="1.3" />
<path d="M1046,1028 V1055.500 H1080" fill="none" stroke="#333" stroke-width="2.4" />
<rect x="1051.5" y="1043.0" width="4.6" height="8.0" fill="#333" />
<rect x="1058.5" y="1036.0" width="4.6" height="15.0" fill="#333" />
<rect x="1065.5" y="1040.0" width="4.6" height="11.0" fill="#333" />
<rect x="1072.5" y="1030.0" width="4.6" height="21.0" fill="#333" />
<rect x="220.5" y="1092.5" width="1440.0" height="56.2" fill="#dedede" />
<rect x="220.5" y="1149.0" width="1440.0" height="4.0" fill="url(#hsh)" opacity="0.6"/>
<line x1="220.5" y1="1148.8" x2="1660.5" y2="1148.8" stroke="#8f8f8f" stroke-width="1.4" />
<line x1="741.0" y1="1092.5" x2="741.0" y2="1148.0" stroke="#d2d2d2" stroke-width="1.2" />
<line x1="741.0" y1="1150.0" x2="741.0" y2="1286.0" stroke="#dcdcdc" stroke-width="1.2" />
<line x1="1009.7" y1="1092.5" x2="1009.7" y2="1148.0" stroke="#d2d2d2" stroke-width="1.2" />
<line x1="1009.7" y1="1150.0" x2="1009.7" y2="1286.0" stroke="#dcdcdc" stroke-width="1.2" />
<line x1="1282.5" y1="1092.5" x2="1282.5" y2="1148.0" stroke="#d2d2d2" stroke-width="1.2" />
<line x1="1282.5" y1="1150.0" x2="1282.5" y2="1286.0" stroke="#dcdcdc" stroke-width="1.2" />
<path d="M228.6,1122.3 Q244.6,1105.3 260.6,1122.3 Q244.6,1137.3 228.6,1122.3Z" fill="#fff" stroke="#3a3a3a" stroke-width="2.6" stroke-linejoin="round"/>
<circle cx="244.6" cy="1121.8" r="7.6" fill="#3a3a3a"/>
<path d="M240.1,1121.3 Q240.6,1117.3 244.6,1116.8" fill="none" stroke="#fff" stroke-width="1.6" />
<text font-size="22" fill="#3d3d3d" font-weight="bold" textLength="52.0" lengthAdjust="spacingAndGlyphs" x="277.4" y="1129.0" >Name</text>
<text font-size="22" fill="#3d3d3d" font-weight="bold" textLength="76.5" lengthAdjust="spacingAndGlyphs" x="778.8" y="1129.0" >% Target</text>
<text font-size="22" fill="#3d3d3d" font-weight="bold" textLength="79.0" lengthAdjust="spacingAndGlyphs" x="1047.2" y="1129.0" >Turnover</text>
<text font-size="22" fill="#3d3d3d" font-weight="bold" textLength="155.0" lengthAdjust="spacingAndGlyphs" x="1319.7" y="1129.0" >Turnover (Target)</text>
<path d="M370.0,1118.9 L387.0,1118.9 L378.5,1109.4Z" fill="#fff" />
<path d="M370.0,1123.9 L387.0,1123.9 L378.5,1133.4Z" fill="#fff" />
<path d="M896.3,1118.9 L913.3,1118.9 L904.8,1109.4Z" fill="#fff" />
<path d="M896.3,1123.9 L913.3,1123.9 L904.8,1133.4Z" fill="#fff" />
<path d="M1167.1,1118.9 L1184.1,1118.9 L1175.6,1109.4Z" fill="#fff" />
<path d="M1167.1,1123.9 L1184.1,1123.9 L1175.6,1133.4Z" fill="#fff" />
<path d="M1515.3,1118.9 L1532.3,1118.9 L1523.8,1109.4Z" fill="#fff" />
<path d="M1515.3,1123.9 L1532.3,1123.9 L1523.8,1133.4Z" fill="#fff" />
<rect x="699.3" y="1100.7" width="23.5" height="23.5" fill="#dedede" stroke="#4a4a4a" stroke-width="2.6"/>
<rect x="742.0" y="1170.0" width="267.0" height="63.0" fill="#fdfcfb" />
<line x1="220.5" y1="1169.4" x2="1660.5" y2="1169.4" stroke="#dedede" stroke-width="1.2" />
<line x1="220.5" y1="1233.2" x2="1660.5" y2="1233.2" stroke="#dedede" stroke-width="1.2" />
<clipPath id="rowclip"><rect x="220" y="1148" width="60" height="10"/></clipPath>
<g clip-path="url(#rowclip)">
<path d="M229.3,1140 Q245.3,1123 261.3,1140 Q245.3,1155 229.3,1140Z" fill="#fff" stroke="#3a3a3a" stroke-width="2.6" stroke-linejoin="round"/>
<circle cx="245.3" cy="1139.5" r="7.6" fill="#3a3a3a"/>
<path d="M240.8,1139 Q241.3,1135 245.3,1134.5" fill="none" stroke="#fff" stroke-width="1.6" />
</g>
<path d="M229.3,1203 Q245.3,1186 261.3,1203 Q245.3,1218 229.3,1203Z" fill="#fff" stroke="#3a3a3a" stroke-width="2.6" stroke-linejoin="round"/>
<circle cx="245.3" cy="1202.5" r="7.6" fill="#3a3a3a"/>
<path d="M240.8,1202 Q241.3,1198 245.3,1197.5" fill="none" stroke="#fff" stroke-width="1.6" />
<path d="M229.3,1267.3 Q245.3,1250.3 261.3,1267.3 Q245.3,1282.3 229.3,1267.3Z" fill="#fff" stroke="#3a3a3a" stroke-width="2.6" stroke-linejoin="round"/>
<circle cx="245.3" cy="1266.8" r="7.6" fill="#3a3a3a"/>
<path d="M240.8,1266.3 Q241.3,1262.3 245.3,1261.8" fill="none" stroke="#fff" stroke-width="1.6" />
<path d="M292.7,1176.5 L307.9,1184.4 L307.9,1200.2 L292.7,1208.1 L277.5,1200.2 L277.5,1184.4Z" fill="#a82a86" />
<path d="M292.7,1240.2 L307.9,1248.1 L307.9,1263.9 L292.7,1271.8 L277.5,1263.9 L277.5,1248.1Z" fill="#3f86cf" />
<text font-size="20.5" fill="#3d3d3d" textLength="35.5" lengthAdjust="spacingAndGlyphs" x="321.2" y="1199.5" stroke="#3d3d3d" stroke-width="0.35">Kate</text>
<text font-size="20.5" fill="#3d3d3d" textLength="56.5" lengthAdjust="spacingAndGlyphs" x="321.2" y="1263.3" stroke="#3d3d3d" stroke-width="0.35">Marcus</text>
<text font-size="20.5" fill="#3d3d3d" textLength="43.0" lengthAdjust="spacingAndGlyphs" x="958.3" y="1209.3" stroke="#3d3d3d" stroke-width="0.35">86.55</text>
<text font-size="20.5" fill="#3d3d3d" textLength="61.5" lengthAdjust="spacingAndGlyphs" x="1211.9" y="1209.3" stroke="#3d3d3d" stroke-width="0.35">164,627</text>
<text font-size="20.5" fill="#3d3d3d" textLength="60.0" lengthAdjust="spacingAndGlyphs" x="1591.5" y="1209.3" stroke="#3d3d3d" stroke-width="0.35">185,431</text>
<text font-size="20.5" fill="#3d3d3d" textLength="52.5" lengthAdjust="spacingAndGlyphs" x="948.8" y="1272.3" stroke="#3d3d3d" stroke-width="0.35">85.364</text>
<text font-size="20.5" fill="#3d3d3d" textLength="61.5" lengthAdjust="spacingAndGlyphs" x="1211.9" y="1272.3" stroke="#3d3d3d" stroke-width="0.35">132,566</text>
<text font-size="20.5" fill="#3d3d3d" textLength="61.0" lengthAdjust="spacingAndGlyphs" x="1591.5" y="1272.3" stroke="#3d3d3d" stroke-width="0.35">148,859</text>
<rect x="219.5" y="1291.5" width="1483.0" height="4.5" fill="#f6f6f6" />
<rect x="1674.0" y="1092.6" width="12.7" height="193.4" fill="#ededed" rx="6" />
<rect x="1674.0" y="1173.7" width="12.7" height="106.6" fill="#8a8a8a" />
<rect x="211.6" y="1304.3" width="333.1" height="49.2" fill="#f2f2f2" rx="6" />
<rect x="561.8" y="1304.3" width="360.0" height="49.2" fill="#f2f2f2" rx="6" />
<rect x="938.0" y="1304.3" width="336.0" height="49.2" fill="#f2f2f2" rx="6" />
<rect x="1290.9" y="1304.3" width="402.5" height="49.2" fill="#f2f2f2" rx="6" />
<circle cx="343.5" cy="1328.500" r="9.5" fill="#adadad"/>
<text font-size="15" fill="#f2f2f2" font-weight="bold" x="341.3" y="1334.0" style="font-family:&quot;Liberation Serif&quot;,serif">i</text>
<text font-size="24" fill="#adadad" textLength="51.5" lengthAdjust="spacingAndGlyphs" x="370.6" y="1337.2" stroke="#adadad" stroke-width="0.4">Detail</text>
<line x1="685.0" y1="1319.5" x2="702.0" y2="1336.5" stroke="#adadad" stroke-width="3.2" />
<line x1="702.0" y1="1319.5" x2="685.0" y2="1336.5" stroke="#adadad" stroke-width="3.2" />
<path d="M683.5,1318.0 L691.5,1318.0 L683.5,1326.0Z" fill="#adadad" />
<path d="M703.5,1318.0 L695.5,1318.0 L703.5,1326.0Z" fill="#adadad" />
<path d="M683.5,1338.0 L691.5,1338.0 L683.5,1330.0Z" fill="#adadad" />
<path d="M703.5,1338.0 L695.5,1338.0 L703.5,1330.0Z" fill="#adadad" />
<text font-size="24" fill="#adadad" textLength="78.0" lengthAdjust="spacingAndGlyphs" x="720.5" y="1337.2" stroke="#adadad" stroke-width="0.4">Zoom on</text>
<path d="M1061.500,1323 V1337 Q1061.500,1339.500 1064,1339.5 H1074 Q1076.5,1339.500 1076.5,1337 V1323" fill="none" stroke="#adadad" stroke-width="1.8" />
<path d="M1059,1322 H1079 M1065.500,1321.500 V1319 H1072.500 V1321.500 M1065.500,1326 V1336 M1069,1326 V1336 M1072.500,1326 V1336" fill="none" stroke="#adadad" stroke-width="1.6" />
<text font-size="24" fill="#adadad" textLength="56.0" lengthAdjust="spacingAndGlyphs" x="1095.8" y="1337.2" stroke="#adadad" stroke-width="0.4">Delete</text>
<path d="M1424,1322 H1417.500 Q1414.500,1322 1414.500,1325 V1334.500 Q1414.500,1337.5 1417.500,1337.500 H1430 Q1433,1337.500 1433,1334.500 V1332" fill="none" stroke="#444" stroke-width="2.4" />
<path d="M1420.500,1332.500 Q1421,1322.500 1429.500,1322.500 V1318 L1437.500,1325 L1429.500,1332 V1327.500 Q1423.500,1327.500 1420.500,1332.500Z" fill="#444" />
<text font-size="24" fill="#444" textLength="87.5" lengthAdjust="spacingAndGlyphs" x="1451.8" y="1337.2" >Export (4)</text>
<line x1="1639.5" y1="1312.0" x2="1639.5" y2="1344.0" stroke="#444" stroke-width="1.3" />
<path d="M1655.5,1333.0 L1668.5,1333.0 L1662.0,1325.5Z" fill="#333" />
<text font-size="47.5" fill="#60a5fb" font-weight="bold" textLength="324.5" lengthAdjust="spacingAndGlyphs" x="1875.9" y="262.8" >Sales Territories</text>
<text font-size="47.5" fill="#60a5fb" font-weight="bold" textLength="271.8" lengthAdjust="spacingAndGlyphs" x="1902.7" y="320.8" >Management</text>
<text font-size="23.5" fill="#252423" textLength="92.3" lengthAdjust="spacingAndGlyphs" x="1804.0" y="419.1" >Salesrep</text>
<rect x="1804.5" y="438.6" width="24.0" height="23.5" fill="#fff" stroke="#7a7672" stroke-width="2"/>
<text font-size="26.5" fill="#252423" textLength="94.5" lengthAdjust="spacingAndGlyphs" x="1844.3" y="459.8" >Amanda</text>
<rect x="1804.5" y="486.5" width="24.0" height="23.5" fill="#fff" stroke="#7a7672" stroke-width="2"/>
<text font-size="26.5" fill="#252423" textLength="52.7" lengthAdjust="spacingAndGlyphs" x="1844.3" y="507.7" >John</text>
<rect x="1804.5" y="533.3" width="24.0" height="23.5" fill="#fff" stroke="#7a7672" stroke-width="2"/>
<text font-size="26.5" fill="#252423" textLength="49.2" lengthAdjust="spacingAndGlyphs" x="1844.3" y="555.8" >Kate</text>
<rect x="1804.5" y="582.3" width="24.0" height="23.5" fill="#fff" stroke="#7a7672" stroke-width="2"/>
<text font-size="26.5" fill="#252423" textLength="82.4" lengthAdjust="spacingAndGlyphs" x="1844.3" y="603.0" >Marcus</text>
<text font-size="29" fill="#252423" textLength="355.3" lengthAdjust="spacingAndGlyphs" x="1790.9" y="691.6" >Sum of Turnover by Salesrep</text>
<path d="M1975,1034 L1975.00,935.00 A99,99 0 0 1 2063.58,1078.22Z" fill="#4a8cfb" />
<path d="M1975,1034 L2063.58,1078.22 A99,99 0 0 1 1922.16,1117.72Z" fill="#21219c" />
<path d="M1975,1034 L1922.16,1117.72 A99,99 0 0 1 1881.58,1001.23Z" fill="#d96c38" />
<path d="M1975,1034 L1881.58,1001.23 A99,99 0 0 1 1975.00,935.00Z" fill="#640078" />
<text font-size="18.5" fill="#605e5c" textLength="43.5" lengthAdjust="spacingAndGlyphs" x="2056.0" y="931.2" >200K</text>
<text font-size="18.5" fill="#605e5c" textLength="74.0" lengthAdjust="spacingAndGlyphs" x="2056.0" y="957.6" >(32.37%)</text>
<text font-size="18.5" fill="#605e5c" textLength="42.5" lengthAdjust="spacingAndGlyphs" x="1872.3" y="922.6" >122K</text>
<text font-size="18.5" fill="#605e5c" textLength="74.0" lengthAdjust="spacingAndGlyphs" x="1840.8" y="948.3" >(19.63%)</text>
<text font-size="18.5" fill="#605e5c" textLength="55.0" lengthAdjust="spacingAndGlyphs" x="1806.2" y="1111.7" >1... (...)</text>
<text font-size="18.5" fill="#605e5c" textLength="41.5" lengthAdjust="spacingAndGlyphs" x="1890.8" y="1138.3" >165K</text>
<text font-size="18.5" fill="#605e5c" textLength="73.5" lengthAdjust="spacingAndGlyphs" x="1858.8" y="1164.7" >(26.59%)</text>
<path d="M2024.5,945.2 L2029.0,936.6 L2049.5,936.6" fill="none" stroke="#b3b0ad" stroke-width="1.3" />
<path d="M1921.3,927.7 L1941.6,927.7 L1944.6,937.5" fill="none" stroke="#b3b0ad" stroke-width="1.3" />
<path d="M1867.6,1102.8 L1887.9,1102.8 L1896.0,1097.2" fill="none" stroke="#b3b0ad" stroke-width="1.3" />
<path d="M1939.3,1144.1 L1959.0,1144.1 L1960.3,1133.6" fill="none" stroke="#b3b0ad" stroke-width="1.3" />
<text font-size="20.5" fill="#605e5c" font-weight="bold" textLength="85.0" lengthAdjust="spacingAndGlyphs" x="2159.4" y="960.0" >Salesrep</text>
<circle cx="2168.5" cy="987.2" r="8" fill="#4a8cfb"/>
<text font-size="21" fill="#605e5c" textLength="44.5" lengthAdjust="spacingAndGlyphs" x="2181.4" y="994.3" >John</text>
<circle cx="2168.5" cy="1028.6" r="8" fill="#21219c"/>
<text font-size="21" fill="#605e5c" textLength="41.5" lengthAdjust="spacingAndGlyphs" x="2181.4" y="1035.6" >Kate</text>
<circle cx="2168.5" cy="1070" r="8" fill="#d96c38"/>
<text font-size="21" fill="#605e5c" textLength="69.0" lengthAdjust="spacingAndGlyphs" x="2181.4" y="1077.0" >Marcus</text>
<circle cx="2168.5" cy="1111.7" r="8" fill="#640078"/>
<text font-size="21" fill="#605e5c" textLength="79.5" lengthAdjust="spacingAndGlyphs" x="2181.4" y="1118.7" >Amanda</text>
<path d="M18.500,203 V222.500 H38" fill="none" stroke="#252423" stroke-width="2" />
<rect x="21.7" y="207.0" width="3.0" height="12.8" fill="none" stroke="#252423" stroke-width="1.5"/>
<rect x="27.8" y="210.2" width="2.6" height="9.6" fill="none" stroke="#252423" stroke-width="1.5"/>
<rect x="34.0" y="204.2" width="2.5" height="15.6" fill="none" stroke="#252423" stroke-width="1.5"/>
<rect x="17.0" y="263.0" width="22.0" height="20.0" fill="none" stroke="#797775" stroke-width="1.6"/>
<line x1="17.0" y1="268.0" x2="39.0" y2="268.0" stroke="#797775" stroke-width="1.4" />
<line x1="17.0" y1="273.0" x2="39.0" y2="273.0" stroke="#797775" stroke-width="1.4" />
<line x1="17.0" y1="278.0" x2="39.0" y2="278.0" stroke="#797775" stroke-width="1.4" />
<line x1="24.3" y1="268.0" x2="24.3" y2="283.0" stroke="#797775" stroke-width="1.4" />
<line x1="31.6" y1="268.0" x2="31.6" y2="283.0" stroke="#797775" stroke-width="1.4" />
<rect x="17.0" y="263.0" width="22.0" height="5.0" fill="none" stroke="#797775" stroke-width="1.6"/>
<rect x="15.0" y="327.0" width="11.0" height="10.0" fill="none" stroke="#797775" stroke-width="1.6"/>
<line x1="15.0" y1="330.0" x2="26.0" y2="330.0" stroke="#797775" stroke-width="1.2" />
<rect x="31.0" y="321.0" width="10.0" height="8.0" fill="none" stroke="#797775" stroke-width="1.6"/>
<line x1="31.0" y1="324.0" x2="41.0" y2="324.0" stroke="#797775" stroke-width="1.2" />
<rect x="31.0" y="335.0" width="10.0" height="9.0" fill="none" stroke="#797775" stroke-width="1.6"/>
<line x1="31.0" y1="338.0" x2="41.0" y2="338.0" stroke="#797775" stroke-width="1.2" />
<path d="M26,332 H28.5 V325 H31 M28.5,332 V340 H31" fill="none" stroke="#797775" stroke-width="1.4" />
<path d="M20,393 V383 H28 L34,389 V403 M28,383 V389 H34 M35,392 Q39,398 35,404" fill="none" stroke="#797775" stroke-width="1.5" />
<text font-size="8.5" fill="#797775" font-weight="bold" textLength="19.0" lengthAdjust="spacingAndGlyphs" x="13.0" y="404.5" >DAX</text>
<path d="M20,456 V442 H28 L35,449 V456 M28,442 V449 H35" fill="none" stroke="#797775" stroke-width="1.5" />
<text font-size="8.5" fill="#797775" font-weight="bold" textLength="27.0" lengthAdjust="spacingAndGlyphs" x="14.0" y="465.0" >TMDL</text>
<text font-size="21.5" fill="#252423" textLength="30.5" lengthAdjust="spacingAndGlyphs" x="31.5" y="26.8" >File</text>
<text font-size="21.5" fill="#252423" textLength="57.0" lengthAdjust="spacingAndGlyphs" x="119.0" y="26.8" stroke="#252423" stroke-width="0.75">Home</text>
<text font-size="21.5" fill="#252423" textLength="51.2" lengthAdjust="spacingAndGlyphs" x="222.8" y="26.8" >Insert</text>
<text font-size="21.5" fill="#252423" textLength="87.5" lengthAdjust="spacingAndGlyphs" x="322.5" y="26.8" >Modeling</text>
<text font-size="21.5" fill="#252423" textLength="44.0" lengthAdjust="spacingAndGlyphs" x="458.0" y="26.8" >View</text>
<text font-size="21.5" fill="#252423" textLength="83.0" lengthAdjust="spacingAndGlyphs" x="550.0" y="26.8" >Optimize</text>
<text font-size="21.5" fill="#252423" textLength="42.6" lengthAdjust="spacingAndGlyphs" x="681.0" y="26.8" >Help</text>
<rect x="118.0" y="37.0" width="59.0" height="4.5" fill="#2f7d68" />
<rect x="2424.5" y="1.0" width="124.5" height="35.5" fill="#2f7d68" rx="6" />
<text font-size="20.5" fill="#fff" textLength="44.0" lengthAdjust="spacingAndGlyphs" x="2470.5" y="26.2" >Share</text>
<path d="M2521,14.5 L2529,22.5 L2537,14.5" fill="none" stroke="#fff" stroke-width="2" />
<path d="M2447,12 H2439.5 Q2436.5,12 2436.5,15 V25 Q2436.5,28 2439.5,28 H2452.5 Q2455.5,28 2455.5,25 V23.5" fill="none" stroke="#fff" stroke-width="1.8" />
<path d="M2443.5,23 Q2444,14.5 2453,14.5 V10 L2460.5,16.5 L2453,23 V18.5 Q2446.5,18.5 2443.5,23Z" fill="none" stroke="#fff" stroke-width="1.6" stroke-linejoin="round"/>
<path d="M2538,174 L2544,168 L2550,174" fill="none" stroke="#252423" stroke-width="2" />
<line x1="236.6" y1="49.0" x2="236.6" y2="181.0" stroke="#d9d8d7" stroke-width="1" />
<line x1="773.6" y1="49.0" x2="773.6" y2="181.0" stroke="#d9d8d7" stroke-width="1" />
<line x1="946.0" y1="49.0" x2="946.0" y2="181.0" stroke="#d9d8d7" stroke-width="1" />
<line x1="1166.0" y1="49.0" x2="1166.0" y2="181.0" stroke="#d9d8d7" stroke-width="1" />
<line x1="1444.0" y1="49.0" x2="1444.0" y2="181.0" stroke="#d9d8d7" stroke-width="1" />
<line x1="1555.0" y1="49.0" x2="1555.0" y2="181.0" stroke="#d9d8d7" stroke-width="1" />
<line x1="1641.6" y1="49.0" x2="1641.6" y2="181.0" stroke="#d9d8d7" stroke-width="1" />
<line x1="1838.0" y1="49.0" x2="1838.0" y2="181.0" stroke="#d9d8d7" stroke-width="1" />
<text font-size="15.5" fill="#323130" textLength="65.0" lengthAdjust="spacingAndGlyphs" x="83.8" y="178.5" >Clipboard</text>
<text font-size="15.5" fill="#323130" textLength="31.5" lengthAdjust="spacingAndGlyphs" x="489.8" y="178.5" >Data</text>
<text font-size="15.5" fill="#323130" textLength="51.0" lengthAdjust="spacingAndGlyphs" x="834.7" y="178.5" >Queries</text>
<text font-size="15.5" fill="#323130" textLength="38.0" lengthAdjust="spacingAndGlyphs" x="1037.5" y="178.5" >Insert</text>
<text font-size="15.5" fill="#323130" textLength="80.0" lengthAdjust="spacingAndGlyphs" x="1265.5" y="178.5" >Calculations</text>
<text font-size="15.5" fill="#323130" textLength="67.0" lengthAdjust="spacingAndGlyphs" x="1466.0" y="178.5" >Sensitivity</text>
<text font-size="15.5" fill="#323130" textLength="37.0" lengthAdjust="spacingAndGlyphs" x="1579.5" y="178.5" >Share</text>
<text font-size="15.5" fill="#323130" textLength="48.0" lengthAdjust="spacingAndGlyphs" x="1715.5" y="178.5" >Copilot</text>
<text font-size="20" fill="#c8c6c4" textLength="42.3" lengthAdjust="spacingAndGlyphs" x="17.7" y="125.4" >Paste</text>
<text font-size="20" fill="#c8c6c4" textLength="26.5" lengthAdjust="spacingAndGlyphs" x="104.5" y="74.1" >Cut</text>
<text font-size="20" fill="#c8c6c4" textLength="40.5" lengthAdjust="spacingAndGlyphs" x="104.5" y="110.4" >Copy</text>
<text font-size="20" fill="#c8c6c4" textLength="117.0" lengthAdjust="spacingAndGlyphs" x="104.5" y="146.7" >Format painter</text>
<rect x="22.4" y="64.4" width="31.4" height="35.3" fill="#f4f6dc" stroke="#f3c3b1" stroke-width="1.5"/>
<rect x="27.0" y="67.0" width="24.0" height="29.0" fill="#fafafa" />
<path d="M28.4,69.4 V63.500 H33 Q33.500,58 38,58 Q42.500,58 43,63.500 H47.800 V69.4Z" fill="#fafafa" stroke="#c8c6c4" stroke-width="1.8" />
<rect x="42.3" y="76.3" width="20.4" height="26.4" fill="#fafafa" stroke="#c8c6c4" stroke-width="2"/>
<path d="M82.2,55.4 L90.6,72.9 M91.1,55.4 L82.7,72.9" fill="none" stroke="#c2c0be" stroke-width="1.6" />
<circle cx="82.500" cy="75.9" r="2.5" fill="none" stroke="#a9cbe6" stroke-width="1.6"/><circle cx="91.6" cy="75.9" r="2.5" fill="none" stroke="#a9cbe6" stroke-width="1.6"/>
<path d="M82.7,111.7 H75.5 V91.5 H84 L87,94.500" fill="none" stroke="#c8c6c4" stroke-width="1.8" />
<path d="M84.500,95.5 H93 L98.500,101 V114.5 H84.500Z M93,95.5 V101 H98.500" fill="#fafafa" stroke="#c8c6c4" stroke-width="1.8" />
<line x1="88.0" y1="106.2" x2="95.5" y2="106.2" stroke="#c8c6c4" stroke-width="1.4" />
<line x1="88.0" y1="109.7" x2="95.5" y2="109.7" stroke="#c8c6c4" stroke-width="1.4" />
<path d="M75.7,137.1 L85.2,133.1 L92.1,141.6 L85.2,149.1Z" fill="#f6f5de" stroke="#f2b9a4" stroke-width="1.6" stroke-linejoin="round"/>
<path d="M78,138.500 L90,143.500" fill="none" stroke="#f2b9a4" stroke-width="1.4" />
<path d="M85.2,133.1 L89.6,130.1 L96.1,138.6 L92.1,141.6Z" fill="#fafafa" stroke="#b9b7b5" stroke-width="1.7" stroke-linejoin="round"/>
<path d="M92.1,133.1 L98.1,128.1" fill="none" stroke="#b9b7b5" stroke-width="4.4" stroke-linecap="round"/>
<path d="M92.1,133.1 L98.1,128.1" fill="none" stroke="#fafafa" stroke-width="1.6" stroke-linecap="round"/>
<text font-size="20" fill="#252423" textLength="26.8" lengthAdjust="spacingAndGlyphs" x="266.1" y="126.2" >Get</text>
<text font-size="20" fill="#252423" textLength="33.5" lengthAdjust="spacingAndGlyphs" x="253.8" y="149.8" >data</text>
<path d="M293.55,143.0 L297.55,147.0 L301.55,143.0" fill="none" stroke="#252423" stroke-width="1.6" />
<text font-size="20" fill="#252423" textLength="38.2" lengthAdjust="spacingAndGlyphs" x="331.9" y="126.2" >Excel</text>
<text font-size="20" fill="#252423" textLength="78.0" lengthAdjust="spacingAndGlyphs" x="312.0" y="149.8" >workbook</text>
<text font-size="20" fill="#252423" textLength="68.2" lengthAdjust="spacingAndGlyphs" x="399.9" y="126.2" >OneLake</text>
<text font-size="20" fill="#252423" textLength="56.0" lengthAdjust="spacingAndGlyphs" x="397.0" y="149.8" >catalog</text>
<path d="M459.3,143.0 L463.3,147.0 L467.3,143.0" fill="none" stroke="#252423" stroke-width="1.6" />
<text font-size="20" fill="#252423" textLength="29.6" lengthAdjust="spacingAndGlyphs" x="490.2" y="126.2" >SQL</text>
<text font-size="20" fill="#252423" textLength="49.3" lengthAdjust="spacingAndGlyphs" x="480.4" y="149.8" >Server</text>
<text font-size="20" fill="#252423" textLength="40.2" lengthAdjust="spacingAndGlyphs" x="544.9" y="126.2" >Enter</text>
<text font-size="20" fill="#252423" textLength="33.5" lengthAdjust="spacingAndGlyphs" x="548.2" y="149.8" >data</text>
<text font-size="20" fill="#252423" textLength="76.9" lengthAdjust="spacingAndGlyphs" x="598.0" y="126.2" >Dataverse</text>
<text font-size="20" fill="#252423" textLength="52.0" lengthAdjust="spacingAndGlyphs" x="693.5" y="126.2" >Recent</text>
<text font-size="20" fill="#252423" textLength="58.0" lengthAdjust="spacingAndGlyphs" x="681.5" y="149.8" >sources</text>
<path d="M745.8,143.0 L749.8,147.0 L753.8,143.0" fill="none" stroke="#252423" stroke-width="1.6" />
<text font-size="20" fill="#252423" textLength="78.5" lengthAdjust="spacingAndGlyphs" x="788.8" y="126.2" >Transform</text>
<text font-size="20" fill="#252423" textLength="33.5" lengthAdjust="spacingAndGlyphs" x="802.2" y="149.8" >data</text>
<path d="M842.05,143.0 L846.05,147.0 L850.05,143.0" fill="none" stroke="#252423" stroke-width="1.6" />
<text font-size="20" fill="#252423" textLength="58.5" lengthAdjust="spacingAndGlyphs" x="872.8" y="126.2" >Refresh</text>
<path d="M898.0,143.0 L902,147.0 L906.0,143.0" fill="none" stroke="#252423" stroke-width="1.6" />
<text font-size="20" fill="#252423" textLength="31.0" lengthAdjust="spacingAndGlyphs" x="973.5" y="126.2" >New</text>
<text font-size="20" fill="#252423" textLength="44.0" lengthAdjust="spacingAndGlyphs" x="967.0" y="149.8" >visual</text>
<text font-size="20" fill="#252423" textLength="31.0" lengthAdjust="spacingAndGlyphs" x="1033.8" y="126.2" >Text</text>
<text font-size="20" fill="#252423" textLength="28.0" lengthAdjust="spacingAndGlyphs" x="1035.3" y="149.8" >box</text>
<text font-size="20" fill="#252423" textLength="41.0" lengthAdjust="spacingAndGlyphs" x="1096.0" y="126.2" >More</text>
<text font-size="20" fill="#252423" textLength="50.0" lengthAdjust="spacingAndGlyphs" x="1082.5" y="149.8" >visuals</text>
<path d="M1138.8,143.0 L1142.8,147.0 L1146.8,143.0" fill="none" stroke="#252423" stroke-width="1.6" />
<text font-size="20" fill="#c8c6c4" textLength="84.0" lengthAdjust="spacingAndGlyphs" x="1191.5" y="126.2" >New visual</text>
<text font-size="20" fill="#c8c6c4" textLength="83.0" lengthAdjust="spacingAndGlyphs" x="1183.0" y="149.8" >calculation</text>
<path d="M1272.3,143.0 L1276.3,147.0 L1280.3,143.0" fill="none" stroke="#c8c6c4" stroke-width="1.6" />
<text font-size="20" fill="#252423" textLength="31.0" lengthAdjust="spacingAndGlyphs" x="1308.1" y="126.2" >New</text>
<text font-size="20" fill="#252423" textLength="66.0" lengthAdjust="spacingAndGlyphs" x="1290.6" y="149.8" >measure</text>
<text font-size="20" fill="#252423" textLength="45.0" lengthAdjust="spacingAndGlyphs" x="1373.7" y="126.2" >Quick</text>
<text font-size="20" fill="#252423" textLength="66.0" lengthAdjust="spacingAndGlyphs" x="1363.2" y="149.8" >measure</text>
<text font-size="20" fill="#c8c6c4" textLength="79.0" lengthAdjust="spacingAndGlyphs" x="1459.8" y="126.2" >Sensitivity</text>
<path d="M1495.3,143.0 L1499.3,147.0 L1503.3,143.0" fill="none" stroke="#c8c6c4" stroke-width="1.6" />
<text font-size="20" fill="#252423" textLength="57.0" lengthAdjust="spacingAndGlyphs" x="1568.5" y="126.2" >Publish</text>
<text font-size="20" fill="#252423" textLength="103.0" lengthAdjust="spacingAndGlyphs" x="1656.5" y="126.2" >Prep data for</text>
<text font-size="20" fill="#252423" textLength="17.0" lengthAdjust="spacingAndGlyphs" x="1699.5" y="149.8" >AI</text>
<text font-size="20" fill="#252423" textLength="57.5" lengthAdjust="spacingAndGlyphs" x="1765.4" y="126.2" >Copilot</text>
<ellipse cx="279" cy="66" rx="15.5" ry="6.5" stroke="#3b3a39" stroke-width="1.8" fill="none"/>
<path d="M263.5,66 V97 Q263.5,103 279,103" fill="none" stroke="#3b3a39" stroke-width="1.8" />
<path d="M294.5,66 V80" fill="none" stroke="#3b3a39" stroke-width="1.8" />
<rect x="280.0" y="81.0" width="22.0" height="22.0" fill="#fafafa" stroke="#3b3a39" stroke-width="1.8"/>
<rect x="280.0" y="81.0" width="22.0" height="6.0" fill="#8a8886" />
<line x1="280.0" y1="92.0" x2="302.0" y2="92.0" stroke="#3b3a39" stroke-width="1.3" />
<line x1="280.0" y1="97.5" x2="302.0" y2="97.5" stroke="#3b3a39" stroke-width="1.3" />
<line x1="287.3" y1="87.0" x2="287.3" y2="103.0" stroke="#3b3a39" stroke-width="1.3" />
<line x1="294.6" y1="87.0" x2="294.6" y2="103.0" stroke="#3b3a39" stroke-width="1.3" />
<path d="M338,60 H357 L367,70 V82 M357,60 V70 H367 M338,60 V99 H354" fill="none" stroke="#8a8886" stroke-width="1.8" />
<rect x="355.0" y="82.0" width="21.0" height="21.0" fill="#2f7d3f" />
<text font-size="17" fill="#fff" font-weight="bold" x="359.5" y="99.5" >X</text>
<circle cx="434.2" cy="80" r="19.6" stroke="#3b3a39" stroke-width="2.2" fill="none"/>
<path d="M426.2,64 Q416.1,69.3 414.5,80 Q415.1,88.5 420.4,91.7 L425.7,91.7 Q421.5,83.1 423.6,75.7 Q425.2,70.9 428.9,68.8 Q436.4,65.6 444.9,66.1 Q441.7,59.7 434.2,59.2 Q428.9,59.7 426.2,64Z" fill="#3b3a39" />
<path d="M427.8,70.4 Q429,79 433.2,83.1 Q436,86 439.6,87.4" fill="none" stroke="#3b3a39" stroke-width="1.9" />
<path d="M425.7,91.7 Q432,92.500 436.4,90.6 Q440,89 443.8,84.2 Q447,82 453,85.3" fill="none" stroke="#3b3a39" stroke-width="1.9" />
<path d="M489,59 H507 L518,70 V75 M507,59 V70 H518 M489,59 V99 H508" fill="none" stroke="#3b3a39" stroke-width="1.8" />
<ellipse cx="519" cy="81" rx="8.5" ry="3.6" stroke="#d9742f" stroke-width="1.8" fill="none"/>
<path d="M510.5,81 V99 Q510.5,103 519,103 Q527.5,103 527.5,99 V81" fill="none" stroke="#d9742f" stroke-width="1.8" />
<line x1="545.0" y1="73.0" x2="586.0" y2="73.0" stroke="#8a8886" stroke-width="1.4" />
<line x1="545.0" y1="86.0" x2="586.0" y2="86.0" stroke="#8a8886" stroke-width="1.4" />
<line x1="558.5" y1="65.0" x2="558.5" y2="99.0" stroke="#8a8886" stroke-width="1.4" />
<line x1="572.0" y1="65.0" x2="572.0" y2="99.0" stroke="#8a8886" stroke-width="1.4" />
<rect x="558.0" y="59.5" width="28.0" height="5.5" fill="#c8c6c4" />
<path d="M545,72 V99 H586 V59 H558" fill="none" stroke="#3b3a39" stroke-width="1.6" />
<line x1="558.0" y1="65.0" x2="586.0" y2="65.0" stroke="#3b3a39" stroke-width="1.4" />
<path d="M552,55 V77 M541,66 H563" fill="none" stroke="#4a9a5c" stroke-width="2.4" />
<path d="M626,93.5 Q615.2,89.4 616.9,78.6 Q619.4,66.2 634.3,63.7 Q642.6,62.9 645.9,65.4 Q652.5,62.1 656.6,67.9 Q659.9,76.2 652.5,86.1 Q645.9,93.5 635.9,94.4 Q629.3,94.4 627.7,89.4 Q626,82.8 630.1,77 Q634.3,71.2 641.7,72 Q648.4,73.7 647.5,79.5 Q645.9,85.3 639.2,85.8 Q633.4,85.3 632.6,80.3 Q633.4,75.3 638.4,75.3" fill="none" stroke="#3b3a39" stroke-width="1.9" />
<path d="M704,59 H723 L734,70 V80 M723,59 V70 H734 M704,59 V99 H722" fill="none" stroke="#3b3a39" stroke-width="1.6" />
<circle cx="733" cy="91.5" r="10.5" fill="#fafafa" stroke="#3a7fd0" stroke-width="1.8"/>
<path d="M733,85.500 V92.500 H738.500" fill="none" stroke="#3b3a39" stroke-width="1.6" />
<line x1="808.0" y1="74.0" x2="848.0" y2="74.0" stroke="#8a8886" stroke-width="1.4" />
<line x1="808.0" y1="86.5" x2="848.0" y2="86.5" stroke="#8a8886" stroke-width="1.4" />
<line x1="821.0" y1="66.0" x2="821.0" y2="99.0" stroke="#8a8886" stroke-width="1.4" />
<line x1="834.5" y1="66.0" x2="834.5" y2="99.0" stroke="#8a8886" stroke-width="1.4" />
<rect x="808.0" y="60.0" width="40.0" height="6.0" fill="#c8c6c4" />
<rect x="808.0" y="60.0" width="40.0" height="39.5" fill="none" stroke="#3b3a39" stroke-width="1.6"/>
<line x1="808.0" y1="66.0" x2="848.0" y2="66.0" stroke="#3b3a39" stroke-width="1.4" />
<path d="M822,103 L824,93.500 L843,74.5 Q846.5,71.5 849.800,74.8 Q852.500,78 849.500,81 L830.5,100Z" fill="#fafafa" stroke="#3a7fd0" stroke-width="1.8" stroke-linejoin="round"/>
<path d="M822,103 L824,94 L830,100Z" fill="#6aa5e8" stroke="#3a7fd0" stroke-width="1" />
<line x1="842.5" y1="75.5" x2="849.0" y2="82.0" stroke="#3a7fd0" stroke-width="1.5" />
<path d="M886,59 H905 L916,70 V76 M905,59 V70 H916 M886,59 V99 H902" fill="none" stroke="#3b3a39" stroke-width="1.6" />
<path d="M904.500,90 Q906,82.500 914.500,81.500 Q921,81.500 924,86" fill="none" stroke="#4a9a5c" stroke-width="2" />
<path d="M925.500,81 V87.5 H919" fill="none" stroke="#4a9a5c" stroke-width="2" />
<path d="M925,93.500 Q923,101 915,102 Q908.500,102 905.500,97.500" fill="none" stroke="#4a9a5c" stroke-width="2" />
<path d="M904,102.500 V96 H910.500" fill="none" stroke="#4a9a5c" stroke-width="2" />
<rect x="970.0" y="76.0" width="12.0" height="24.0" fill="#7aa7e0" stroke="#3a6fb5" stroke-width="1.6"/>
<rect x="982.0" y="59.0" width="12.0" height="41.0" fill="#fafafa" stroke="#3b3a39" stroke-width="1.6"/>
<rect x="995.0" y="65.5" width="11.5" height="34.0" fill="#c8c6c4" stroke="#8a8886" stroke-width="1.4"/>
<rect x="991.0" y="88.0" width="6.0" height="12.0" fill="#fafafa" />
<path d="M1001.500,80.500 V103 M990.500,92 H1012.500" fill="none" stroke="#4a9a5c" stroke-width="2.4" />
<rect x="1027.0" y="62.0" width="44.0" height="35.0" fill="none" stroke="#3b3a39" stroke-width="1.6"/>
<rect x="1024.8" y="59.8" width="4.4" height="4.4" fill="#3a6fb5" />
<rect x="1068.8" y="59.8" width="4.4" height="4.4" fill="#3a6fb5" />
<rect x="1024.8" y="94.8" width="4.4" height="4.4" fill="#3a6fb5" />
<rect x="1068.8" y="94.8" width="4.4" height="4.4" fill="#3a6fb5" />
<text font-size="27" fill="#4a8ad4" textLength="19.0" lengthAdjust="spacingAndGlyphs" x="1039.5" y="90.5" >A</text>
<rect x="1098.0" y="77.0" width="12.0" height="23.0" fill="none" stroke="#3b3a39" stroke-width="1.6"/>
<rect x="1110.0" y="60.0" width="12.0" height="40.0" fill="none" stroke="#3b3a39" stroke-width="1.6"/>
<rect x="1122.0" y="68.0" width="10.0" height="32.0" fill="#fafafa" stroke="#3b3a39" stroke-width="1.6"/>
<path d="M1116,103 L1118,93 L1134,76 Q1138,73 1141,77 Q1143,80 1140,83 L1124,100Z" fill="#fafafa" stroke="#4a86c8" stroke-width="1.8" stroke-linejoin="round"/>
<path d="M1116,103 L1118,94 L1124,100Z" fill="#4a86c8" />
<rect x="1213.0" y="77.0" width="12.0" height="23.0" fill="#e9e8e7" stroke="#d6d5d4" stroke-width="1.6"/>
<rect x="1225.0" y="60.0" width="12.0" height="40.0" fill="#fafafa" stroke="#d6d5d4" stroke-width="1.6"/>
<rect x="1237.0" y="67.0" width="10.0" height="18.0" fill="#e3ecf5" stroke="#d6d5d4" stroke-width="1.4"/>
<text font-size="25" fill="#bdbbb9" font-style="italic" x="1233.0" y="100.0" style="font-family:&quot;Liberation Serif&quot;,serif">fx</text>
<rect x="1310.0" y="59.0" width="27.0" height="40.0" fill="none" stroke="#3b3a39" stroke-width="1.8"/>
<rect x="1315.0" y="64.0" width="17.0" height="6.0" fill="#7aa7e0" stroke="#3a6fb5" stroke-width="1.3"/>
<rect x="1314.5" y="76.0" width="4.4" height="4.4" fill="#3b3a39" />
<rect x="1321.5" y="76.0" width="4.4" height="4.4" fill="#3b3a39" />
<rect x="1328.5" y="76.0" width="4.4" height="4.4" fill="#3b3a39" />
<rect x="1314.5" y="84.0" width="4.4" height="4.4" fill="#3b3a39" />
<rect x="1321.5" y="84.0" width="4.4" height="4.4" fill="#3b3a39" />
<rect x="1328.5" y="84.0" width="4.4" height="4.4" fill="#3b3a39" />
<rect x="1314.5" y="92.0" width="4.4" height="4.4" fill="#3b3a39" />
<rect x="1321.5" y="92.0" width="4.4" height="4.4" fill="#3b3a39" />
<rect x="1328.5" y="92.0" width="4.4" height="4.4" fill="#3b3a39" />
<rect x="1382.0" y="59.0" width="27.5" height="40.0" fill="none" stroke="#3b3a39" stroke-width="1.8"/>
<rect x="1391.0" y="64.0" width="14.0" height="5.0" fill="#c8c6c4" stroke="#8a8886" stroke-width="1"/>
<rect x="1386.5" y="76.0" width="4.4" height="4.4" fill="#3b3a39" />
<rect x="1393.5" y="76.0" width="4.4" height="4.4" fill="#3b3a39" />
<rect x="1400.5" y="76.0" width="4.4" height="4.4" fill="#3b3a39" />
<rect x="1386.5" y="84.0" width="4.4" height="4.4" fill="#3b3a39" />
<rect x="1393.5" y="84.0" width="4.4" height="4.4" fill="#3b3a39" />
<rect x="1400.5" y="84.0" width="4.4" height="4.4" fill="#3b3a39" />
<rect x="1386.5" y="92.0" width="4.4" height="4.4" fill="#3b3a39" />
<rect x="1393.5" y="92.0" width="4.4" height="4.4" fill="#3b3a39" />
<rect x="1400.5" y="92.0" width="4.4" height="4.4" fill="#3b3a39" />
<path d="M1381.500,56 L1391,56 L1385.500,67.5 L1392.500,67.5 L1373,85 L1380.500,71 L1373.500,71Z" fill="#e9dfa6" stroke="#e07a30" stroke-width="1.5" stroke-linejoin="round"/>
<rect x="1483.0" y="59.0" width="31.0" height="40.0" fill="#f3f8fb" rx="2" stroke="#c5dce8" stroke-width="1.6"/>
<path d="M1490,76 L1506,60 L1520,74 L1504,90Z" fill="#eef5f9" stroke="#c5dce8" stroke-width="1.6" />
<path d="M1510,62 L1516,56 L1524,64 L1518,70" fill="none" stroke="#c5dce8" stroke-width="1.6" />
<path d="M1494,80 L1504,70 M1497.500,83.500 L1507.500,73.500" fill="none" stroke="#c5dce8" stroke-width="1.4" />
<path d="M1495.3,143.0 L1499.3,147.0 L1503.3,143.0" fill="none" stroke="#c8c6c4" stroke-width="1.6" />
<path d="M1597.300,71.500 V61.600 Q1597.300,59.100 1599.800,59.100 H1609.700 Q1612.200,59.100 1612.200,61.600 V76.500" fill="none" stroke="#3b3a39" stroke-width="1.8" />
<path d="M1589.900,83.100 V74 Q1589.900,71.500 1592.400,71.500 H1602.300 Q1604.800,71.500 1604.800,74 V89.500" fill="none" stroke="#3b3a39" stroke-width="1.8" />
<rect x="1581.6" y="83.1" width="14.9" height="15.7" fill="none" rx="2.5" stroke="#3b3a39" stroke-width="1.8"/>
<path d="M1596,98.800 H1609 M1604.800,93 V98.800" fill="none" stroke="#3b3a39" stroke-width="1.8" />
<path d="M1612.200,102.500 V80.500 M1603.100,89.200 L1612.200,80.100 L1621.300,89.200" fill="none" stroke="#3a7fd0" stroke-width="1.8" />
<rect x="1693.0" y="65.0" width="33.0" height="11.0" fill="none" stroke="#3b3a39" stroke-width="1.8"/>
<rect x="1693.0" y="82.0" width="33.0" height="11.0" fill="none" stroke="#3b3a39" stroke-width="1.8"/>
<rect x="1697.0" y="68.5" width="4.5" height="4.5" fill="#3b3a39" />
<rect x="1717.0" y="85.5" width="4.5" height="4.5" fill="#3b3a39" />
<path d="M1716,57 Q1717,64 1724,65 Q1717,66 1716,73 Q1715,66 1708,65 Q1715,64 1716,57Z" fill="#fafafa" stroke="#4a86c8" stroke-width="1.5" stroke-linejoin="round"/>
<path d="M1727,68 Q1727.5,71.5 1731,72 Q1727.5,72.500 1727,76 Q1726.5,72.5 1723,72 Q1726.5,71.5 1727,68Z" fill="#fafafa" stroke="#4a86c8" stroke-width="1.2" stroke-linejoin="round"/>
<linearGradient id="cp1" x1="0" y1="0" x2="0" y2="1"><stop offset="0" stop-color="#3f86e8"/><stop offset="0.35" stop-color="#52a0c8"/><stop offset="0.62" stop-color="#78b860"/><stop offset="1" stop-color="#c2cc58"/></linearGradient>
<linearGradient id="cp2" x1="0" y1="0" x2="0" y2="1"><stop offset="0" stop-color="#b860c0"/><stop offset="0.4" stop-color="#d8709c"/><stop offset="0.7" stop-color="#ea8070"/><stop offset="1" stop-color="#e0a058"/></linearGradient>
<path d="M1779.5,59.8 L1798.5,59.4 Q1803,60.5 1804.5,64 L1806,67.5 L1796,67.5 Q1794,70 1793.5,72.2 L1788.6,87.9 Q1786,90 1782,89.9 L1775,88.5 Q1771,87 1771.3,83.500 L1773.700,69.7 Q1775,63 1779.5,59.8Z" fill="url(#cp1)" />
<path d="M1796,67.3 L1806,67.3 Q1804.5,61.500 1800,59.6 Q1797.500,62 1796,67.3Z" fill="#2a36b0" />
<path d="M1800.1,70.5 Q1803,68.800 1806.700,68.9 L1812.500,69.2 Q1817,70.5 1816.600,75 L1815.800,81.3 L1810.800,95.3 Q1809.500,98 1806.700,98.2 L1786.900,98.2 Q1783.500,97 1783.300,94 Q1783,91 1786,89.6 Q1792,88 1795.2,86.2 Q1797.500,79 1800.1,70.5Z" fill="url(#cp2)" />
<path d="M1783.300,94 Q1783,91 1786,89.6 L1790,88.6 L1788.500,97 L1786.900,98.2 Q1783.500,97 1783.300,94Z" fill="#de6c34" opacity="0.9"/>
<path d="M2430.0,205 L2421.5,213 L2430.0,221" fill="none" stroke="#252423" stroke-width="1.7" />
<path d="M2439.0,205 L2430.5,213 L2439.0,221" fill="none" stroke="#252423" stroke-width="1.7" />
<path d="M2480.5,205 L2472,213 L2480.5,221" fill="none" stroke="#252423" stroke-width="1.7" />
<path d="M2489.5,205 L2481,213 L2489.5,221" fill="none" stroke="#252423" stroke-width="1.7" />
<path d="M2532.0,205 L2523.5,213 L2532.0,221" fill="none" stroke="#252423" stroke-width="1.7" />
<path d="M2541.0,205 L2532.5,213 L2541.0,221" fill="none" stroke="#252423" stroke-width="1.7" />
<path d="M2442,247.5 L2436,254.5 V263 L2431,263 V254.5 L2425,247.5Z" fill="none" stroke="#252423" stroke-width="1.6" stroke-linejoin="round" transform="rotate(90 2433.5 255.5)"/>
<text font-size="22" fill="#252423" textLength="62.5" lengthAdjust="spacingAndGlyphs" transform="translate(2422.5,278.4) rotate(90)" stroke="#252423" stroke-width="0.35">Filters</text>
<text font-size="22" fill="#252423" textLength="144.4" lengthAdjust="spacingAndGlyphs" transform="translate(2471.5,245.6) rotate(90)" stroke="#252423" stroke-width="0.35">Visualizations</text>
<text font-size="22" fill="#252423" textLength="47.6" lengthAdjust="spacingAndGlyphs" transform="translate(2522.0,245.6) rotate(90)" stroke="#252423" stroke-width="0.35">Data</text>
<rect x="78.0" y="1393.0" width="25.0" height="16.0" fill="none" rx="1.5" stroke="#605e5c" stroke-width="1.7"/>
<path d="M90.5,1409 V1413 M85,1413.5 H96" fill="none" stroke="#605e5c" stroke-width="1.7" />
<rect x="73.5" y="1424.0" width="34.5" height="3.6" fill="#2f7d68" rx="1.8" />
<rect x="148.0" y="1390.0" width="17.0" height="27.0" fill="none" rx="2" stroke="#605e5c" stroke-width="1.7"/>
<line x1="154.5" y1="1412.5" x2="158.5" y2="1412.5" stroke="#605e5c" stroke-width="1.6" />
<path d="M198.0,1407.5 L205.5,1401.5 L205.5,1413.5Z" fill="#c8c6c4" />
<path d="M238.5,1407.5 L231.0,1401.5 L231.0,1413.5Z" fill="#c8c6c4" />
<rect x="249.5" y="1382.0" width="177.0" height="54.0" fill="#ffffff" />
<line x1="250.0" y1="1382.0" x2="250.0" y2="1436.0" stroke="#d2d0ce" stroke-width="1" />
<rect x="249.5" y="1429.5" width="177.0" height="6.0" fill="#2f7d68" />
<text font-size="20" fill="#252423" textLength="114.7" lengthAdjust="spacingAndGlyphs" x="280.3" y="1416.3" >Sales Territory</text>
<rect x="426.5" y="1382.0" width="58.2" height="54.0" fill="#2f7d68" />
<path d="M456,1398.5 V1416.5 M447,1407.5 H465" fill="none" stroke="#fff" stroke-width="4" />
<line x1="0.0" y1="1435.5" x2="2555.0" y2="1435.5" stroke="#dddcdb" stroke-width="1" />
<text font-size="19.5" fill="#484644" textLength="88.0" lengthAdjust="spacingAndGlyphs" x="3.5" y="1461.4" >Page 1 of 1</text>
<text font-size="19" fill="#484644" x="2240.0" y="1460.0" >-</text>
<line x1="2254.0" y1="1453.5" x2="2404.0" y2="1453.5" stroke="#605e5c" stroke-width="1.2" />
<rect x="2329.0" y="1445.0" width="6.0" height="17.0" fill="#605e5c" rx="1" />
<path d="M2418,1447.5 V1459.500 M2412,1453.5 H2424" fill="none" stroke="#484644" stroke-width="1.7" />
<text font-size="19.5" fill="#605e5c" textLength="42.5" lengthAdjust="spacingAndGlyphs" x="2444.6" y="1461.0" >110%</text>
<rect x="2507.5" y="1445.5" width="23.5" height="17.0" fill="none" rx="1.5" stroke="#484644" stroke-width="1.7"/>
<path d="M2512,1453 V1450 H2515.500 M2523,1450 H2526.500 V1453 M2526.5,1455.5 V1458.500 H2523 M2515.5,1458.5 H2512 V1455.500" fill="none" stroke="#484644" stroke-width="1.5" />
</svg></body></html>
